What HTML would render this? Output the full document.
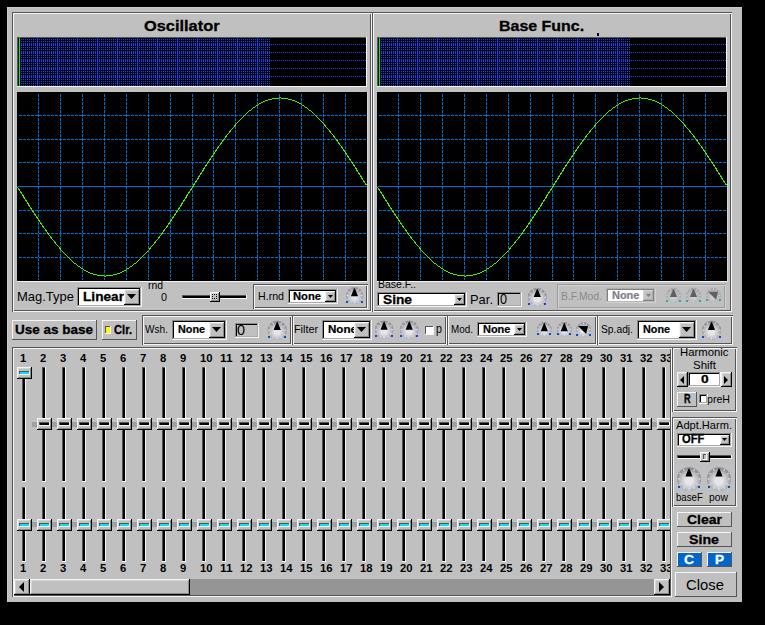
<!DOCTYPE html>
<html><head><meta charset="utf-8"><style>
html,body{margin:0;padding:0;background:#000;width:765px;height:625px;overflow:hidden}
#w{position:relative;width:765px;height:625px;overflow:hidden;font-family:"Liberation Sans",sans-serif}
#w i,#w b,#w svg{position:absolute;display:block}
#w i{font-style:normal}
#w b{white-space:pre;transform-origin:0 0}
</style></head><body><div id="w">
<i style="left:7px;top:7px;width:735px;height:595px;background:#c0c0c0;"></i>
<i style="left:7px;top:7px;width:735px;height:1px;background:#cbcbcb;"></i>
<i style="left:7px;top:7px;width:1px;height:595px;background:#cbcbcb;"></i>
<i style="left:17px;top:86px;width:350px;height:1px;background:#f5f5f5;"></i>
<i style="left:366px;top:37px;width:1px;height:49px;background:#f5f5f5;"></i>
<i style="left:17px;top:37px;width:349px;height:1px;background:#555555;"></i>
<i style="left:17px;top:38px;width:1px;height:48px;background:#555555;"></i>
<i style="left:18px;top:38px;width:348px;height:48px;background:#000;"></i>
<svg style="position:absolute;left:17px;top:37px" width="350" height="49" shape-rendering="crispEdges"><defs><pattern id="p17" x="0" y="0" width="2" height="2" patternUnits="userSpaceOnUse"><rect x="0" y="0" width="1" height="1" fill="#0a46ff"/></pattern><pattern id="q17" x="0" y="0" width="2" height="1" patternUnits="userSpaceOnUse"><rect x="0" y="0" width="1" height="1" fill="#0a46ff"/></pattern></defs><rect x="4" y="2" width="249" height="47" fill="url(#p17)"/>
<rect x="0" y="7" width="349" height="1" fill="url(#q17)"/>
<rect x="0" y="15" width="349" height="1" fill="url(#q17)"/>
<rect x="0" y="23" width="349" height="1" fill="url(#q17)"/>
<rect x="0" y="31" width="349" height="1" fill="url(#q17)"/>
<rect x="0" y="39" width="349" height="1" fill="url(#q17)"/>
<rect x="20" y="1" width="1" height="48" fill="#0a46ff"/>
<rect x="40" y="1" width="1" height="48" fill="#0a46ff"/>
<rect x="60" y="1" width="1" height="48" fill="#0a46ff"/>
<rect x="80" y="1" width="1" height="48" fill="#0a46ff"/>
<rect x="100" y="1" width="1" height="48" fill="#0a46ff"/>
<rect x="120" y="1" width="1" height="48" fill="#0a46ff"/>
<rect x="140" y="1" width="1" height="48" fill="#0a46ff"/>
<rect x="160" y="1" width="1" height="48" fill="#0a46ff"/>
<rect x="180" y="1" width="1" height="48" fill="#0a46ff"/>
<rect x="200" y="1" width="1" height="48" fill="#0a46ff"/>
<rect x="220" y="1" width="1" height="48" fill="#0a46ff"/>
<rect x="240" y="1" width="1" height="48" fill="#0a46ff"/>
<rect x="2" y="1" width="1" height="48" fill="#00ff00"/>
</svg>
<i style="left:377px;top:86px;width:350px;height:1px;background:#f5f5f5;"></i>
<i style="left:726px;top:37px;width:1px;height:49px;background:#f5f5f5;"></i>
<i style="left:377px;top:37px;width:349px;height:1px;background:#555555;"></i>
<i style="left:377px;top:38px;width:1px;height:48px;background:#555555;"></i>
<i style="left:378px;top:38px;width:348px;height:48px;background:#000;"></i>
<svg style="position:absolute;left:377px;top:37px" width="350" height="49" shape-rendering="crispEdges"><defs><pattern id="p377" x="0" y="0" width="2" height="2" patternUnits="userSpaceOnUse"><rect x="0" y="0" width="1" height="1" fill="#0a46ff"/></pattern><pattern id="q377" x="0" y="0" width="2" height="1" patternUnits="userSpaceOnUse"><rect x="0" y="0" width="1" height="1" fill="#0a46ff"/></pattern></defs><rect x="4" y="2" width="249" height="47" fill="url(#p377)"/>
<rect x="0" y="7" width="349" height="1" fill="url(#q377)"/>
<rect x="0" y="15" width="349" height="1" fill="url(#q377)"/>
<rect x="0" y="23" width="349" height="1" fill="url(#q377)"/>
<rect x="0" y="31" width="349" height="1" fill="url(#q377)"/>
<rect x="0" y="39" width="349" height="1" fill="url(#q377)"/>
<rect x="20" y="1" width="1" height="48" fill="#0a46ff"/>
<rect x="40" y="1" width="1" height="48" fill="#0a46ff"/>
<rect x="60" y="1" width="1" height="48" fill="#0a46ff"/>
<rect x="80" y="1" width="1" height="48" fill="#0a46ff"/>
<rect x="100" y="1" width="1" height="48" fill="#0a46ff"/>
<rect x="120" y="1" width="1" height="48" fill="#0a46ff"/>
<rect x="140" y="1" width="1" height="48" fill="#0a46ff"/>
<rect x="160" y="1" width="1" height="48" fill="#0a46ff"/>
<rect x="180" y="1" width="1" height="48" fill="#0a46ff"/>
<rect x="200" y="1" width="1" height="48" fill="#0a46ff"/>
<rect x="220" y="1" width="1" height="48" fill="#0a46ff"/>
<rect x="240" y="1" width="1" height="48" fill="#0a46ff"/>
<rect x="2" y="1" width="1" height="48" fill="#00ff00"/>
</svg>
<i style="left:17px;top:92px;width:351px;height:190px;background:#000;"></i>
<i style="left:17px;top:281px;width:351px;height:1px;background:#f5f5f5;"></i>
<i style="left:367px;top:92px;width:1px;height:190px;background:#d5d5d5;"></i>
<i style="left:38px;top:94px;width:1px;height:186px;background:repeating-linear-gradient(to bottom,#006ecd 0,#006ecd 3px,transparent 3px,transparent 4px);"></i>
<i style="left:60px;top:94px;width:1px;height:186px;background:repeating-linear-gradient(to bottom,#006ecd 0,#006ecd 3px,transparent 3px,transparent 4px);"></i>
<i style="left:82px;top:94px;width:1px;height:186px;background:repeating-linear-gradient(to bottom,#006ecd 0,#006ecd 3px,transparent 3px,transparent 4px);"></i>
<i style="left:104px;top:94px;width:1px;height:186px;background:repeating-linear-gradient(to bottom,#006ecd 0,#006ecd 3px,transparent 3px,transparent 4px);"></i>
<i style="left:126px;top:94px;width:1px;height:186px;background:repeating-linear-gradient(to bottom,#006ecd 0,#006ecd 3px,transparent 3px,transparent 4px);"></i>
<i style="left:148px;top:94px;width:1px;height:186px;background:repeating-linear-gradient(to bottom,#006ecd 0,#006ecd 3px,transparent 3px,transparent 4px);"></i>
<i style="left:170px;top:94px;width:1px;height:186px;background:repeating-linear-gradient(to bottom,#006ecd 0,#006ecd 3px,transparent 3px,transparent 4px);"></i>
<i style="left:192px;top:94px;width:1px;height:186px;background:repeating-linear-gradient(to bottom,#006ecd 0,#006ecd 3px,transparent 3px,transparent 4px);"></i>
<i style="left:213px;top:94px;width:1px;height:186px;background:repeating-linear-gradient(to bottom,#006ecd 0,#006ecd 3px,transparent 3px,transparent 4px);"></i>
<i style="left:235px;top:94px;width:1px;height:186px;background:repeating-linear-gradient(to bottom,#006ecd 0,#006ecd 3px,transparent 3px,transparent 4px);"></i>
<i style="left:257px;top:94px;width:1px;height:186px;background:repeating-linear-gradient(to bottom,#006ecd 0,#006ecd 3px,transparent 3px,transparent 4px);"></i>
<i style="left:279px;top:94px;width:1px;height:186px;background:repeating-linear-gradient(to bottom,#006ecd 0,#006ecd 3px,transparent 3px,transparent 4px);"></i>
<i style="left:301px;top:94px;width:1px;height:186px;background:repeating-linear-gradient(to bottom,#006ecd 0,#006ecd 3px,transparent 3px,transparent 4px);"></i>
<i style="left:323px;top:94px;width:1px;height:186px;background:repeating-linear-gradient(to bottom,#006ecd 0,#006ecd 3px,transparent 3px,transparent 4px);"></i>
<i style="left:345px;top:94px;width:1px;height:186px;background:repeating-linear-gradient(to bottom,#006ecd 0,#006ecd 3px,transparent 3px,transparent 4px);"></i>
<i style="left:19px;top:115px;width:348px;height:1px;background:repeating-linear-gradient(to right,#006ecd 0,#006ecd 3px,transparent 3px,transparent 4px);"></i>
<i style="left:19px;top:139px;width:348px;height:1px;background:repeating-linear-gradient(to right,#006ecd 0,#006ecd 3px,transparent 3px,transparent 4px);"></i>
<i style="left:19px;top:162px;width:348px;height:1px;background:repeating-linear-gradient(to right,#006ecd 0,#006ecd 3px,transparent 3px,transparent 4px);"></i>
<i style="left:19px;top:210px;width:348px;height:1px;background:repeating-linear-gradient(to right,#006ecd 0,#006ecd 3px,transparent 3px,transparent 4px);"></i>
<i style="left:19px;top:233px;width:348px;height:1px;background:repeating-linear-gradient(to right,#006ecd 0,#006ecd 3px,transparent 3px,transparent 4px);"></i>
<i style="left:19px;top:257px;width:348px;height:1px;background:repeating-linear-gradient(to right,#006ecd 0,#006ecd 3px,transparent 3px,transparent 4px);"></i>
<i style="left:18px;top:186px;width:349px;height:1px;background:#006ecd;"></i>
<svg style="position:absolute;left:17px;top:92px" width="351" height="190" shape-rendering="crispEdges"><polyline fill="none" stroke="#4cec00" stroke-width="1.3" points="0.5,95.5 1.5,96.5 2.5,98.5 3.5,99.5 4.5,101.5 5.5,102.5 6.5,104.5 7.5,106.5 8.5,107.5 9.5,109.5 10.5,110.5 11.5,112.5 12.5,114.5 13.5,115.5 14.5,117.5 15.5,118.5 16.5,120.5 17.5,121.5 18.5,123.5 19.5,124.5 20.5,126.5 21.5,127.5 22.5,129.5 23.5,130.5 24.5,132.5 25.5,133.5 26.5,135.5 27.5,136.5 28.5,137.5 29.5,139.5 30.5,140.5 31.5,142.5 32.5,143.5 33.5,144.5 34.5,146.5 35.5,147.5 36.5,148.5 37.5,149.5 38.5,151.5 39.5,152.5 40.5,153.5 41.5,154.5 42.5,155.5 43.5,157.5 44.5,158.5 45.5,159.5 46.5,160.5 47.5,161.5 48.5,162.5 49.5,163.5 50.5,164.5 51.5,165.5 52.5,166.5 53.5,167.5 54.5,168.5 55.5,169.5 56.5,170.5 57.5,171.5 58.5,171.5 59.5,172.5 60.5,173.5 61.5,174.5 62.5,174.5 63.5,175.5 64.5,176.5 65.5,176.5 66.5,177.5 67.5,178.5 68.5,178.5 69.5,179.5 70.5,179.5 71.5,180.5 72.5,180.5 73.5,181.5 74.5,181.5 75.5,181.5 76.5,182.5 77.5,182.5 78.5,182.5 79.5,182.5 80.5,183.5 81.5,183.5 82.5,183.5 83.5,183.5 84.5,183.5 85.5,183.5 86.5,183.5 87.5,184.5 88.5,184.5 89.5,183.5 90.5,183.5 91.5,183.5 92.5,183.5 93.5,183.5 94.5,183.5 95.5,183.5 96.5,182.5 97.5,182.5 98.5,182.5 99.5,182.5 100.5,181.5 101.5,181.5 102.5,181.5 103.5,180.5 104.5,180.5 105.5,179.5 106.5,179.5 107.5,178.5 108.5,178.5 109.5,177.5 110.5,176.5 111.5,176.5 112.5,175.5 113.5,174.5 114.5,174.5 115.5,173.5 116.5,172.5 117.5,171.5 118.5,171.5 119.5,170.5 120.5,169.5 121.5,168.5 122.5,167.5 123.5,166.5 124.5,165.5 125.5,164.5 126.5,163.5 127.5,162.5 128.5,161.5 129.5,160.5 130.5,159.5 131.5,158.5 132.5,157.5 133.5,155.5 134.5,154.5 135.5,153.5 136.5,152.5 137.5,151.5 138.5,149.5 139.5,148.5 140.5,147.5 141.5,146.5 142.5,144.5 143.5,143.5 144.5,142.5 145.5,140.5 146.5,139.5 147.5,137.5 148.5,136.5 149.5,135.5 150.5,133.5 151.5,132.5 152.5,130.5 153.5,129.5 154.5,127.5 155.5,126.5 156.5,124.5 157.5,123.5 158.5,121.5 159.5,120.5 160.5,118.5 161.5,117.5 162.5,115.5 163.5,114.5 164.5,112.5 165.5,110.5 166.5,109.5 167.5,107.5 168.5,106.5 169.5,104.5 170.5,102.5 171.5,101.5 172.5,99.5 173.5,98.5 174.5,96.5 175.5,95.5 176.5,93.5 177.5,91.5 178.5,90.5 179.5,88.5 180.5,87.5 181.5,85.5 182.5,83.5 183.5,82.5 184.5,80.5 185.5,79.5 186.5,77.5 187.5,75.5 188.5,74.5 189.5,72.5 190.5,71.5 191.5,69.5 192.5,68.5 193.5,66.5 194.5,65.5 195.5,63.5 196.5,62.5 197.5,60.5 198.5,59.5 199.5,57.5 200.5,56.5 201.5,54.5 202.5,53.5 203.5,52.5 204.5,50.5 205.5,49.5 206.5,47.5 207.5,46.5 208.5,45.5 209.5,43.5 210.5,42.5 211.5,41.5 212.5,40.5 213.5,38.5 214.5,37.5 215.5,36.5 216.5,35.5 217.5,34.5 218.5,32.5 219.5,31.5 220.5,30.5 221.5,29.5 222.5,28.5 223.5,27.5 224.5,26.5 225.5,25.5 226.5,24.5 227.5,23.5 228.5,22.5 229.5,21.5 230.5,20.5 231.5,19.5 232.5,18.5 233.5,18.5 234.5,17.5 235.5,16.5 236.5,15.5 237.5,15.5 238.5,14.5 239.5,13.5 240.5,13.5 241.5,12.5 242.5,11.5 243.5,11.5 244.5,10.5 245.5,10.5 246.5,9.5 247.5,9.5 248.5,8.5 249.5,8.5 250.5,8.5 251.5,7.5 252.5,7.5 253.5,7.5 254.5,7.5 255.5,6.5 256.5,6.5 257.5,6.5 258.5,6.5 259.5,6.5 260.5,6.5 261.5,6.5 262.5,5.5 263.5,5.5 264.5,6.5 265.5,6.5 266.5,6.5 267.5,6.5 268.5,6.5 269.5,6.5 270.5,6.5 271.5,7.5 272.5,7.5 273.5,7.5 274.5,7.5 275.5,8.5 276.5,8.5 277.5,8.5 278.5,9.5 279.5,9.5 280.5,10.5 281.5,10.5 282.5,11.5 283.5,11.5 284.5,12.5 285.5,13.5 286.5,13.5 287.5,14.5 288.5,15.5 289.5,15.5 290.5,16.5 291.5,17.5 292.5,18.5 293.5,18.5 294.5,19.5 295.5,20.5 296.5,21.5 297.5,22.5 298.5,23.5 299.5,24.5 300.5,25.5 301.5,26.5 302.5,27.5 303.5,28.5 304.5,29.5 305.5,30.5 306.5,31.5 307.5,32.5 308.5,34.5 309.5,35.5 310.5,36.5 311.5,37.5 312.5,38.5 313.5,40.5 314.5,41.5 315.5,42.5 316.5,43.5 317.5,45.5 318.5,46.5 319.5,47.5 320.5,49.5 321.5,50.5 322.5,52.5 323.5,53.5 324.5,54.5 325.5,56.5 326.5,57.5 327.5,59.5 328.5,60.5 329.5,62.5 330.5,63.5 331.5,65.5 332.5,66.5 333.5,68.5 334.5,69.5 335.5,71.5 336.5,72.5 337.5,74.5 338.5,75.5 339.5,77.5 340.5,79.5 341.5,80.5 342.5,82.5 343.5,83.5 344.5,85.5 345.5,87.5 346.5,88.5 347.5,90.5 348.5,91.5 349.5,93.5"/></svg>
<i style="left:377px;top:92px;width:351px;height:190px;background:#000;"></i>
<i style="left:377px;top:281px;width:351px;height:1px;background:#f5f5f5;"></i>
<i style="left:727px;top:92px;width:1px;height:190px;background:#d5d5d5;"></i>
<i style="left:398px;top:94px;width:1px;height:186px;background:repeating-linear-gradient(to bottom,#006ecd 0,#006ecd 3px,transparent 3px,transparent 4px);"></i>
<i style="left:420px;top:94px;width:1px;height:186px;background:repeating-linear-gradient(to bottom,#006ecd 0,#006ecd 3px,transparent 3px,transparent 4px);"></i>
<i style="left:442px;top:94px;width:1px;height:186px;background:repeating-linear-gradient(to bottom,#006ecd 0,#006ecd 3px,transparent 3px,transparent 4px);"></i>
<i style="left:464px;top:94px;width:1px;height:186px;background:repeating-linear-gradient(to bottom,#006ecd 0,#006ecd 3px,transparent 3px,transparent 4px);"></i>
<i style="left:486px;top:94px;width:1px;height:186px;background:repeating-linear-gradient(to bottom,#006ecd 0,#006ecd 3px,transparent 3px,transparent 4px);"></i>
<i style="left:508px;top:94px;width:1px;height:186px;background:repeating-linear-gradient(to bottom,#006ecd 0,#006ecd 3px,transparent 3px,transparent 4px);"></i>
<i style="left:530px;top:94px;width:1px;height:186px;background:repeating-linear-gradient(to bottom,#006ecd 0,#006ecd 3px,transparent 3px,transparent 4px);"></i>
<i style="left:552px;top:94px;width:1px;height:186px;background:repeating-linear-gradient(to bottom,#006ecd 0,#006ecd 3px,transparent 3px,transparent 4px);"></i>
<i style="left:573px;top:94px;width:1px;height:186px;background:repeating-linear-gradient(to bottom,#006ecd 0,#006ecd 3px,transparent 3px,transparent 4px);"></i>
<i style="left:595px;top:94px;width:1px;height:186px;background:repeating-linear-gradient(to bottom,#006ecd 0,#006ecd 3px,transparent 3px,transparent 4px);"></i>
<i style="left:617px;top:94px;width:1px;height:186px;background:repeating-linear-gradient(to bottom,#006ecd 0,#006ecd 3px,transparent 3px,transparent 4px);"></i>
<i style="left:639px;top:94px;width:1px;height:186px;background:repeating-linear-gradient(to bottom,#006ecd 0,#006ecd 3px,transparent 3px,transparent 4px);"></i>
<i style="left:661px;top:94px;width:1px;height:186px;background:repeating-linear-gradient(to bottom,#006ecd 0,#006ecd 3px,transparent 3px,transparent 4px);"></i>
<i style="left:683px;top:94px;width:1px;height:186px;background:repeating-linear-gradient(to bottom,#006ecd 0,#006ecd 3px,transparent 3px,transparent 4px);"></i>
<i style="left:705px;top:94px;width:1px;height:186px;background:repeating-linear-gradient(to bottom,#006ecd 0,#006ecd 3px,transparent 3px,transparent 4px);"></i>
<i style="left:379px;top:115px;width:348px;height:1px;background:repeating-linear-gradient(to right,#006ecd 0,#006ecd 3px,transparent 3px,transparent 4px);"></i>
<i style="left:379px;top:139px;width:348px;height:1px;background:repeating-linear-gradient(to right,#006ecd 0,#006ecd 3px,transparent 3px,transparent 4px);"></i>
<i style="left:379px;top:162px;width:348px;height:1px;background:repeating-linear-gradient(to right,#006ecd 0,#006ecd 3px,transparent 3px,transparent 4px);"></i>
<i style="left:379px;top:210px;width:348px;height:1px;background:repeating-linear-gradient(to right,#006ecd 0,#006ecd 3px,transparent 3px,transparent 4px);"></i>
<i style="left:379px;top:233px;width:348px;height:1px;background:repeating-linear-gradient(to right,#006ecd 0,#006ecd 3px,transparent 3px,transparent 4px);"></i>
<i style="left:379px;top:257px;width:348px;height:1px;background:repeating-linear-gradient(to right,#006ecd 0,#006ecd 3px,transparent 3px,transparent 4px);"></i>
<i style="left:378px;top:186px;width:349px;height:1px;background:#006ecd;"></i>
<svg style="position:absolute;left:377px;top:92px" width="351" height="190" shape-rendering="crispEdges"><polyline fill="none" stroke="#4cec00" stroke-width="1.3" points="0.5,95.5 1.5,96.5 2.5,98.5 3.5,99.5 4.5,101.5 5.5,102.5 6.5,104.5 7.5,106.5 8.5,107.5 9.5,109.5 10.5,110.5 11.5,112.5 12.5,114.5 13.5,115.5 14.5,117.5 15.5,118.5 16.5,120.5 17.5,121.5 18.5,123.5 19.5,124.5 20.5,126.5 21.5,127.5 22.5,129.5 23.5,130.5 24.5,132.5 25.5,133.5 26.5,135.5 27.5,136.5 28.5,137.5 29.5,139.5 30.5,140.5 31.5,142.5 32.5,143.5 33.5,144.5 34.5,146.5 35.5,147.5 36.5,148.5 37.5,149.5 38.5,151.5 39.5,152.5 40.5,153.5 41.5,154.5 42.5,155.5 43.5,157.5 44.5,158.5 45.5,159.5 46.5,160.5 47.5,161.5 48.5,162.5 49.5,163.5 50.5,164.5 51.5,165.5 52.5,166.5 53.5,167.5 54.5,168.5 55.5,169.5 56.5,170.5 57.5,171.5 58.5,171.5 59.5,172.5 60.5,173.5 61.5,174.5 62.5,174.5 63.5,175.5 64.5,176.5 65.5,176.5 66.5,177.5 67.5,178.5 68.5,178.5 69.5,179.5 70.5,179.5 71.5,180.5 72.5,180.5 73.5,181.5 74.5,181.5 75.5,181.5 76.5,182.5 77.5,182.5 78.5,182.5 79.5,182.5 80.5,183.5 81.5,183.5 82.5,183.5 83.5,183.5 84.5,183.5 85.5,183.5 86.5,183.5 87.5,184.5 88.5,184.5 89.5,183.5 90.5,183.5 91.5,183.5 92.5,183.5 93.5,183.5 94.5,183.5 95.5,183.5 96.5,182.5 97.5,182.5 98.5,182.5 99.5,182.5 100.5,181.5 101.5,181.5 102.5,181.5 103.5,180.5 104.5,180.5 105.5,179.5 106.5,179.5 107.5,178.5 108.5,178.5 109.5,177.5 110.5,176.5 111.5,176.5 112.5,175.5 113.5,174.5 114.5,174.5 115.5,173.5 116.5,172.5 117.5,171.5 118.5,171.5 119.5,170.5 120.5,169.5 121.5,168.5 122.5,167.5 123.5,166.5 124.5,165.5 125.5,164.5 126.5,163.5 127.5,162.5 128.5,161.5 129.5,160.5 130.5,159.5 131.5,158.5 132.5,157.5 133.5,155.5 134.5,154.5 135.5,153.5 136.5,152.5 137.5,151.5 138.5,149.5 139.5,148.5 140.5,147.5 141.5,146.5 142.5,144.5 143.5,143.5 144.5,142.5 145.5,140.5 146.5,139.5 147.5,137.5 148.5,136.5 149.5,135.5 150.5,133.5 151.5,132.5 152.5,130.5 153.5,129.5 154.5,127.5 155.5,126.5 156.5,124.5 157.5,123.5 158.5,121.5 159.5,120.5 160.5,118.5 161.5,117.5 162.5,115.5 163.5,114.5 164.5,112.5 165.5,110.5 166.5,109.5 167.5,107.5 168.5,106.5 169.5,104.5 170.5,102.5 171.5,101.5 172.5,99.5 173.5,98.5 174.5,96.5 175.5,95.5 176.5,93.5 177.5,91.5 178.5,90.5 179.5,88.5 180.5,87.5 181.5,85.5 182.5,83.5 183.5,82.5 184.5,80.5 185.5,79.5 186.5,77.5 187.5,75.5 188.5,74.5 189.5,72.5 190.5,71.5 191.5,69.5 192.5,68.5 193.5,66.5 194.5,65.5 195.5,63.5 196.5,62.5 197.5,60.5 198.5,59.5 199.5,57.5 200.5,56.5 201.5,54.5 202.5,53.5 203.5,52.5 204.5,50.5 205.5,49.5 206.5,47.5 207.5,46.5 208.5,45.5 209.5,43.5 210.5,42.5 211.5,41.5 212.5,40.5 213.5,38.5 214.5,37.5 215.5,36.5 216.5,35.5 217.5,34.5 218.5,32.5 219.5,31.5 220.5,30.5 221.5,29.5 222.5,28.5 223.5,27.5 224.5,26.5 225.5,25.5 226.5,24.5 227.5,23.5 228.5,22.5 229.5,21.5 230.5,20.5 231.5,19.5 232.5,18.5 233.5,18.5 234.5,17.5 235.5,16.5 236.5,15.5 237.5,15.5 238.5,14.5 239.5,13.5 240.5,13.5 241.5,12.5 242.5,11.5 243.5,11.5 244.5,10.5 245.5,10.5 246.5,9.5 247.5,9.5 248.5,8.5 249.5,8.5 250.5,8.5 251.5,7.5 252.5,7.5 253.5,7.5 254.5,7.5 255.5,6.5 256.5,6.5 257.5,6.5 258.5,6.5 259.5,6.5 260.5,6.5 261.5,6.5 262.5,5.5 263.5,5.5 264.5,6.5 265.5,6.5 266.5,6.5 267.5,6.5 268.5,6.5 269.5,6.5 270.5,6.5 271.5,7.5 272.5,7.5 273.5,7.5 274.5,7.5 275.5,8.5 276.5,8.5 277.5,8.5 278.5,9.5 279.5,9.5 280.5,10.5 281.5,10.5 282.5,11.5 283.5,11.5 284.5,12.5 285.5,13.5 286.5,13.5 287.5,14.5 288.5,15.5 289.5,15.5 290.5,16.5 291.5,17.5 292.5,18.5 293.5,18.5 294.5,19.5 295.5,20.5 296.5,21.5 297.5,22.5 298.5,23.5 299.5,24.5 300.5,25.5 301.5,26.5 302.5,27.5 303.5,28.5 304.5,29.5 305.5,30.5 306.5,31.5 307.5,32.5 308.5,34.5 309.5,35.5 310.5,36.5 311.5,37.5 312.5,38.5 313.5,40.5 314.5,41.5 315.5,42.5 316.5,43.5 317.5,45.5 318.5,46.5 319.5,47.5 320.5,49.5 321.5,50.5 322.5,52.5 323.5,53.5 324.5,54.5 325.5,56.5 326.5,57.5 327.5,59.5 328.5,60.5 329.5,62.5 330.5,63.5 331.5,65.5 332.5,66.5 333.5,68.5 334.5,69.5 335.5,71.5 336.5,72.5 337.5,74.5 338.5,75.5 339.5,77.5 340.5,79.5 341.5,80.5 342.5,82.5 343.5,83.5 344.5,85.5 345.5,87.5 346.5,88.5 347.5,90.5 348.5,91.5 349.5,93.5"/></svg>
<i style="left:12px;top:12px;width:360px;height:1px;background:#555555;"></i>
<i style="left:12px;top:13px;width:1px;height:299px;background:#555555;"></i>
<i style="left:13px;top:311px;width:359px;height:1px;background:#f5f5f5;"></i>
<i style="left:371px;top:13px;width:1px;height:298px;background:#f5f5f5;"></i>
<i style="left:13px;top:13px;width:358px;height:1px;background:#f5f5f5;"></i>
<i style="left:13px;top:14px;width:1px;height:297px;background:#f5f5f5;"></i>
<i style="left:14px;top:310px;width:357px;height:1px;background:#555555;"></i>
<i style="left:370px;top:14px;width:1px;height:296px;background:#555555;"></i>
<i style="left:372px;top:12px;width:360px;height:1px;background:#555555;"></i>
<i style="left:372px;top:13px;width:1px;height:299px;background:#555555;"></i>
<i style="left:373px;top:311px;width:359px;height:1px;background:#f5f5f5;"></i>
<i style="left:731px;top:13px;width:1px;height:298px;background:#f5f5f5;"></i>
<i style="left:373px;top:13px;width:358px;height:1px;background:#f5f5f5;"></i>
<i style="left:373px;top:14px;width:1px;height:297px;background:#f5f5f5;"></i>
<i style="left:374px;top:310px;width:357px;height:1px;background:#555555;"></i>
<i style="left:730px;top:14px;width:1px;height:296px;background:#555555;"></i>
<b style="left:144.20px;top:17px;font-size:14.84px;line-height:19px;font-weight:bold;color:#000;transform:scaleX(1.1044);-webkit-text-stroke:0.30px #000">Oscillator</b>
<b style="left:499.38px;top:17px;font-size:14.84px;line-height:19px;font-weight:bold;color:#000;transform:scaleX(1.0767);-webkit-text-stroke:0.30px #000">Base Func.</b>
<i style="left:597px;top:33px;width:2px;height:3px;background:#000;"></i>
<b style="left:17.00px;top:288px;font-size:12.96px;line-height:17px;font-weight:normal;color:#000;transform:scaleX(1.0019)">Mag.Type</b>
<i style="left:77px;top:306px;width:65px;height:1px;background:#f5f5f5;"></i>
<i style="left:141px;top:287px;width:1px;height:19px;background:#f5f5f5;"></i>
<i style="left:77px;top:287px;width:64px;height:1px;background:#8a8a8a;"></i>
<i style="left:77px;top:288px;width:1px;height:18px;background:#8a8a8a;"></i>
<i style="left:78px;top:305px;width:63px;height:1px;background:#aaaaaa;"></i>
<i style="left:140px;top:288px;width:1px;height:17px;background:#aaaaaa;"></i>
<i style="left:78px;top:288px;width:62px;height:1px;background:#000000;"></i>
<i style="left:78px;top:289px;width:1px;height:16px;background:#000000;"></i>
<i style="left:79px;top:289px;width:61px;height:16px;background:#fff;"></i>
<b style="left:83.00px;top:288px;font-size:12.96px;line-height:17px;font-weight:bold;color:#000;transform:scaleX(1.0545);-webkit-text-stroke:0.30px #000">Linear</b>
<i style="left:124px;top:304px;width:16px;height:1px;background:#000000;"></i>
<i style="left:139px;top:289px;width:1px;height:15px;background:#000000;"></i>
<i style="left:124px;top:289px;width:15px;height:1px;background:#f5f5f5;"></i>
<i style="left:124px;top:290px;width:1px;height:14px;background:#f5f5f5;"></i>
<i style="left:125px;top:303px;width:14px;height:1px;background:#8a8a8a;"></i>
<i style="left:138px;top:290px;width:1px;height:13px;background:#8a8a8a;"></i>
<i style="left:125px;top:290px;width:13px;height:1px;background:#d5d5d5;"></i>
<i style="left:125px;top:291px;width:1px;height:12px;background:#d5d5d5;"></i>
<i style="left:126px;top:291px;width:12px;height:12px;background:#c0c0c0;"></i>
<svg style="position:absolute;left:127px;top:294px" width="9" height="5"><polygon fill="#000" points="0,0 9,0 4.5,5.0"/></svg>
<b style="left:148.00px;top:278px;font-size:10.80px;line-height:14px;font-weight:normal;color:#000;transform:scaleX(0.9612)">rnd</b>
<b style="left:161.00px;top:290px;font-size:10.80px;line-height:14px;font-weight:normal;color:#000;transform:scaleX(1.0010)">0</b>
<i style="left:182px;top:298px;width:65px;height:1px;background:#f5f5f5;"></i>
<i style="left:246px;top:295px;width:1px;height:3px;background:#f5f5f5;"></i>
<i style="left:182px;top:295px;width:64px;height:1px;background:#555555;"></i>
<i style="left:182px;top:296px;width:1px;height:2px;background:#555555;"></i>
<i style="left:183px;top:296px;width:63px;height:2px;background:#000;"></i>
<i style="left:210px;top:301px;width:10px;height:1px;background:#000000;"></i>
<i style="left:219px;top:292px;width:1px;height:9px;background:#000000;"></i>
<i style="left:210px;top:292px;width:9px;height:1px;background:#f5f5f5;"></i>
<i style="left:210px;top:293px;width:1px;height:8px;background:#f5f5f5;"></i>
<i style="left:211px;top:300px;width:8px;height:1px;background:#8a8a8a;"></i>
<i style="left:218px;top:293px;width:1px;height:7px;background:#8a8a8a;"></i>
<i style="left:211px;top:293px;width:7px;height:1px;background:#d5d5d5;"></i>
<i style="left:211px;top:294px;width:1px;height:6px;background:#d5d5d5;"></i>
<i style="left:212px;top:294px;width:6px;height:6px;background:#c0c0c0;"></i>
<i style="left:212px;top:294px;width:1px;height:1px;background:#000;"></i>
<i style="left:214px;top:294px;width:1px;height:1px;background:#000;"></i>
<i style="left:216px;top:294px;width:1px;height:1px;background:#000;"></i>
<i style="left:212px;top:296px;width:1px;height:1px;background:#000;"></i>
<i style="left:216px;top:296px;width:1px;height:1px;background:#000;"></i>
<i style="left:212px;top:298px;width:1px;height:1px;background:#000;"></i>
<i style="left:214px;top:298px;width:1px;height:1px;background:#000;"></i>
<i style="left:216px;top:298px;width:1px;height:1px;background:#000;"></i>
<i style="left:253px;top:284px;width:115px;height:1px;background:#555555;"></i>
<i style="left:253px;top:285px;width:1px;height:24px;background:#555555;"></i>
<i style="left:254px;top:308px;width:114px;height:1px;background:#f5f5f5;"></i>
<i style="left:367px;top:285px;width:1px;height:23px;background:#f5f5f5;"></i>
<i style="left:254px;top:285px;width:113px;height:1px;background:#f5f5f5;"></i>
<i style="left:254px;top:286px;width:1px;height:22px;background:#f5f5f5;"></i>
<i style="left:255px;top:307px;width:112px;height:1px;background:#555555;"></i>
<i style="left:366px;top:286px;width:1px;height:21px;background:#555555;"></i>
<b style="left:258.00px;top:289px;font-size:10.80px;line-height:14px;font-weight:normal;color:#000;transform:scaleX(0.9846)">H.rnd</b>
<i style="left:288px;top:303px;width:50px;height:1px;background:#f5f5f5;"></i>
<i style="left:337px;top:289px;width:1px;height:14px;background:#f5f5f5;"></i>
<i style="left:288px;top:289px;width:49px;height:1px;background:#8a8a8a;"></i>
<i style="left:288px;top:290px;width:1px;height:13px;background:#8a8a8a;"></i>
<i style="left:289px;top:302px;width:48px;height:1px;background:#aaaaaa;"></i>
<i style="left:336px;top:290px;width:1px;height:12px;background:#aaaaaa;"></i>
<i style="left:289px;top:290px;width:47px;height:1px;background:#000000;"></i>
<i style="left:289px;top:291px;width:1px;height:11px;background:#000000;"></i>
<i style="left:290px;top:291px;width:46px;height:11px;background:#fff;"></i>
<b style="left:293.00px;top:289px;font-size:10.80px;line-height:14px;font-weight:bold;color:#000;transform:scaleX(1.0370);-webkit-text-stroke:0.22px #000">None</b>
<i style="left:325px;top:301px;width:11px;height:1px;background:#000000;"></i>
<i style="left:335px;top:291px;width:1px;height:10px;background:#000000;"></i>
<i style="left:325px;top:291px;width:10px;height:1px;background:#f5f5f5;"></i>
<i style="left:325px;top:292px;width:1px;height:9px;background:#f5f5f5;"></i>
<i style="left:326px;top:300px;width:9px;height:1px;background:#8a8a8a;"></i>
<i style="left:334px;top:292px;width:1px;height:8px;background:#8a8a8a;"></i>
<i style="left:326px;top:292px;width:8px;height:1px;background:#d5d5d5;"></i>
<i style="left:326px;top:293px;width:1px;height:7px;background:#d5d5d5;"></i>
<i style="left:327px;top:293px;width:7px;height:7px;background:#c0c0c0;"></i>
<svg style="position:absolute;left:328px;top:295px" width="5" height="3"><polygon fill="#000" points="0,0 5,0 2.5,3.0"/></svg>
<svg style="position:absolute;left:342px;top:283px" width="25" height="25"><defs><radialGradient id="g3545_2955" cx="0.5" cy="0.58" r="0.5"><stop offset="0" stop-color="#e6e6ea"/><stop offset="0.3" stop-color="#e6e6ea"/><stop offset="0.75" stop-color="#bdbdc1"/><stop offset="1" stop-color="#929294"/></radialGradient></defs><circle cx="12.50" cy="12.50" r="8.50" fill="url(#g3545_2955)"/><line x1="12.50" y1="6.04" x2="12.50" y2="4.43" stroke="#e4e4f8" stroke-width="1"/><line x1="15.73" y1="6.91" x2="16.54" y2="5.51" stroke="#e4e4f8" stroke-width="1"/><line x1="18.09" y1="9.27" x2="19.49" y2="8.46" stroke="#e4e4f8" stroke-width="1"/><line x1="18.96" y1="12.50" x2="20.57" y2="12.50" stroke="#e4e4f8" stroke-width="1"/><line x1="18.09" y1="15.73" x2="19.49" y2="16.54" stroke="#e4e4f8" stroke-width="1"/><line x1="15.73" y1="18.09" x2="16.54" y2="19.49" stroke="#e4e4f8" stroke-width="1"/><line x1="12.50" y1="18.96" x2="12.50" y2="20.57" stroke="#e4e4f8" stroke-width="1"/><line x1="9.27" y1="18.09" x2="8.46" y2="19.49" stroke="#e4e4f8" stroke-width="1"/><line x1="6.91" y1="15.73" x2="5.51" y2="16.54" stroke="#e4e4f8" stroke-width="1"/><line x1="6.04" y1="12.50" x2="4.43" y2="12.50" stroke="#e4e4f8" stroke-width="1"/><line x1="6.91" y1="9.27" x2="5.51" y2="8.46" stroke="#e4e4f8" stroke-width="1"/><line x1="9.27" y1="6.91" x2="8.46" y2="5.51" stroke="#e4e4f8" stroke-width="1"/><rect x="4" y="18" width="2" height="2" fill="#0050d8" shape-rendering="crispEdges"/><rect x="19" y="18" width="2" height="2" fill="#0050d8" shape-rendering="crispEdges"/><polygon fill="#000" points="12.50,4.43 8.90,13.23 16.10,13.23"/></svg>
<b style="left:377.50px;top:277px;font-size:10.80px;line-height:14px;font-weight:normal;color:#000;transform:scaleX(0.9733)">Base.F..</b>
<i style="left:377px;top:306px;width:90px;height:1px;background:#f5f5f5;"></i>
<i style="left:466px;top:292px;width:1px;height:14px;background:#f5f5f5;"></i>
<i style="left:377px;top:292px;width:89px;height:1px;background:#8a8a8a;"></i>
<i style="left:377px;top:293px;width:1px;height:13px;background:#8a8a8a;"></i>
<i style="left:378px;top:305px;width:88px;height:1px;background:#aaaaaa;"></i>
<i style="left:465px;top:293px;width:1px;height:12px;background:#aaaaaa;"></i>
<i style="left:378px;top:293px;width:87px;height:1px;background:#000000;"></i>
<i style="left:378px;top:294px;width:1px;height:11px;background:#000000;"></i>
<i style="left:379px;top:294px;width:86px;height:11px;background:#fff;"></i>
<b style="left:383.00px;top:291px;font-size:12.96px;line-height:17px;font-weight:bold;color:#000;transform:scaleX(1.0605);-webkit-text-stroke:0.30px #000">Sine</b>
<i style="left:454px;top:304px;width:11px;height:1px;background:#000000;"></i>
<i style="left:464px;top:294px;width:1px;height:10px;background:#000000;"></i>
<i style="left:454px;top:294px;width:10px;height:1px;background:#f5f5f5;"></i>
<i style="left:454px;top:295px;width:1px;height:9px;background:#f5f5f5;"></i>
<i style="left:455px;top:303px;width:9px;height:1px;background:#8a8a8a;"></i>
<i style="left:463px;top:295px;width:1px;height:8px;background:#8a8a8a;"></i>
<i style="left:455px;top:295px;width:8px;height:1px;background:#d5d5d5;"></i>
<i style="left:455px;top:296px;width:1px;height:7px;background:#d5d5d5;"></i>
<i style="left:456px;top:296px;width:7px;height:7px;background:#c0c0c0;"></i>
<svg style="position:absolute;left:457px;top:298px" width="5" height="3"><polygon fill="#000" points="0,0 5,0 2.5,3.0"/></svg>
<b style="left:470.00px;top:291px;font-size:12.96px;line-height:17px;font-weight:normal;color:#000;transform:scaleX(0.9970)">Par.</b>
<i style="left:497px;top:306px;width:25px;height:1px;background:#f5f5f5;"></i>
<i style="left:521px;top:292px;width:1px;height:14px;background:#f5f5f5;"></i>
<i style="left:497px;top:292px;width:24px;height:1px;background:#8a8a8a;"></i>
<i style="left:497px;top:293px;width:1px;height:13px;background:#8a8a8a;"></i>
<i style="left:498px;top:305px;width:23px;height:1px;background:#aaaaaa;"></i>
<i style="left:520px;top:293px;width:1px;height:12px;background:#aaaaaa;"></i>
<i style="left:498px;top:293px;width:22px;height:1px;background:#000000;"></i>
<i style="left:498px;top:294px;width:1px;height:11px;background:#000000;"></i>
<i style="left:499px;top:294px;width:21px;height:11px;background:#c0c0c0;"></i>
<b style="left:500.00px;top:290px;font-size:14.04px;line-height:18px;font-weight:normal;color:#000;transform:scaleX(0.8983)">0</b>
<svg style="position:absolute;left:524px;top:284px" width="26" height="26"><defs><radialGradient id="g5373_2972" cx="0.5" cy="0.58" r="0.5"><stop offset="0" stop-color="#e6e6ea"/><stop offset="0.3" stop-color="#e6e6ea"/><stop offset="0.75" stop-color="#bdbdc1"/><stop offset="1" stop-color="#929294"/></radialGradient></defs><circle cx="13.30" cy="13.20" r="9.40" fill="url(#g5373_2972)"/><line x1="13.30" y1="6.06" x2="13.30" y2="4.27" stroke="#e4e4f8" stroke-width="1"/><line x1="16.87" y1="7.01" x2="17.76" y2="5.47" stroke="#e4e4f8" stroke-width="1"/><line x1="19.49" y1="9.63" x2="21.03" y2="8.73" stroke="#e4e4f8" stroke-width="1"/><line x1="20.44" y1="13.20" x2="22.23" y2="13.20" stroke="#e4e4f8" stroke-width="1"/><line x1="19.49" y1="16.77" x2="21.03" y2="17.66" stroke="#e4e4f8" stroke-width="1"/><line x1="16.87" y1="19.39" x2="17.76" y2="20.93" stroke="#e4e4f8" stroke-width="1"/><line x1="13.30" y1="20.34" x2="13.30" y2="22.13" stroke="#e4e4f8" stroke-width="1"/><line x1="9.73" y1="19.39" x2="8.83" y2="20.93" stroke="#e4e4f8" stroke-width="1"/><line x1="7.11" y1="16.77" x2="5.57" y2="17.66" stroke="#e4e4f8" stroke-width="1"/><line x1="6.16" y1="13.20" x2="4.37" y2="13.20" stroke="#e4e4f8" stroke-width="1"/><line x1="7.11" y1="9.63" x2="5.57" y2="8.73" stroke="#e4e4f8" stroke-width="1"/><line x1="9.73" y1="7.01" x2="8.83" y2="5.47" stroke="#e4e4f8" stroke-width="1"/><rect x="4" y="19" width="2" height="2" fill="#0050d8" shape-rendering="crispEdges"/><rect x="20" y="19" width="2" height="2" fill="#0050d8" shape-rendering="crispEdges"/><polygon fill="#000" points="13.30,4.27 9.70,13.07 16.90,13.07"/></svg>
<i style="left:557px;top:284px;width:169px;height:1px;background:#9d9d9d;"></i>
<i style="left:557px;top:285px;width:1px;height:24px;background:#9d9d9d;"></i>
<i style="left:558px;top:308px;width:168px;height:1px;background:#d1d1d1;"></i>
<i style="left:725px;top:285px;width:1px;height:23px;background:#d1d1d1;"></i>
<i style="left:558px;top:285px;width:167px;height:1px;background:#d1d1d1;"></i>
<i style="left:558px;top:286px;width:1px;height:22px;background:#d1d1d1;"></i>
<i style="left:559px;top:307px;width:166px;height:1px;background:#9d9d9d;"></i>
<i style="left:724px;top:286px;width:1px;height:21px;background:#9d9d9d;"></i>
<b style="left:561.00px;top:289px;font-size:10.80px;line-height:14px;font-weight:normal;color:#8a8a8a;transform:scaleX(0.9623)">B.F.Mod.</b>
<i style="left:606px;top:302px;width:50px;height:1px;background:#d1d1d1;"></i>
<i style="left:655px;top:288px;width:1px;height:14px;background:#d1d1d1;"></i>
<i style="left:606px;top:288px;width:49px;height:1px;background:#aeaeae;"></i>
<i style="left:606px;top:289px;width:1px;height:13px;background:#aeaeae;"></i>
<i style="left:607px;top:301px;width:48px;height:1px;background:#b9b9b9;"></i>
<i style="left:654px;top:289px;width:1px;height:12px;background:#b9b9b9;"></i>
<i style="left:607px;top:289px;width:47px;height:1px;background:#818181;"></i>
<i style="left:607px;top:290px;width:1px;height:11px;background:#818181;"></i>
<i style="left:608px;top:290px;width:46px;height:11px;background:#fff;"></i>
<b style="left:611.80px;top:288px;font-size:10.80px;line-height:14px;font-weight:bold;color:#80808c;transform:scaleX(1.0148);-webkit-text-stroke:0.22px #80808c">None</b>
<i style="left:643px;top:300px;width:11px;height:1px;background:#818181;"></i>
<i style="left:653px;top:290px;width:1px;height:10px;background:#818181;"></i>
<i style="left:643px;top:290px;width:10px;height:1px;background:#d1d1d1;"></i>
<i style="left:643px;top:291px;width:1px;height:9px;background:#d1d1d1;"></i>
<i style="left:644px;top:299px;width:9px;height:1px;background:#aeaeae;"></i>
<i style="left:652px;top:291px;width:1px;height:8px;background:#aeaeae;"></i>
<i style="left:644px;top:291px;width:8px;height:1px;background:#c7c7c7;"></i>
<i style="left:644px;top:292px;width:1px;height:7px;background:#c7c7c7;"></i>
<i style="left:645px;top:292px;width:7px;height:7px;background:#c0c0c0;"></i>
<svg style="position:absolute;left:646px;top:294px" width="5" height="3"><polygon fill="#808080" points="0,0 5,0 2.5,3.0"/></svg>
<svg style="position:absolute;left:662px;top:283px" width="23" height="23"><defs><radialGradient id="g6735_2953" cx="0.5" cy="0.58" r="0.5"><stop offset="0" stop-color="#cfcfd1"/><stop offset="0.3" stop-color="#cfcfd1"/><stop offset="0.75" stop-color="#b6b6b8"/><stop offset="1" stop-color="#a2a2a4"/></radialGradient></defs><circle cx="11.50" cy="12.30" r="7.50" fill="url(#g6735_2953)"/><line x1="11.50" y1="6.60" x2="11.50" y2="5.18" stroke="#d4dcdc" stroke-width="1"/><line x1="14.35" y1="7.36" x2="15.06" y2="6.13" stroke="#d4dcdc" stroke-width="1"/><line x1="16.44" y1="9.45" x2="17.67" y2="8.74" stroke="#d4dcdc" stroke-width="1"/><line x1="17.20" y1="12.30" x2="18.62" y2="12.30" stroke="#d4dcdc" stroke-width="1"/><line x1="16.44" y1="15.15" x2="17.67" y2="15.86" stroke="#d4dcdc" stroke-width="1"/><line x1="14.35" y1="17.24" x2="15.06" y2="18.47" stroke="#d4dcdc" stroke-width="1"/><line x1="11.50" y1="18.00" x2="11.50" y2="19.43" stroke="#d4dcdc" stroke-width="1"/><line x1="8.65" y1="17.24" x2="7.94" y2="18.47" stroke="#d4dcdc" stroke-width="1"/><line x1="6.56" y1="15.15" x2="5.33" y2="15.86" stroke="#d4dcdc" stroke-width="1"/><line x1="5.80" y1="12.30" x2="4.38" y2="12.30" stroke="#d4dcdc" stroke-width="1"/><line x1="6.56" y1="9.45" x2="5.33" y2="8.74" stroke="#d4dcdc" stroke-width="1"/><line x1="8.65" y1="7.36" x2="7.94" y2="6.13" stroke="#d4dcdc" stroke-width="1"/><rect x="4" y="17" width="2" height="2" fill="#30a8b0" shape-rendering="crispEdges"/><rect x="17" y="17" width="2" height="2" fill="#30a8b0" shape-rendering="crispEdges"/><polygon fill="#606060" points="11.50,5.18 7.90,13.98 15.10,13.98"/></svg>
<svg style="position:absolute;left:682px;top:283px" width="23" height="23"><defs><radialGradient id="g6935_2953" cx="0.5" cy="0.58" r="0.5"><stop offset="0" stop-color="#cfcfd1"/><stop offset="0.3" stop-color="#cfcfd1"/><stop offset="0.75" stop-color="#b6b6b8"/><stop offset="1" stop-color="#a2a2a4"/></radialGradient></defs><circle cx="11.50" cy="12.30" r="7.50" fill="url(#g6935_2953)"/><line x1="11.50" y1="6.60" x2="11.50" y2="5.18" stroke="#d4dcdc" stroke-width="1"/><line x1="14.35" y1="7.36" x2="15.06" y2="6.13" stroke="#d4dcdc" stroke-width="1"/><line x1="16.44" y1="9.45" x2="17.67" y2="8.74" stroke="#d4dcdc" stroke-width="1"/><line x1="17.20" y1="12.30" x2="18.62" y2="12.30" stroke="#d4dcdc" stroke-width="1"/><line x1="16.44" y1="15.15" x2="17.67" y2="15.86" stroke="#d4dcdc" stroke-width="1"/><line x1="14.35" y1="17.24" x2="15.06" y2="18.47" stroke="#d4dcdc" stroke-width="1"/><line x1="11.50" y1="18.00" x2="11.50" y2="19.43" stroke="#d4dcdc" stroke-width="1"/><line x1="8.65" y1="17.24" x2="7.94" y2="18.47" stroke="#d4dcdc" stroke-width="1"/><line x1="6.56" y1="15.15" x2="5.33" y2="15.86" stroke="#d4dcdc" stroke-width="1"/><line x1="5.80" y1="12.30" x2="4.38" y2="12.30" stroke="#d4dcdc" stroke-width="1"/><line x1="6.56" y1="9.45" x2="5.33" y2="8.74" stroke="#d4dcdc" stroke-width="1"/><line x1="8.65" y1="7.36" x2="7.94" y2="6.13" stroke="#d4dcdc" stroke-width="1"/><rect x="4" y="17" width="2" height="2" fill="#30a8b0" shape-rendering="crispEdges"/><rect x="17" y="17" width="2" height="2" fill="#30a8b0" shape-rendering="crispEdges"/><polygon fill="#606060" points="11.50,5.18 7.90,13.98 15.10,13.98"/></svg>
<svg style="position:absolute;left:702px;top:284px" width="22" height="22"><defs><radialGradient id="g7135_2953" cx="0.5" cy="0.58" r="0.5"><stop offset="0" stop-color="#cfcfd1"/><stop offset="0.3" stop-color="#cfcfd1"/><stop offset="0.75" stop-color="#b6b6b8"/><stop offset="1" stop-color="#a2a2a4"/></radialGradient></defs><circle cx="11.50" cy="11.30" r="7.30" fill="url(#g7135_2953)"/><line x1="11.50" y1="5.75" x2="11.50" y2="4.37" stroke="#d4dcdc" stroke-width="1"/><line x1="14.27" y1="6.50" x2="14.97" y2="5.29" stroke="#d4dcdc" stroke-width="1"/><line x1="16.30" y1="8.53" x2="17.51" y2="7.83" stroke="#d4dcdc" stroke-width="1"/><line x1="17.05" y1="11.30" x2="18.43" y2="11.30" stroke="#d4dcdc" stroke-width="1"/><line x1="16.30" y1="14.07" x2="17.51" y2="14.77" stroke="#d4dcdc" stroke-width="1"/><line x1="14.27" y1="16.10" x2="14.97" y2="17.31" stroke="#d4dcdc" stroke-width="1"/><line x1="11.50" y1="16.85" x2="11.50" y2="18.24" stroke="#d4dcdc" stroke-width="1"/><line x1="8.73" y1="16.10" x2="8.03" y2="17.31" stroke="#d4dcdc" stroke-width="1"/><line x1="6.70" y1="14.07" x2="5.49" y2="14.77" stroke="#d4dcdc" stroke-width="1"/><line x1="5.95" y1="11.30" x2="4.57" y2="11.30" stroke="#d4dcdc" stroke-width="1"/><line x1="6.70" y1="8.53" x2="5.49" y2="7.83" stroke="#d4dcdc" stroke-width="1"/><line x1="8.73" y1="6.50" x2="8.03" y2="5.29" stroke="#d4dcdc" stroke-width="1"/><rect x="4" y="15" width="2" height="2" fill="#30a8b0" shape-rendering="crispEdges"/><rect x="17" y="15" width="2" height="2" fill="#30a8b0" shape-rendering="crispEdges"/><polygon fill="#606060" points="6.03,7.87 16.03,7.87 14.13,15.75"/></svg>
<i style="left:12px;top:339px;width:85px;height:1px;background:#555555;"></i>
<i style="left:96px;top:320px;width:1px;height:19px;background:#555555;"></i>
<i style="left:12px;top:320px;width:84px;height:1px;background:#f5f5f5;"></i>
<i style="left:12px;top:321px;width:1px;height:18px;background:#f5f5f5;"></i>
<i style="left:13px;top:321px;width:83px;height:18px;background:#c0c0c0;"></i>
<b style="left:15.00px;top:321px;font-size:12.96px;line-height:17px;font-weight:bold;color:#000;transform:scaleX(1.0413);-webkit-text-stroke:0.30px #000">Use as base</b>
<i style="left:102px;top:339px;width:35px;height:1px;background:#555555;"></i>
<i style="left:136px;top:320px;width:1px;height:19px;background:#555555;"></i>
<i style="left:102px;top:320px;width:34px;height:1px;background:#f5f5f5;"></i>
<i style="left:102px;top:321px;width:1px;height:18px;background:#f5f5f5;"></i>
<i style="left:103px;top:321px;width:33px;height:18px;background:#c0c0c0;"></i>
<i style="left:105px;top:333px;width:6px;height:1px;background:#f5f5f5;"></i>
<i style="left:110px;top:326px;width:1px;height:7px;background:#f5f5f5;"></i>
<i style="left:105px;top:326px;width:5px;height:1px;background:#555555;"></i>
<i style="left:105px;top:327px;width:1px;height:6px;background:#555555;"></i>
<i style="left:106px;top:327px;width:4px;height:6px;background:#ffff00;"></i>
<b style="left:114.00px;top:321px;font-size:12.96px;line-height:17px;font-weight:bold;color:#000;transform:scaleX(0.8627);-webkit-text-stroke:0.30px #000">Clr.</b>
<i style="left:142px;top:315px;width:150px;height:1px;background:#555555;"></i>
<i style="left:142px;top:316px;width:1px;height:29px;background:#555555;"></i>
<i style="left:143px;top:344px;width:149px;height:1px;background:#f5f5f5;"></i>
<i style="left:291px;top:316px;width:1px;height:28px;background:#f5f5f5;"></i>
<i style="left:143px;top:316px;width:148px;height:1px;background:#f5f5f5;"></i>
<i style="left:143px;top:317px;width:1px;height:27px;background:#f5f5f5;"></i>
<i style="left:144px;top:343px;width:147px;height:1px;background:#555555;"></i>
<i style="left:290px;top:317px;width:1px;height:26px;background:#555555;"></i>
<b style="left:145.00px;top:322px;font-size:10.80px;line-height:14px;font-weight:normal;color:#000;transform:scaleX(0.9340)">Wsh.</b>
<i style="left:172px;top:339px;width:55px;height:1px;background:#f5f5f5;"></i>
<i style="left:226px;top:320px;width:1px;height:19px;background:#f5f5f5;"></i>
<i style="left:172px;top:320px;width:54px;height:1px;background:#8a8a8a;"></i>
<i style="left:172px;top:321px;width:1px;height:18px;background:#8a8a8a;"></i>
<i style="left:173px;top:338px;width:53px;height:1px;background:#aaaaaa;"></i>
<i style="left:225px;top:321px;width:1px;height:17px;background:#aaaaaa;"></i>
<i style="left:173px;top:321px;width:52px;height:1px;background:#000000;"></i>
<i style="left:173px;top:322px;width:1px;height:16px;background:#000000;"></i>
<i style="left:174px;top:322px;width:51px;height:16px;background:#fff;"></i>
<b style="left:178.00px;top:322px;font-size:10.80px;line-height:14px;font-weight:bold;color:#000;transform:scaleX(1.0000);-webkit-text-stroke:0.22px #000">None</b>
<i style="left:209px;top:337px;width:16px;height:1px;background:#000000;"></i>
<i style="left:224px;top:322px;width:1px;height:15px;background:#000000;"></i>
<i style="left:209px;top:322px;width:15px;height:1px;background:#f5f5f5;"></i>
<i style="left:209px;top:323px;width:1px;height:14px;background:#f5f5f5;"></i>
<i style="left:210px;top:336px;width:14px;height:1px;background:#8a8a8a;"></i>
<i style="left:223px;top:323px;width:1px;height:13px;background:#8a8a8a;"></i>
<i style="left:210px;top:323px;width:13px;height:1px;background:#d5d5d5;"></i>
<i style="left:210px;top:324px;width:1px;height:12px;background:#d5d5d5;"></i>
<i style="left:211px;top:324px;width:12px;height:12px;background:#c0c0c0;"></i>
<svg style="position:absolute;left:212px;top:327px" width="9" height="5"><polygon fill="#000" points="0,0 9,0 4.5,5.0"/></svg>
<i style="left:235px;top:337px;width:24px;height:1px;background:#f5f5f5;"></i>
<i style="left:258px;top:323px;width:1px;height:14px;background:#f5f5f5;"></i>
<i style="left:235px;top:323px;width:23px;height:1px;background:#8a8a8a;"></i>
<i style="left:235px;top:324px;width:1px;height:13px;background:#8a8a8a;"></i>
<i style="left:236px;top:336px;width:22px;height:1px;background:#aaaaaa;"></i>
<i style="left:257px;top:324px;width:1px;height:12px;background:#aaaaaa;"></i>
<i style="left:236px;top:324px;width:21px;height:1px;background:#000000;"></i>
<i style="left:236px;top:325px;width:1px;height:11px;background:#000000;"></i>
<i style="left:237px;top:325px;width:20px;height:11px;background:#c0c0c0;"></i>
<b style="left:237.00px;top:321px;font-size:14.04px;line-height:18px;font-weight:normal;color:#000;transform:scaleX(1.0267)">0</b>
<svg style="position:absolute;left:263px;top:316px" width="27" height="27"><defs><radialGradient id="g2772_3302" cx="0.5" cy="0.58" r="0.5"><stop offset="0" stop-color="#e6e6ea"/><stop offset="0.3" stop-color="#e6e6ea"/><stop offset="0.75" stop-color="#bdbdc1"/><stop offset="1" stop-color="#929294"/></radialGradient></defs><circle cx="14.20" cy="14.20" r="9.60" fill="url(#g2772_3302)"/><line x1="14.20" y1="6.90" x2="14.20" y2="5.08" stroke="#e4e4f8" stroke-width="1"/><line x1="17.85" y1="7.88" x2="18.76" y2="6.30" stroke="#e4e4f8" stroke-width="1"/><line x1="20.52" y1="10.55" x2="22.10" y2="9.64" stroke="#e4e4f8" stroke-width="1"/><line x1="21.50" y1="14.20" x2="23.32" y2="14.20" stroke="#e4e4f8" stroke-width="1"/><line x1="20.52" y1="17.85" x2="22.10" y2="18.76" stroke="#e4e4f8" stroke-width="1"/><line x1="17.85" y1="20.52" x2="18.76" y2="22.10" stroke="#e4e4f8" stroke-width="1"/><line x1="14.20" y1="21.50" x2="14.20" y2="23.32" stroke="#e4e4f8" stroke-width="1"/><line x1="10.55" y1="20.52" x2="9.64" y2="22.10" stroke="#e4e4f8" stroke-width="1"/><line x1="7.88" y1="17.85" x2="6.30" y2="18.76" stroke="#e4e4f8" stroke-width="1"/><line x1="6.90" y1="14.20" x2="5.08" y2="14.20" stroke="#e4e4f8" stroke-width="1"/><line x1="7.88" y1="10.55" x2="6.30" y2="9.64" stroke="#e4e4f8" stroke-width="1"/><line x1="10.55" y1="7.88" x2="9.64" y2="6.30" stroke="#e4e4f8" stroke-width="1"/><rect x="5" y="20" width="2" height="2" fill="#0050d8" shape-rendering="crispEdges"/><rect x="21" y="20" width="2" height="2" fill="#0050d8" shape-rendering="crispEdges"/><polygon fill="#000" points="14.20,5.08 10.60,13.88 17.80,13.88"/></svg>
<i style="left:292px;top:315px;width:155px;height:1px;background:#555555;"></i>
<i style="left:292px;top:316px;width:1px;height:29px;background:#555555;"></i>
<i style="left:293px;top:344px;width:154px;height:1px;background:#f5f5f5;"></i>
<i style="left:446px;top:316px;width:1px;height:28px;background:#f5f5f5;"></i>
<i style="left:293px;top:316px;width:153px;height:1px;background:#f5f5f5;"></i>
<i style="left:293px;top:317px;width:1px;height:27px;background:#f5f5f5;"></i>
<i style="left:294px;top:343px;width:152px;height:1px;background:#555555;"></i>
<i style="left:445px;top:317px;width:1px;height:26px;background:#555555;"></i>
<b style="left:294.00px;top:322px;font-size:10.80px;line-height:14px;font-weight:normal;color:#000;transform:scaleX(1.0010)">Filter</b>
<i style="left:322px;top:339px;width:50px;height:1px;background:#f5f5f5;"></i>
<i style="left:371px;top:320px;width:1px;height:19px;background:#f5f5f5;"></i>
<i style="left:322px;top:320px;width:49px;height:1px;background:#8a8a8a;"></i>
<i style="left:322px;top:321px;width:1px;height:18px;background:#8a8a8a;"></i>
<i style="left:323px;top:338px;width:48px;height:1px;background:#aaaaaa;"></i>
<i style="left:370px;top:321px;width:1px;height:17px;background:#aaaaaa;"></i>
<i style="left:323px;top:321px;width:47px;height:1px;background:#000000;"></i>
<i style="left:323px;top:322px;width:1px;height:16px;background:#000000;"></i>
<i style="left:324px;top:322px;width:46px;height:16px;background:#fff;"></i>
<b style="left:328.00px;top:322px;font-size:10.80px;line-height:14px;font-weight:bold;color:#000;transform:scaleX(1.0741);-webkit-text-stroke:0.22px #000">None</b>
<i style="left:354px;top:337px;width:16px;height:1px;background:#000000;"></i>
<i style="left:369px;top:322px;width:1px;height:15px;background:#000000;"></i>
<i style="left:354px;top:322px;width:15px;height:1px;background:#f5f5f5;"></i>
<i style="left:354px;top:323px;width:1px;height:14px;background:#f5f5f5;"></i>
<i style="left:355px;top:336px;width:14px;height:1px;background:#8a8a8a;"></i>
<i style="left:368px;top:323px;width:1px;height:13px;background:#8a8a8a;"></i>
<i style="left:355px;top:323px;width:13px;height:1px;background:#d5d5d5;"></i>
<i style="left:355px;top:324px;width:1px;height:12px;background:#d5d5d5;"></i>
<i style="left:356px;top:324px;width:12px;height:12px;background:#c0c0c0;"></i>
<svg style="position:absolute;left:357px;top:327px" width="9" height="5"><polygon fill="#000" points="0,0 9,0 4.5,5.0"/></svg>
<svg style="position:absolute;left:371px;top:316px" width="26" height="26"><defs><radialGradient id="g3841_3297" cx="0.5" cy="0.58" r="0.5"><stop offset="0" stop-color="#e6e6ea"/><stop offset="0.3" stop-color="#e6e6ea"/><stop offset="0.75" stop-color="#bdbdc1"/><stop offset="1" stop-color="#929294"/></radialGradient></defs><circle cx="13.10" cy="13.70" r="9.30" fill="url(#g3841_3297)"/><line x1="13.10" y1="6.63" x2="13.10" y2="4.86" stroke="#e4e4f8" stroke-width="1"/><line x1="16.63" y1="7.58" x2="17.52" y2="6.05" stroke="#e4e4f8" stroke-width="1"/><line x1="19.22" y1="10.17" x2="20.75" y2="9.28" stroke="#e4e4f8" stroke-width="1"/><line x1="20.17" y1="13.70" x2="21.94" y2="13.70" stroke="#e4e4f8" stroke-width="1"/><line x1="19.22" y1="17.23" x2="20.75" y2="18.12" stroke="#e4e4f8" stroke-width="1"/><line x1="16.63" y1="19.82" x2="17.52" y2="21.35" stroke="#e4e4f8" stroke-width="1"/><line x1="13.10" y1="20.77" x2="13.10" y2="22.53" stroke="#e4e4f8" stroke-width="1"/><line x1="9.57" y1="19.82" x2="8.68" y2="21.35" stroke="#e4e4f8" stroke-width="1"/><line x1="6.98" y1="17.23" x2="5.45" y2="18.12" stroke="#e4e4f8" stroke-width="1"/><line x1="6.03" y1="13.70" x2="4.27" y2="13.70" stroke="#e4e4f8" stroke-width="1"/><line x1="6.98" y1="10.17" x2="5.45" y2="9.28" stroke="#e4e4f8" stroke-width="1"/><line x1="9.57" y1="7.58" x2="8.68" y2="6.05" stroke="#e4e4f8" stroke-width="1"/><rect x="4" y="19" width="2" height="2" fill="#0050d8" shape-rendering="crispEdges"/><rect x="20" y="19" width="2" height="2" fill="#0050d8" shape-rendering="crispEdges"/><polygon fill="#000" points="13.10,4.86 9.50,13.66 16.70,13.66"/></svg>
<svg style="position:absolute;left:396px;top:316px" width="26" height="26"><defs><radialGradient id="g4092_3297" cx="0.5" cy="0.58" r="0.5"><stop offset="0" stop-color="#e6e6ea"/><stop offset="0.3" stop-color="#e6e6ea"/><stop offset="0.75" stop-color="#bdbdc1"/><stop offset="1" stop-color="#929294"/></radialGradient></defs><circle cx="13.20" cy="13.70" r="9.30" fill="url(#g4092_3297)"/><line x1="13.20" y1="6.63" x2="13.20" y2="4.86" stroke="#e4e4f8" stroke-width="1"/><line x1="16.73" y1="7.58" x2="17.62" y2="6.05" stroke="#e4e4f8" stroke-width="1"/><line x1="19.32" y1="10.17" x2="20.85" y2="9.28" stroke="#e4e4f8" stroke-width="1"/><line x1="20.27" y1="13.70" x2="22.03" y2="13.70" stroke="#e4e4f8" stroke-width="1"/><line x1="19.32" y1="17.23" x2="20.85" y2="18.12" stroke="#e4e4f8" stroke-width="1"/><line x1="16.73" y1="19.82" x2="17.62" y2="21.35" stroke="#e4e4f8" stroke-width="1"/><line x1="13.20" y1="20.77" x2="13.20" y2="22.53" stroke="#e4e4f8" stroke-width="1"/><line x1="9.67" y1="19.82" x2="8.78" y2="21.35" stroke="#e4e4f8" stroke-width="1"/><line x1="7.08" y1="17.23" x2="5.55" y2="18.12" stroke="#e4e4f8" stroke-width="1"/><line x1="6.13" y1="13.70" x2="4.36" y2="13.70" stroke="#e4e4f8" stroke-width="1"/><line x1="7.08" y1="10.17" x2="5.55" y2="9.28" stroke="#e4e4f8" stroke-width="1"/><line x1="9.67" y1="7.58" x2="8.78" y2="6.05" stroke="#e4e4f8" stroke-width="1"/><rect x="4" y="19" width="2" height="2" fill="#0050d8" shape-rendering="crispEdges"/><rect x="20" y="19" width="2" height="2" fill="#0050d8" shape-rendering="crispEdges"/><polygon fill="#000" points="13.20,4.86 9.60,13.66 16.80,13.66"/></svg>
<i style="left:425px;top:334px;width:9px;height:1px;background:#f5f5f5;"></i>
<i style="left:433px;top:326px;width:1px;height:8px;background:#f5f5f5;"></i>
<i style="left:425px;top:326px;width:8px;height:1px;background:#555555;"></i>
<i style="left:425px;top:327px;width:1px;height:7px;background:#555555;"></i>
<i style="left:426px;top:327px;width:7px;height:7px;background:#fff;"></i>
<b style="left:436.40px;top:322px;font-size:11.88px;line-height:15px;font-weight:normal;color:#000;transform:scaleX(0.8948)">p</b>
<i style="left:447px;top:315px;width:150px;height:1px;background:#555555;"></i>
<i style="left:447px;top:316px;width:1px;height:29px;background:#555555;"></i>
<i style="left:448px;top:344px;width:149px;height:1px;background:#f5f5f5;"></i>
<i style="left:596px;top:316px;width:1px;height:28px;background:#f5f5f5;"></i>
<i style="left:448px;top:316px;width:148px;height:1px;background:#f5f5f5;"></i>
<i style="left:448px;top:317px;width:1px;height:27px;background:#f5f5f5;"></i>
<i style="left:449px;top:343px;width:147px;height:1px;background:#555555;"></i>
<i style="left:595px;top:317px;width:1px;height:26px;background:#555555;"></i>
<b style="left:451.00px;top:322px;font-size:10.80px;line-height:14px;font-weight:normal;color:#000;transform:scaleX(0.9155)">Mod.</b>
<i style="left:477px;top:336px;width:50px;height:1px;background:#f5f5f5;"></i>
<i style="left:526px;top:322px;width:1px;height:14px;background:#f5f5f5;"></i>
<i style="left:477px;top:322px;width:49px;height:1px;background:#8a8a8a;"></i>
<i style="left:477px;top:323px;width:1px;height:13px;background:#8a8a8a;"></i>
<i style="left:478px;top:335px;width:48px;height:1px;background:#aaaaaa;"></i>
<i style="left:525px;top:323px;width:1px;height:12px;background:#aaaaaa;"></i>
<i style="left:478px;top:323px;width:47px;height:1px;background:#000000;"></i>
<i style="left:478px;top:324px;width:1px;height:11px;background:#000000;"></i>
<i style="left:479px;top:324px;width:46px;height:11px;background:#fff;"></i>
<b style="left:483.00px;top:322px;font-size:10.80px;line-height:14px;font-weight:bold;color:#000;transform:scaleX(1.0148);-webkit-text-stroke:0.22px #000">None</b>
<i style="left:514px;top:334px;width:11px;height:1px;background:#000000;"></i>
<i style="left:524px;top:324px;width:1px;height:10px;background:#000000;"></i>
<i style="left:514px;top:324px;width:10px;height:1px;background:#f5f5f5;"></i>
<i style="left:514px;top:325px;width:1px;height:9px;background:#f5f5f5;"></i>
<i style="left:515px;top:333px;width:9px;height:1px;background:#8a8a8a;"></i>
<i style="left:523px;top:325px;width:1px;height:8px;background:#8a8a8a;"></i>
<i style="left:515px;top:325px;width:8px;height:1px;background:#d5d5d5;"></i>
<i style="left:515px;top:326px;width:1px;height:7px;background:#d5d5d5;"></i>
<i style="left:516px;top:326px;width:7px;height:7px;background:#c0c0c0;"></i>
<svg style="position:absolute;left:517px;top:328px" width="5" height="3"><polygon fill="#000" points="0,0 5,0 2.5,3.0"/></svg>
<svg style="position:absolute;left:533px;top:318px" width="22" height="22"><defs><radialGradient id="g5443_3293" cx="0.5" cy="0.58" r="0.5"><stop offset="0" stop-color="#e6e6ea"/><stop offset="0.3" stop-color="#e6e6ea"/><stop offset="0.75" stop-color="#bdbdc1"/><stop offset="1" stop-color="#929294"/></radialGradient></defs><circle cx="11.30" cy="11.30" r="7.30" fill="url(#g5443_3293)"/><line x1="11.30" y1="5.75" x2="11.30" y2="4.37" stroke="#e4e4f8" stroke-width="1"/><line x1="14.07" y1="6.50" x2="14.77" y2="5.29" stroke="#e4e4f8" stroke-width="1"/><line x1="16.10" y1="8.53" x2="17.31" y2="7.83" stroke="#e4e4f8" stroke-width="1"/><line x1="16.85" y1="11.30" x2="18.23" y2="11.30" stroke="#e4e4f8" stroke-width="1"/><line x1="16.10" y1="14.07" x2="17.31" y2="14.77" stroke="#e4e4f8" stroke-width="1"/><line x1="14.07" y1="16.10" x2="14.77" y2="17.31" stroke="#e4e4f8" stroke-width="1"/><line x1="11.30" y1="16.85" x2="11.30" y2="18.24" stroke="#e4e4f8" stroke-width="1"/><line x1="8.53" y1="16.10" x2="7.83" y2="17.31" stroke="#e4e4f8" stroke-width="1"/><line x1="6.50" y1="14.07" x2="5.29" y2="14.77" stroke="#e4e4f8" stroke-width="1"/><line x1="5.75" y1="11.30" x2="4.36" y2="11.30" stroke="#e4e4f8" stroke-width="1"/><line x1="6.50" y1="8.53" x2="5.29" y2="7.83" stroke="#e4e4f8" stroke-width="1"/><line x1="8.53" y1="6.50" x2="7.83" y2="5.29" stroke="#e4e4f8" stroke-width="1"/><rect x="4" y="15" width="2" height="2" fill="#0050d8" shape-rendering="crispEdges"/><rect x="16" y="15" width="2" height="2" fill="#0050d8" shape-rendering="crispEdges"/><polygon fill="#000" points="11.30,4.37 7.70,13.17 14.90,13.17"/></svg>
<svg style="position:absolute;left:553px;top:318px" width="22" height="22"><defs><radialGradient id="g5643_3293" cx="0.5" cy="0.58" r="0.5"><stop offset="0" stop-color="#e6e6ea"/><stop offset="0.3" stop-color="#e6e6ea"/><stop offset="0.75" stop-color="#bdbdc1"/><stop offset="1" stop-color="#929294"/></radialGradient></defs><circle cx="11.30" cy="11.30" r="7.30" fill="url(#g5643_3293)"/><line x1="11.30" y1="5.75" x2="11.30" y2="4.37" stroke="#e4e4f8" stroke-width="1"/><line x1="14.07" y1="6.50" x2="14.77" y2="5.29" stroke="#e4e4f8" stroke-width="1"/><line x1="16.10" y1="8.53" x2="17.31" y2="7.83" stroke="#e4e4f8" stroke-width="1"/><line x1="16.85" y1="11.30" x2="18.23" y2="11.30" stroke="#e4e4f8" stroke-width="1"/><line x1="16.10" y1="14.07" x2="17.31" y2="14.77" stroke="#e4e4f8" stroke-width="1"/><line x1="14.07" y1="16.10" x2="14.77" y2="17.31" stroke="#e4e4f8" stroke-width="1"/><line x1="11.30" y1="16.85" x2="11.30" y2="18.24" stroke="#e4e4f8" stroke-width="1"/><line x1="8.53" y1="16.10" x2="7.83" y2="17.31" stroke="#e4e4f8" stroke-width="1"/><line x1="6.50" y1="14.07" x2="5.29" y2="14.77" stroke="#e4e4f8" stroke-width="1"/><line x1="5.75" y1="11.30" x2="4.36" y2="11.30" stroke="#e4e4f8" stroke-width="1"/><line x1="6.50" y1="8.53" x2="5.29" y2="7.83" stroke="#e4e4f8" stroke-width="1"/><line x1="8.53" y1="6.50" x2="7.83" y2="5.29" stroke="#e4e4f8" stroke-width="1"/><rect x="4" y="15" width="2" height="2" fill="#0050d8" shape-rendering="crispEdges"/><rect x="16" y="15" width="2" height="2" fill="#0050d8" shape-rendering="crispEdges"/><polygon fill="#000" points="11.30,4.37 7.70,13.17 14.90,13.17"/></svg>
<svg style="position:absolute;left:572px;top:318px" width="22" height="22"><defs><radialGradient id="g5835_3295" cx="0.5" cy="0.58" r="0.5"><stop offset="0" stop-color="#e6e6ea"/><stop offset="0.3" stop-color="#e6e6ea"/><stop offset="0.75" stop-color="#bdbdc1"/><stop offset="1" stop-color="#929294"/></radialGradient></defs><circle cx="11.50" cy="11.50" r="7.30" fill="url(#g5835_3295)"/><line x1="11.50" y1="5.95" x2="11.50" y2="4.57" stroke="#e4e4f8" stroke-width="1"/><line x1="14.27" y1="6.70" x2="14.97" y2="5.49" stroke="#e4e4f8" stroke-width="1"/><line x1="16.30" y1="8.73" x2="17.51" y2="8.03" stroke="#e4e4f8" stroke-width="1"/><line x1="17.05" y1="11.50" x2="18.43" y2="11.50" stroke="#e4e4f8" stroke-width="1"/><line x1="16.30" y1="14.27" x2="17.51" y2="14.97" stroke="#e4e4f8" stroke-width="1"/><line x1="14.27" y1="16.30" x2="14.97" y2="17.51" stroke="#e4e4f8" stroke-width="1"/><line x1="11.50" y1="17.05" x2="11.50" y2="18.43" stroke="#e4e4f8" stroke-width="1"/><line x1="8.73" y1="16.30" x2="8.03" y2="17.51" stroke="#e4e4f8" stroke-width="1"/><line x1="6.70" y1="14.27" x2="5.49" y2="14.97" stroke="#e4e4f8" stroke-width="1"/><line x1="5.95" y1="11.50" x2="4.57" y2="11.50" stroke="#e4e4f8" stroke-width="1"/><line x1="6.70" y1="8.73" x2="5.49" y2="8.03" stroke="#e4e4f8" stroke-width="1"/><line x1="8.73" y1="6.70" x2="8.03" y2="5.49" stroke="#e4e4f8" stroke-width="1"/><rect x="4" y="16" width="2" height="2" fill="#0050d8" shape-rendering="crispEdges"/><rect x="17" y="16" width="2" height="2" fill="#0050d8" shape-rendering="crispEdges"/><polygon fill="#000" points="6.03,8.07 16.03,8.07 14.13,15.95"/></svg>
<i style="left:597px;top:315px;width:136px;height:1px;background:#555555;"></i>
<i style="left:597px;top:316px;width:1px;height:29px;background:#555555;"></i>
<i style="left:598px;top:344px;width:135px;height:1px;background:#f5f5f5;"></i>
<i style="left:732px;top:316px;width:1px;height:28px;background:#f5f5f5;"></i>
<i style="left:598px;top:316px;width:134px;height:1px;background:#f5f5f5;"></i>
<i style="left:598px;top:317px;width:1px;height:27px;background:#f5f5f5;"></i>
<i style="left:599px;top:343px;width:133px;height:1px;background:#555555;"></i>
<i style="left:731px;top:317px;width:1px;height:26px;background:#555555;"></i>
<b style="left:601.00px;top:322px;font-size:10.80px;line-height:14px;font-weight:normal;color:#000;transform:scaleX(0.9512)">Sp.adj.</b>
<i style="left:637px;top:339px;width:60px;height:1px;background:#f5f5f5;"></i>
<i style="left:696px;top:320px;width:1px;height:19px;background:#f5f5f5;"></i>
<i style="left:637px;top:320px;width:59px;height:1px;background:#8a8a8a;"></i>
<i style="left:637px;top:321px;width:1px;height:18px;background:#8a8a8a;"></i>
<i style="left:638px;top:338px;width:58px;height:1px;background:#aaaaaa;"></i>
<i style="left:695px;top:321px;width:1px;height:17px;background:#aaaaaa;"></i>
<i style="left:638px;top:321px;width:57px;height:1px;background:#000000;"></i>
<i style="left:638px;top:322px;width:1px;height:16px;background:#000000;"></i>
<i style="left:639px;top:322px;width:56px;height:16px;background:#fff;"></i>
<b style="left:643.00px;top:322px;font-size:10.80px;line-height:14px;font-weight:bold;color:#000;transform:scaleX(1.0000);-webkit-text-stroke:0.22px #000">None</b>
<i style="left:679px;top:337px;width:16px;height:1px;background:#000000;"></i>
<i style="left:694px;top:322px;width:1px;height:15px;background:#000000;"></i>
<i style="left:679px;top:322px;width:15px;height:1px;background:#f5f5f5;"></i>
<i style="left:679px;top:323px;width:1px;height:14px;background:#f5f5f5;"></i>
<i style="left:680px;top:336px;width:14px;height:1px;background:#8a8a8a;"></i>
<i style="left:693px;top:323px;width:1px;height:13px;background:#8a8a8a;"></i>
<i style="left:680px;top:323px;width:13px;height:1px;background:#d5d5d5;"></i>
<i style="left:680px;top:324px;width:1px;height:12px;background:#d5d5d5;"></i>
<i style="left:681px;top:324px;width:12px;height:12px;background:#c0c0c0;"></i>
<svg style="position:absolute;left:682px;top:327px" width="9" height="5"><polygon fill="#000" points="0,0 9,0 4.5,5.0"/></svg>
<svg style="position:absolute;left:698px;top:316px" width="27" height="27"><defs><radialGradient id="g7115_3302" cx="0.5" cy="0.58" r="0.5"><stop offset="0" stop-color="#e6e6ea"/><stop offset="0.3" stop-color="#e6e6ea"/><stop offset="0.75" stop-color="#bdbdc1"/><stop offset="1" stop-color="#929294"/></radialGradient></defs><circle cx="13.50" cy="14.20" r="9.60" fill="url(#g7115_3302)"/><line x1="13.50" y1="6.90" x2="13.50" y2="5.08" stroke="#e4e4f8" stroke-width="1"/><line x1="17.15" y1="7.88" x2="18.06" y2="6.30" stroke="#e4e4f8" stroke-width="1"/><line x1="19.82" y1="10.55" x2="21.40" y2="9.64" stroke="#e4e4f8" stroke-width="1"/><line x1="20.80" y1="14.20" x2="22.62" y2="14.20" stroke="#e4e4f8" stroke-width="1"/><line x1="19.82" y1="17.85" x2="21.40" y2="18.76" stroke="#e4e4f8" stroke-width="1"/><line x1="17.15" y1="20.52" x2="18.06" y2="22.10" stroke="#e4e4f8" stroke-width="1"/><line x1="13.50" y1="21.50" x2="13.50" y2="23.32" stroke="#e4e4f8" stroke-width="1"/><line x1="9.85" y1="20.52" x2="8.94" y2="22.10" stroke="#e4e4f8" stroke-width="1"/><line x1="7.18" y1="17.85" x2="5.60" y2="18.76" stroke="#e4e4f8" stroke-width="1"/><line x1="6.20" y1="14.20" x2="4.38" y2="14.20" stroke="#e4e4f8" stroke-width="1"/><line x1="7.18" y1="10.55" x2="5.60" y2="9.64" stroke="#e4e4f8" stroke-width="1"/><line x1="9.85" y1="7.88" x2="8.94" y2="6.30" stroke="#e4e4f8" stroke-width="1"/><rect x="4" y="20" width="2" height="2" fill="#0050d8" shape-rendering="crispEdges"/><rect x="21" y="20" width="2" height="2" fill="#0050d8" shape-rendering="crispEdges"/><polygon fill="#000" points="13.50,5.08 9.90,13.88 17.10,13.88"/></svg>
<i style="left:12px;top:347px;width:660px;height:1px;background:#555555;"></i>
<i style="left:12px;top:348px;width:1px;height:249px;background:#555555;"></i>
<i style="left:13px;top:596px;width:659px;height:1px;background:#f5f5f5;"></i>
<i style="left:671px;top:348px;width:1px;height:248px;background:#f5f5f5;"></i>
<i style="left:13px;top:348px;width:658px;height:1px;background:#f5f5f5;"></i>
<i style="left:13px;top:349px;width:1px;height:247px;background:#f5f5f5;"></i>
<i style="left:14px;top:595px;width:657px;height:1px;background:#555555;"></i>
<i style="left:670px;top:349px;width:1px;height:246px;background:#555555;"></i>
<i style="left:32px;top:422px;width:638px;height:5px;background:#a0a0a0;"></i>
<i style="left:32px;top:522px;width:638px;height:5px;background:#a0a0a0;"></i>
<div style="position:absolute;left:14px;top:349px;width:656px;height:230px;overflow:hidden">
<b style="left:6.00px;top:3px;font-size:10.40px;line-height:14px;font-weight:bold;color:#000;transform:scaleX(1.0837)">1</b>
<b style="left:6.00px;top:213px;font-size:10.40px;line-height:14px;font-weight:bold;color:#000;transform:scaleX(1.0837)">1</b>
<i style="left:8px;top:132px;width:4px;height:1px;background:#f5f5f5;"></i>
<i style="left:11px;top:18px;width:1px;height:114px;background:#f5f5f5;"></i>
<i style="left:8px;top:18px;width:3px;height:1px;background:#555555;"></i>
<i style="left:8px;top:19px;width:1px;height:113px;background:#555555;"></i>
<i style="left:9px;top:19px;width:2px;height:113px;background:#000;"></i>
<i style="left:3px;top:29px;width:15px;height:1px;background:#000000;"></i>
<i style="left:17px;top:18px;width:1px;height:11px;background:#000000;"></i>
<i style="left:3px;top:18px;width:14px;height:1px;background:#f5f5f5;"></i>
<i style="left:3px;top:19px;width:1px;height:10px;background:#f5f5f5;"></i>
<i style="left:4px;top:28px;width:13px;height:1px;background:#8a8a8a;"></i>
<i style="left:16px;top:19px;width:1px;height:9px;background:#8a8a8a;"></i>
<i style="left:4px;top:19px;width:12px;height:1px;background:#d5d5d5;"></i>
<i style="left:4px;top:20px;width:1px;height:8px;background:#d5d5d5;"></i>
<i style="left:5px;top:20px;width:11px;height:8px;background:#c0c0c0;"></i>
<i style="left:5px;top:25px;width:11px;height:1px;background:#f5f5f5;"></i>
<i style="left:15px;top:22px;width:1px;height:3px;background:#f5f5f5;"></i>
<i style="left:5px;top:22px;width:10px;height:1px;background:#555555;"></i>
<i style="left:5px;top:23px;width:1px;height:2px;background:#555555;"></i>
<i style="left:6px;top:23px;width:9px;height:2px;background:#00e4ff;"></i>
<i style="left:8px;top:212px;width:4px;height:1px;background:#f5f5f5;"></i>
<i style="left:11px;top:138px;width:1px;height:74px;background:#f5f5f5;"></i>
<i style="left:8px;top:138px;width:3px;height:1px;background:#555555;"></i>
<i style="left:8px;top:139px;width:1px;height:73px;background:#555555;"></i>
<i style="left:9px;top:139px;width:2px;height:73px;background:#000;"></i>
<i style="left:3px;top:181px;width:15px;height:1px;background:#000000;"></i>
<i style="left:17px;top:170px;width:1px;height:11px;background:#000000;"></i>
<i style="left:3px;top:170px;width:14px;height:1px;background:#f5f5f5;"></i>
<i style="left:3px;top:171px;width:1px;height:10px;background:#f5f5f5;"></i>
<i style="left:4px;top:180px;width:13px;height:1px;background:#8a8a8a;"></i>
<i style="left:16px;top:171px;width:1px;height:9px;background:#8a8a8a;"></i>
<i style="left:4px;top:171px;width:12px;height:1px;background:#d5d5d5;"></i>
<i style="left:4px;top:172px;width:1px;height:8px;background:#d5d5d5;"></i>
<i style="left:5px;top:172px;width:11px;height:8px;background:#c0c0c0;"></i>
<i style="left:5px;top:177px;width:11px;height:1px;background:#f5f5f5;"></i>
<i style="left:15px;top:174px;width:1px;height:3px;background:#f5f5f5;"></i>
<i style="left:5px;top:174px;width:10px;height:1px;background:#555555;"></i>
<i style="left:5px;top:175px;width:1px;height:2px;background:#555555;"></i>
<i style="left:6px;top:175px;width:9px;height:2px;background:#00e4ff;"></i>
<b style="left:26.00px;top:3px;font-size:10.40px;line-height:14px;font-weight:bold;color:#000;transform:scaleX(1.0837)">2</b>
<b style="left:26.00px;top:213px;font-size:10.40px;line-height:14px;font-weight:bold;color:#000;transform:scaleX(1.0837)">2</b>
<i style="left:28px;top:132px;width:4px;height:1px;background:#f5f5f5;"></i>
<i style="left:31px;top:18px;width:1px;height:114px;background:#f5f5f5;"></i>
<i style="left:28px;top:18px;width:3px;height:1px;background:#555555;"></i>
<i style="left:28px;top:19px;width:1px;height:113px;background:#555555;"></i>
<i style="left:29px;top:19px;width:2px;height:113px;background:#000;"></i>
<i style="left:23px;top:80px;width:15px;height:1px;background:#000000;"></i>
<i style="left:37px;top:69px;width:1px;height:11px;background:#000000;"></i>
<i style="left:23px;top:69px;width:14px;height:1px;background:#f5f5f5;"></i>
<i style="left:23px;top:70px;width:1px;height:10px;background:#f5f5f5;"></i>
<i style="left:24px;top:79px;width:13px;height:1px;background:#8a8a8a;"></i>
<i style="left:36px;top:70px;width:1px;height:9px;background:#8a8a8a;"></i>
<i style="left:24px;top:70px;width:12px;height:1px;background:#d5d5d5;"></i>
<i style="left:24px;top:71px;width:1px;height:8px;background:#d5d5d5;"></i>
<i style="left:25px;top:71px;width:11px;height:8px;background:#c0c0c0;"></i>
<i style="left:25px;top:76px;width:11px;height:1px;background:#f5f5f5;"></i>
<i style="left:35px;top:73px;width:1px;height:3px;background:#f5f5f5;"></i>
<i style="left:25px;top:73px;width:10px;height:1px;background:#555555;"></i>
<i style="left:25px;top:74px;width:1px;height:2px;background:#555555;"></i>
<i style="left:26px;top:74px;width:9px;height:2px;background:#000;"></i>
<i style="left:28px;top:212px;width:4px;height:1px;background:#f5f5f5;"></i>
<i style="left:31px;top:138px;width:1px;height:74px;background:#f5f5f5;"></i>
<i style="left:28px;top:138px;width:3px;height:1px;background:#555555;"></i>
<i style="left:28px;top:139px;width:1px;height:73px;background:#555555;"></i>
<i style="left:29px;top:139px;width:2px;height:73px;background:#000;"></i>
<i style="left:23px;top:181px;width:15px;height:1px;background:#000000;"></i>
<i style="left:37px;top:170px;width:1px;height:11px;background:#000000;"></i>
<i style="left:23px;top:170px;width:14px;height:1px;background:#f5f5f5;"></i>
<i style="left:23px;top:171px;width:1px;height:10px;background:#f5f5f5;"></i>
<i style="left:24px;top:180px;width:13px;height:1px;background:#8a8a8a;"></i>
<i style="left:36px;top:171px;width:1px;height:9px;background:#8a8a8a;"></i>
<i style="left:24px;top:171px;width:12px;height:1px;background:#d5d5d5;"></i>
<i style="left:24px;top:172px;width:1px;height:8px;background:#d5d5d5;"></i>
<i style="left:25px;top:172px;width:11px;height:8px;background:#c0c0c0;"></i>
<i style="left:25px;top:177px;width:11px;height:1px;background:#f5f5f5;"></i>
<i style="left:35px;top:174px;width:1px;height:3px;background:#f5f5f5;"></i>
<i style="left:25px;top:174px;width:10px;height:1px;background:#555555;"></i>
<i style="left:25px;top:175px;width:1px;height:2px;background:#555555;"></i>
<i style="left:26px;top:175px;width:9px;height:2px;background:#00e4ff;"></i>
<b style="left:46.00px;top:3px;font-size:10.40px;line-height:14px;font-weight:bold;color:#000;transform:scaleX(1.0837)">3</b>
<b style="left:46.00px;top:213px;font-size:10.40px;line-height:14px;font-weight:bold;color:#000;transform:scaleX(1.0837)">3</b>
<i style="left:48px;top:132px;width:4px;height:1px;background:#f5f5f5;"></i>
<i style="left:51px;top:18px;width:1px;height:114px;background:#f5f5f5;"></i>
<i style="left:48px;top:18px;width:3px;height:1px;background:#555555;"></i>
<i style="left:48px;top:19px;width:1px;height:113px;background:#555555;"></i>
<i style="left:49px;top:19px;width:2px;height:113px;background:#000;"></i>
<i style="left:43px;top:80px;width:15px;height:1px;background:#000000;"></i>
<i style="left:57px;top:69px;width:1px;height:11px;background:#000000;"></i>
<i style="left:43px;top:69px;width:14px;height:1px;background:#f5f5f5;"></i>
<i style="left:43px;top:70px;width:1px;height:10px;background:#f5f5f5;"></i>
<i style="left:44px;top:79px;width:13px;height:1px;background:#8a8a8a;"></i>
<i style="left:56px;top:70px;width:1px;height:9px;background:#8a8a8a;"></i>
<i style="left:44px;top:70px;width:12px;height:1px;background:#d5d5d5;"></i>
<i style="left:44px;top:71px;width:1px;height:8px;background:#d5d5d5;"></i>
<i style="left:45px;top:71px;width:11px;height:8px;background:#c0c0c0;"></i>
<i style="left:45px;top:76px;width:11px;height:1px;background:#f5f5f5;"></i>
<i style="left:55px;top:73px;width:1px;height:3px;background:#f5f5f5;"></i>
<i style="left:45px;top:73px;width:10px;height:1px;background:#555555;"></i>
<i style="left:45px;top:74px;width:1px;height:2px;background:#555555;"></i>
<i style="left:46px;top:74px;width:9px;height:2px;background:#000;"></i>
<i style="left:48px;top:212px;width:4px;height:1px;background:#f5f5f5;"></i>
<i style="left:51px;top:138px;width:1px;height:74px;background:#f5f5f5;"></i>
<i style="left:48px;top:138px;width:3px;height:1px;background:#555555;"></i>
<i style="left:48px;top:139px;width:1px;height:73px;background:#555555;"></i>
<i style="left:49px;top:139px;width:2px;height:73px;background:#000;"></i>
<i style="left:43px;top:181px;width:15px;height:1px;background:#000000;"></i>
<i style="left:57px;top:170px;width:1px;height:11px;background:#000000;"></i>
<i style="left:43px;top:170px;width:14px;height:1px;background:#f5f5f5;"></i>
<i style="left:43px;top:171px;width:1px;height:10px;background:#f5f5f5;"></i>
<i style="left:44px;top:180px;width:13px;height:1px;background:#8a8a8a;"></i>
<i style="left:56px;top:171px;width:1px;height:9px;background:#8a8a8a;"></i>
<i style="left:44px;top:171px;width:12px;height:1px;background:#d5d5d5;"></i>
<i style="left:44px;top:172px;width:1px;height:8px;background:#d5d5d5;"></i>
<i style="left:45px;top:172px;width:11px;height:8px;background:#c0c0c0;"></i>
<i style="left:45px;top:177px;width:11px;height:1px;background:#f5f5f5;"></i>
<i style="left:55px;top:174px;width:1px;height:3px;background:#f5f5f5;"></i>
<i style="left:45px;top:174px;width:10px;height:1px;background:#555555;"></i>
<i style="left:45px;top:175px;width:1px;height:2px;background:#555555;"></i>
<i style="left:46px;top:175px;width:9px;height:2px;background:#00e4ff;"></i>
<b style="left:66.00px;top:3px;font-size:10.40px;line-height:14px;font-weight:bold;color:#000;transform:scaleX(1.0837)">4</b>
<b style="left:66.00px;top:213px;font-size:10.40px;line-height:14px;font-weight:bold;color:#000;transform:scaleX(1.0837)">4</b>
<i style="left:68px;top:132px;width:4px;height:1px;background:#f5f5f5;"></i>
<i style="left:71px;top:18px;width:1px;height:114px;background:#f5f5f5;"></i>
<i style="left:68px;top:18px;width:3px;height:1px;background:#555555;"></i>
<i style="left:68px;top:19px;width:1px;height:113px;background:#555555;"></i>
<i style="left:69px;top:19px;width:2px;height:113px;background:#000;"></i>
<i style="left:63px;top:80px;width:15px;height:1px;background:#000000;"></i>
<i style="left:77px;top:69px;width:1px;height:11px;background:#000000;"></i>
<i style="left:63px;top:69px;width:14px;height:1px;background:#f5f5f5;"></i>
<i style="left:63px;top:70px;width:1px;height:10px;background:#f5f5f5;"></i>
<i style="left:64px;top:79px;width:13px;height:1px;background:#8a8a8a;"></i>
<i style="left:76px;top:70px;width:1px;height:9px;background:#8a8a8a;"></i>
<i style="left:64px;top:70px;width:12px;height:1px;background:#d5d5d5;"></i>
<i style="left:64px;top:71px;width:1px;height:8px;background:#d5d5d5;"></i>
<i style="left:65px;top:71px;width:11px;height:8px;background:#c0c0c0;"></i>
<i style="left:65px;top:76px;width:11px;height:1px;background:#f5f5f5;"></i>
<i style="left:75px;top:73px;width:1px;height:3px;background:#f5f5f5;"></i>
<i style="left:65px;top:73px;width:10px;height:1px;background:#555555;"></i>
<i style="left:65px;top:74px;width:1px;height:2px;background:#555555;"></i>
<i style="left:66px;top:74px;width:9px;height:2px;background:#000;"></i>
<i style="left:68px;top:212px;width:4px;height:1px;background:#f5f5f5;"></i>
<i style="left:71px;top:138px;width:1px;height:74px;background:#f5f5f5;"></i>
<i style="left:68px;top:138px;width:3px;height:1px;background:#555555;"></i>
<i style="left:68px;top:139px;width:1px;height:73px;background:#555555;"></i>
<i style="left:69px;top:139px;width:2px;height:73px;background:#000;"></i>
<i style="left:63px;top:181px;width:15px;height:1px;background:#000000;"></i>
<i style="left:77px;top:170px;width:1px;height:11px;background:#000000;"></i>
<i style="left:63px;top:170px;width:14px;height:1px;background:#f5f5f5;"></i>
<i style="left:63px;top:171px;width:1px;height:10px;background:#f5f5f5;"></i>
<i style="left:64px;top:180px;width:13px;height:1px;background:#8a8a8a;"></i>
<i style="left:76px;top:171px;width:1px;height:9px;background:#8a8a8a;"></i>
<i style="left:64px;top:171px;width:12px;height:1px;background:#d5d5d5;"></i>
<i style="left:64px;top:172px;width:1px;height:8px;background:#d5d5d5;"></i>
<i style="left:65px;top:172px;width:11px;height:8px;background:#c0c0c0;"></i>
<i style="left:65px;top:177px;width:11px;height:1px;background:#f5f5f5;"></i>
<i style="left:75px;top:174px;width:1px;height:3px;background:#f5f5f5;"></i>
<i style="left:65px;top:174px;width:10px;height:1px;background:#555555;"></i>
<i style="left:65px;top:175px;width:1px;height:2px;background:#555555;"></i>
<i style="left:66px;top:175px;width:9px;height:2px;background:#00e4ff;"></i>
<b style="left:86.00px;top:3px;font-size:10.40px;line-height:14px;font-weight:bold;color:#000;transform:scaleX(1.0837)">5</b>
<b style="left:86.00px;top:213px;font-size:10.40px;line-height:14px;font-weight:bold;color:#000;transform:scaleX(1.0837)">5</b>
<i style="left:88px;top:132px;width:4px;height:1px;background:#f5f5f5;"></i>
<i style="left:91px;top:18px;width:1px;height:114px;background:#f5f5f5;"></i>
<i style="left:88px;top:18px;width:3px;height:1px;background:#555555;"></i>
<i style="left:88px;top:19px;width:1px;height:113px;background:#555555;"></i>
<i style="left:89px;top:19px;width:2px;height:113px;background:#000;"></i>
<i style="left:83px;top:80px;width:15px;height:1px;background:#000000;"></i>
<i style="left:97px;top:69px;width:1px;height:11px;background:#000000;"></i>
<i style="left:83px;top:69px;width:14px;height:1px;background:#f5f5f5;"></i>
<i style="left:83px;top:70px;width:1px;height:10px;background:#f5f5f5;"></i>
<i style="left:84px;top:79px;width:13px;height:1px;background:#8a8a8a;"></i>
<i style="left:96px;top:70px;width:1px;height:9px;background:#8a8a8a;"></i>
<i style="left:84px;top:70px;width:12px;height:1px;background:#d5d5d5;"></i>
<i style="left:84px;top:71px;width:1px;height:8px;background:#d5d5d5;"></i>
<i style="left:85px;top:71px;width:11px;height:8px;background:#c0c0c0;"></i>
<i style="left:85px;top:76px;width:11px;height:1px;background:#f5f5f5;"></i>
<i style="left:95px;top:73px;width:1px;height:3px;background:#f5f5f5;"></i>
<i style="left:85px;top:73px;width:10px;height:1px;background:#555555;"></i>
<i style="left:85px;top:74px;width:1px;height:2px;background:#555555;"></i>
<i style="left:86px;top:74px;width:9px;height:2px;background:#000;"></i>
<i style="left:88px;top:212px;width:4px;height:1px;background:#f5f5f5;"></i>
<i style="left:91px;top:138px;width:1px;height:74px;background:#f5f5f5;"></i>
<i style="left:88px;top:138px;width:3px;height:1px;background:#555555;"></i>
<i style="left:88px;top:139px;width:1px;height:73px;background:#555555;"></i>
<i style="left:89px;top:139px;width:2px;height:73px;background:#000;"></i>
<i style="left:83px;top:181px;width:15px;height:1px;background:#000000;"></i>
<i style="left:97px;top:170px;width:1px;height:11px;background:#000000;"></i>
<i style="left:83px;top:170px;width:14px;height:1px;background:#f5f5f5;"></i>
<i style="left:83px;top:171px;width:1px;height:10px;background:#f5f5f5;"></i>
<i style="left:84px;top:180px;width:13px;height:1px;background:#8a8a8a;"></i>
<i style="left:96px;top:171px;width:1px;height:9px;background:#8a8a8a;"></i>
<i style="left:84px;top:171px;width:12px;height:1px;background:#d5d5d5;"></i>
<i style="left:84px;top:172px;width:1px;height:8px;background:#d5d5d5;"></i>
<i style="left:85px;top:172px;width:11px;height:8px;background:#c0c0c0;"></i>
<i style="left:85px;top:177px;width:11px;height:1px;background:#f5f5f5;"></i>
<i style="left:95px;top:174px;width:1px;height:3px;background:#f5f5f5;"></i>
<i style="left:85px;top:174px;width:10px;height:1px;background:#555555;"></i>
<i style="left:85px;top:175px;width:1px;height:2px;background:#555555;"></i>
<i style="left:86px;top:175px;width:9px;height:2px;background:#00e4ff;"></i>
<b style="left:106.00px;top:3px;font-size:10.40px;line-height:14px;font-weight:bold;color:#000;transform:scaleX(1.0837)">6</b>
<b style="left:106.00px;top:213px;font-size:10.40px;line-height:14px;font-weight:bold;color:#000;transform:scaleX(1.0837)">6</b>
<i style="left:108px;top:132px;width:4px;height:1px;background:#f5f5f5;"></i>
<i style="left:111px;top:18px;width:1px;height:114px;background:#f5f5f5;"></i>
<i style="left:108px;top:18px;width:3px;height:1px;background:#555555;"></i>
<i style="left:108px;top:19px;width:1px;height:113px;background:#555555;"></i>
<i style="left:109px;top:19px;width:2px;height:113px;background:#000;"></i>
<i style="left:103px;top:80px;width:15px;height:1px;background:#000000;"></i>
<i style="left:117px;top:69px;width:1px;height:11px;background:#000000;"></i>
<i style="left:103px;top:69px;width:14px;height:1px;background:#f5f5f5;"></i>
<i style="left:103px;top:70px;width:1px;height:10px;background:#f5f5f5;"></i>
<i style="left:104px;top:79px;width:13px;height:1px;background:#8a8a8a;"></i>
<i style="left:116px;top:70px;width:1px;height:9px;background:#8a8a8a;"></i>
<i style="left:104px;top:70px;width:12px;height:1px;background:#d5d5d5;"></i>
<i style="left:104px;top:71px;width:1px;height:8px;background:#d5d5d5;"></i>
<i style="left:105px;top:71px;width:11px;height:8px;background:#c0c0c0;"></i>
<i style="left:105px;top:76px;width:11px;height:1px;background:#f5f5f5;"></i>
<i style="left:115px;top:73px;width:1px;height:3px;background:#f5f5f5;"></i>
<i style="left:105px;top:73px;width:10px;height:1px;background:#555555;"></i>
<i style="left:105px;top:74px;width:1px;height:2px;background:#555555;"></i>
<i style="left:106px;top:74px;width:9px;height:2px;background:#000;"></i>
<i style="left:108px;top:212px;width:4px;height:1px;background:#f5f5f5;"></i>
<i style="left:111px;top:138px;width:1px;height:74px;background:#f5f5f5;"></i>
<i style="left:108px;top:138px;width:3px;height:1px;background:#555555;"></i>
<i style="left:108px;top:139px;width:1px;height:73px;background:#555555;"></i>
<i style="left:109px;top:139px;width:2px;height:73px;background:#000;"></i>
<i style="left:103px;top:181px;width:15px;height:1px;background:#000000;"></i>
<i style="left:117px;top:170px;width:1px;height:11px;background:#000000;"></i>
<i style="left:103px;top:170px;width:14px;height:1px;background:#f5f5f5;"></i>
<i style="left:103px;top:171px;width:1px;height:10px;background:#f5f5f5;"></i>
<i style="left:104px;top:180px;width:13px;height:1px;background:#8a8a8a;"></i>
<i style="left:116px;top:171px;width:1px;height:9px;background:#8a8a8a;"></i>
<i style="left:104px;top:171px;width:12px;height:1px;background:#d5d5d5;"></i>
<i style="left:104px;top:172px;width:1px;height:8px;background:#d5d5d5;"></i>
<i style="left:105px;top:172px;width:11px;height:8px;background:#c0c0c0;"></i>
<i style="left:105px;top:177px;width:11px;height:1px;background:#f5f5f5;"></i>
<i style="left:115px;top:174px;width:1px;height:3px;background:#f5f5f5;"></i>
<i style="left:105px;top:174px;width:10px;height:1px;background:#555555;"></i>
<i style="left:105px;top:175px;width:1px;height:2px;background:#555555;"></i>
<i style="left:106px;top:175px;width:9px;height:2px;background:#00e4ff;"></i>
<b style="left:126.00px;top:3px;font-size:10.40px;line-height:14px;font-weight:bold;color:#000;transform:scaleX(1.0837)">7</b>
<b style="left:126.00px;top:213px;font-size:10.40px;line-height:14px;font-weight:bold;color:#000;transform:scaleX(1.0837)">7</b>
<i style="left:128px;top:132px;width:4px;height:1px;background:#f5f5f5;"></i>
<i style="left:131px;top:18px;width:1px;height:114px;background:#f5f5f5;"></i>
<i style="left:128px;top:18px;width:3px;height:1px;background:#555555;"></i>
<i style="left:128px;top:19px;width:1px;height:113px;background:#555555;"></i>
<i style="left:129px;top:19px;width:2px;height:113px;background:#000;"></i>
<i style="left:123px;top:80px;width:15px;height:1px;background:#000000;"></i>
<i style="left:137px;top:69px;width:1px;height:11px;background:#000000;"></i>
<i style="left:123px;top:69px;width:14px;height:1px;background:#f5f5f5;"></i>
<i style="left:123px;top:70px;width:1px;height:10px;background:#f5f5f5;"></i>
<i style="left:124px;top:79px;width:13px;height:1px;background:#8a8a8a;"></i>
<i style="left:136px;top:70px;width:1px;height:9px;background:#8a8a8a;"></i>
<i style="left:124px;top:70px;width:12px;height:1px;background:#d5d5d5;"></i>
<i style="left:124px;top:71px;width:1px;height:8px;background:#d5d5d5;"></i>
<i style="left:125px;top:71px;width:11px;height:8px;background:#c0c0c0;"></i>
<i style="left:125px;top:76px;width:11px;height:1px;background:#f5f5f5;"></i>
<i style="left:135px;top:73px;width:1px;height:3px;background:#f5f5f5;"></i>
<i style="left:125px;top:73px;width:10px;height:1px;background:#555555;"></i>
<i style="left:125px;top:74px;width:1px;height:2px;background:#555555;"></i>
<i style="left:126px;top:74px;width:9px;height:2px;background:#000;"></i>
<i style="left:128px;top:212px;width:4px;height:1px;background:#f5f5f5;"></i>
<i style="left:131px;top:138px;width:1px;height:74px;background:#f5f5f5;"></i>
<i style="left:128px;top:138px;width:3px;height:1px;background:#555555;"></i>
<i style="left:128px;top:139px;width:1px;height:73px;background:#555555;"></i>
<i style="left:129px;top:139px;width:2px;height:73px;background:#000;"></i>
<i style="left:123px;top:181px;width:15px;height:1px;background:#000000;"></i>
<i style="left:137px;top:170px;width:1px;height:11px;background:#000000;"></i>
<i style="left:123px;top:170px;width:14px;height:1px;background:#f5f5f5;"></i>
<i style="left:123px;top:171px;width:1px;height:10px;background:#f5f5f5;"></i>
<i style="left:124px;top:180px;width:13px;height:1px;background:#8a8a8a;"></i>
<i style="left:136px;top:171px;width:1px;height:9px;background:#8a8a8a;"></i>
<i style="left:124px;top:171px;width:12px;height:1px;background:#d5d5d5;"></i>
<i style="left:124px;top:172px;width:1px;height:8px;background:#d5d5d5;"></i>
<i style="left:125px;top:172px;width:11px;height:8px;background:#c0c0c0;"></i>
<i style="left:125px;top:177px;width:11px;height:1px;background:#f5f5f5;"></i>
<i style="left:135px;top:174px;width:1px;height:3px;background:#f5f5f5;"></i>
<i style="left:125px;top:174px;width:10px;height:1px;background:#555555;"></i>
<i style="left:125px;top:175px;width:1px;height:2px;background:#555555;"></i>
<i style="left:126px;top:175px;width:9px;height:2px;background:#00e4ff;"></i>
<b style="left:146.00px;top:3px;font-size:10.40px;line-height:14px;font-weight:bold;color:#000;transform:scaleX(1.0837)">8</b>
<b style="left:146.00px;top:213px;font-size:10.40px;line-height:14px;font-weight:bold;color:#000;transform:scaleX(1.0837)">8</b>
<i style="left:148px;top:132px;width:4px;height:1px;background:#f5f5f5;"></i>
<i style="left:151px;top:18px;width:1px;height:114px;background:#f5f5f5;"></i>
<i style="left:148px;top:18px;width:3px;height:1px;background:#555555;"></i>
<i style="left:148px;top:19px;width:1px;height:113px;background:#555555;"></i>
<i style="left:149px;top:19px;width:2px;height:113px;background:#000;"></i>
<i style="left:143px;top:80px;width:15px;height:1px;background:#000000;"></i>
<i style="left:157px;top:69px;width:1px;height:11px;background:#000000;"></i>
<i style="left:143px;top:69px;width:14px;height:1px;background:#f5f5f5;"></i>
<i style="left:143px;top:70px;width:1px;height:10px;background:#f5f5f5;"></i>
<i style="left:144px;top:79px;width:13px;height:1px;background:#8a8a8a;"></i>
<i style="left:156px;top:70px;width:1px;height:9px;background:#8a8a8a;"></i>
<i style="left:144px;top:70px;width:12px;height:1px;background:#d5d5d5;"></i>
<i style="left:144px;top:71px;width:1px;height:8px;background:#d5d5d5;"></i>
<i style="left:145px;top:71px;width:11px;height:8px;background:#c0c0c0;"></i>
<i style="left:145px;top:76px;width:11px;height:1px;background:#f5f5f5;"></i>
<i style="left:155px;top:73px;width:1px;height:3px;background:#f5f5f5;"></i>
<i style="left:145px;top:73px;width:10px;height:1px;background:#555555;"></i>
<i style="left:145px;top:74px;width:1px;height:2px;background:#555555;"></i>
<i style="left:146px;top:74px;width:9px;height:2px;background:#000;"></i>
<i style="left:148px;top:212px;width:4px;height:1px;background:#f5f5f5;"></i>
<i style="left:151px;top:138px;width:1px;height:74px;background:#f5f5f5;"></i>
<i style="left:148px;top:138px;width:3px;height:1px;background:#555555;"></i>
<i style="left:148px;top:139px;width:1px;height:73px;background:#555555;"></i>
<i style="left:149px;top:139px;width:2px;height:73px;background:#000;"></i>
<i style="left:143px;top:181px;width:15px;height:1px;background:#000000;"></i>
<i style="left:157px;top:170px;width:1px;height:11px;background:#000000;"></i>
<i style="left:143px;top:170px;width:14px;height:1px;background:#f5f5f5;"></i>
<i style="left:143px;top:171px;width:1px;height:10px;background:#f5f5f5;"></i>
<i style="left:144px;top:180px;width:13px;height:1px;background:#8a8a8a;"></i>
<i style="left:156px;top:171px;width:1px;height:9px;background:#8a8a8a;"></i>
<i style="left:144px;top:171px;width:12px;height:1px;background:#d5d5d5;"></i>
<i style="left:144px;top:172px;width:1px;height:8px;background:#d5d5d5;"></i>
<i style="left:145px;top:172px;width:11px;height:8px;background:#c0c0c0;"></i>
<i style="left:145px;top:177px;width:11px;height:1px;background:#f5f5f5;"></i>
<i style="left:155px;top:174px;width:1px;height:3px;background:#f5f5f5;"></i>
<i style="left:145px;top:174px;width:10px;height:1px;background:#555555;"></i>
<i style="left:145px;top:175px;width:1px;height:2px;background:#555555;"></i>
<i style="left:146px;top:175px;width:9px;height:2px;background:#00e4ff;"></i>
<b style="left:166.00px;top:3px;font-size:10.40px;line-height:14px;font-weight:bold;color:#000;transform:scaleX(1.0837)">9</b>
<b style="left:166.00px;top:213px;font-size:10.40px;line-height:14px;font-weight:bold;color:#000;transform:scaleX(1.0837)">9</b>
<i style="left:168px;top:132px;width:4px;height:1px;background:#f5f5f5;"></i>
<i style="left:171px;top:18px;width:1px;height:114px;background:#f5f5f5;"></i>
<i style="left:168px;top:18px;width:3px;height:1px;background:#555555;"></i>
<i style="left:168px;top:19px;width:1px;height:113px;background:#555555;"></i>
<i style="left:169px;top:19px;width:2px;height:113px;background:#000;"></i>
<i style="left:163px;top:80px;width:15px;height:1px;background:#000000;"></i>
<i style="left:177px;top:69px;width:1px;height:11px;background:#000000;"></i>
<i style="left:163px;top:69px;width:14px;height:1px;background:#f5f5f5;"></i>
<i style="left:163px;top:70px;width:1px;height:10px;background:#f5f5f5;"></i>
<i style="left:164px;top:79px;width:13px;height:1px;background:#8a8a8a;"></i>
<i style="left:176px;top:70px;width:1px;height:9px;background:#8a8a8a;"></i>
<i style="left:164px;top:70px;width:12px;height:1px;background:#d5d5d5;"></i>
<i style="left:164px;top:71px;width:1px;height:8px;background:#d5d5d5;"></i>
<i style="left:165px;top:71px;width:11px;height:8px;background:#c0c0c0;"></i>
<i style="left:165px;top:76px;width:11px;height:1px;background:#f5f5f5;"></i>
<i style="left:175px;top:73px;width:1px;height:3px;background:#f5f5f5;"></i>
<i style="left:165px;top:73px;width:10px;height:1px;background:#555555;"></i>
<i style="left:165px;top:74px;width:1px;height:2px;background:#555555;"></i>
<i style="left:166px;top:74px;width:9px;height:2px;background:#000;"></i>
<i style="left:168px;top:212px;width:4px;height:1px;background:#f5f5f5;"></i>
<i style="left:171px;top:138px;width:1px;height:74px;background:#f5f5f5;"></i>
<i style="left:168px;top:138px;width:3px;height:1px;background:#555555;"></i>
<i style="left:168px;top:139px;width:1px;height:73px;background:#555555;"></i>
<i style="left:169px;top:139px;width:2px;height:73px;background:#000;"></i>
<i style="left:163px;top:181px;width:15px;height:1px;background:#000000;"></i>
<i style="left:177px;top:170px;width:1px;height:11px;background:#000000;"></i>
<i style="left:163px;top:170px;width:14px;height:1px;background:#f5f5f5;"></i>
<i style="left:163px;top:171px;width:1px;height:10px;background:#f5f5f5;"></i>
<i style="left:164px;top:180px;width:13px;height:1px;background:#8a8a8a;"></i>
<i style="left:176px;top:171px;width:1px;height:9px;background:#8a8a8a;"></i>
<i style="left:164px;top:171px;width:12px;height:1px;background:#d5d5d5;"></i>
<i style="left:164px;top:172px;width:1px;height:8px;background:#d5d5d5;"></i>
<i style="left:165px;top:172px;width:11px;height:8px;background:#c0c0c0;"></i>
<i style="left:165px;top:177px;width:11px;height:1px;background:#f5f5f5;"></i>
<i style="left:175px;top:174px;width:1px;height:3px;background:#f5f5f5;"></i>
<i style="left:165px;top:174px;width:10px;height:1px;background:#555555;"></i>
<i style="left:165px;top:175px;width:1px;height:2px;background:#555555;"></i>
<i style="left:166px;top:175px;width:9px;height:2px;background:#00e4ff;"></i>
<b style="left:186.00px;top:3px;font-size:10.40px;line-height:14px;font-weight:bold;color:#000;transform:scaleX(1.0837)">10</b>
<b style="left:186.00px;top:213px;font-size:10.40px;line-height:14px;font-weight:bold;color:#000;transform:scaleX(1.0837)">10</b>
<i style="left:188px;top:132px;width:4px;height:1px;background:#f5f5f5;"></i>
<i style="left:191px;top:18px;width:1px;height:114px;background:#f5f5f5;"></i>
<i style="left:188px;top:18px;width:3px;height:1px;background:#555555;"></i>
<i style="left:188px;top:19px;width:1px;height:113px;background:#555555;"></i>
<i style="left:189px;top:19px;width:2px;height:113px;background:#000;"></i>
<i style="left:183px;top:80px;width:15px;height:1px;background:#000000;"></i>
<i style="left:197px;top:69px;width:1px;height:11px;background:#000000;"></i>
<i style="left:183px;top:69px;width:14px;height:1px;background:#f5f5f5;"></i>
<i style="left:183px;top:70px;width:1px;height:10px;background:#f5f5f5;"></i>
<i style="left:184px;top:79px;width:13px;height:1px;background:#8a8a8a;"></i>
<i style="left:196px;top:70px;width:1px;height:9px;background:#8a8a8a;"></i>
<i style="left:184px;top:70px;width:12px;height:1px;background:#d5d5d5;"></i>
<i style="left:184px;top:71px;width:1px;height:8px;background:#d5d5d5;"></i>
<i style="left:185px;top:71px;width:11px;height:8px;background:#c0c0c0;"></i>
<i style="left:185px;top:76px;width:11px;height:1px;background:#f5f5f5;"></i>
<i style="left:195px;top:73px;width:1px;height:3px;background:#f5f5f5;"></i>
<i style="left:185px;top:73px;width:10px;height:1px;background:#555555;"></i>
<i style="left:185px;top:74px;width:1px;height:2px;background:#555555;"></i>
<i style="left:186px;top:74px;width:9px;height:2px;background:#000;"></i>
<i style="left:188px;top:212px;width:4px;height:1px;background:#f5f5f5;"></i>
<i style="left:191px;top:138px;width:1px;height:74px;background:#f5f5f5;"></i>
<i style="left:188px;top:138px;width:3px;height:1px;background:#555555;"></i>
<i style="left:188px;top:139px;width:1px;height:73px;background:#555555;"></i>
<i style="left:189px;top:139px;width:2px;height:73px;background:#000;"></i>
<i style="left:183px;top:181px;width:15px;height:1px;background:#000000;"></i>
<i style="left:197px;top:170px;width:1px;height:11px;background:#000000;"></i>
<i style="left:183px;top:170px;width:14px;height:1px;background:#f5f5f5;"></i>
<i style="left:183px;top:171px;width:1px;height:10px;background:#f5f5f5;"></i>
<i style="left:184px;top:180px;width:13px;height:1px;background:#8a8a8a;"></i>
<i style="left:196px;top:171px;width:1px;height:9px;background:#8a8a8a;"></i>
<i style="left:184px;top:171px;width:12px;height:1px;background:#d5d5d5;"></i>
<i style="left:184px;top:172px;width:1px;height:8px;background:#d5d5d5;"></i>
<i style="left:185px;top:172px;width:11px;height:8px;background:#c0c0c0;"></i>
<i style="left:185px;top:177px;width:11px;height:1px;background:#f5f5f5;"></i>
<i style="left:195px;top:174px;width:1px;height:3px;background:#f5f5f5;"></i>
<i style="left:185px;top:174px;width:10px;height:1px;background:#555555;"></i>
<i style="left:185px;top:175px;width:1px;height:2px;background:#555555;"></i>
<i style="left:186px;top:175px;width:9px;height:2px;background:#00e4ff;"></i>
<b style="left:206.00px;top:3px;font-size:10.40px;line-height:14px;font-weight:bold;color:#000;transform:scaleX(1.1402)">11</b>
<b style="left:206.00px;top:213px;font-size:10.40px;line-height:14px;font-weight:bold;color:#000;transform:scaleX(1.1402)">11</b>
<i style="left:208px;top:132px;width:4px;height:1px;background:#f5f5f5;"></i>
<i style="left:211px;top:18px;width:1px;height:114px;background:#f5f5f5;"></i>
<i style="left:208px;top:18px;width:3px;height:1px;background:#555555;"></i>
<i style="left:208px;top:19px;width:1px;height:113px;background:#555555;"></i>
<i style="left:209px;top:19px;width:2px;height:113px;background:#000;"></i>
<i style="left:203px;top:80px;width:15px;height:1px;background:#000000;"></i>
<i style="left:217px;top:69px;width:1px;height:11px;background:#000000;"></i>
<i style="left:203px;top:69px;width:14px;height:1px;background:#f5f5f5;"></i>
<i style="left:203px;top:70px;width:1px;height:10px;background:#f5f5f5;"></i>
<i style="left:204px;top:79px;width:13px;height:1px;background:#8a8a8a;"></i>
<i style="left:216px;top:70px;width:1px;height:9px;background:#8a8a8a;"></i>
<i style="left:204px;top:70px;width:12px;height:1px;background:#d5d5d5;"></i>
<i style="left:204px;top:71px;width:1px;height:8px;background:#d5d5d5;"></i>
<i style="left:205px;top:71px;width:11px;height:8px;background:#c0c0c0;"></i>
<i style="left:205px;top:76px;width:11px;height:1px;background:#f5f5f5;"></i>
<i style="left:215px;top:73px;width:1px;height:3px;background:#f5f5f5;"></i>
<i style="left:205px;top:73px;width:10px;height:1px;background:#555555;"></i>
<i style="left:205px;top:74px;width:1px;height:2px;background:#555555;"></i>
<i style="left:206px;top:74px;width:9px;height:2px;background:#000;"></i>
<i style="left:208px;top:212px;width:4px;height:1px;background:#f5f5f5;"></i>
<i style="left:211px;top:138px;width:1px;height:74px;background:#f5f5f5;"></i>
<i style="left:208px;top:138px;width:3px;height:1px;background:#555555;"></i>
<i style="left:208px;top:139px;width:1px;height:73px;background:#555555;"></i>
<i style="left:209px;top:139px;width:2px;height:73px;background:#000;"></i>
<i style="left:203px;top:181px;width:15px;height:1px;background:#000000;"></i>
<i style="left:217px;top:170px;width:1px;height:11px;background:#000000;"></i>
<i style="left:203px;top:170px;width:14px;height:1px;background:#f5f5f5;"></i>
<i style="left:203px;top:171px;width:1px;height:10px;background:#f5f5f5;"></i>
<i style="left:204px;top:180px;width:13px;height:1px;background:#8a8a8a;"></i>
<i style="left:216px;top:171px;width:1px;height:9px;background:#8a8a8a;"></i>
<i style="left:204px;top:171px;width:12px;height:1px;background:#d5d5d5;"></i>
<i style="left:204px;top:172px;width:1px;height:8px;background:#d5d5d5;"></i>
<i style="left:205px;top:172px;width:11px;height:8px;background:#c0c0c0;"></i>
<i style="left:205px;top:177px;width:11px;height:1px;background:#f5f5f5;"></i>
<i style="left:215px;top:174px;width:1px;height:3px;background:#f5f5f5;"></i>
<i style="left:205px;top:174px;width:10px;height:1px;background:#555555;"></i>
<i style="left:205px;top:175px;width:1px;height:2px;background:#555555;"></i>
<i style="left:206px;top:175px;width:9px;height:2px;background:#00e4ff;"></i>
<b style="left:226.00px;top:3px;font-size:10.40px;line-height:14px;font-weight:bold;color:#000;transform:scaleX(1.0837)">12</b>
<b style="left:226.00px;top:213px;font-size:10.40px;line-height:14px;font-weight:bold;color:#000;transform:scaleX(1.0837)">12</b>
<i style="left:228px;top:132px;width:4px;height:1px;background:#f5f5f5;"></i>
<i style="left:231px;top:18px;width:1px;height:114px;background:#f5f5f5;"></i>
<i style="left:228px;top:18px;width:3px;height:1px;background:#555555;"></i>
<i style="left:228px;top:19px;width:1px;height:113px;background:#555555;"></i>
<i style="left:229px;top:19px;width:2px;height:113px;background:#000;"></i>
<i style="left:223px;top:80px;width:15px;height:1px;background:#000000;"></i>
<i style="left:237px;top:69px;width:1px;height:11px;background:#000000;"></i>
<i style="left:223px;top:69px;width:14px;height:1px;background:#f5f5f5;"></i>
<i style="left:223px;top:70px;width:1px;height:10px;background:#f5f5f5;"></i>
<i style="left:224px;top:79px;width:13px;height:1px;background:#8a8a8a;"></i>
<i style="left:236px;top:70px;width:1px;height:9px;background:#8a8a8a;"></i>
<i style="left:224px;top:70px;width:12px;height:1px;background:#d5d5d5;"></i>
<i style="left:224px;top:71px;width:1px;height:8px;background:#d5d5d5;"></i>
<i style="left:225px;top:71px;width:11px;height:8px;background:#c0c0c0;"></i>
<i style="left:225px;top:76px;width:11px;height:1px;background:#f5f5f5;"></i>
<i style="left:235px;top:73px;width:1px;height:3px;background:#f5f5f5;"></i>
<i style="left:225px;top:73px;width:10px;height:1px;background:#555555;"></i>
<i style="left:225px;top:74px;width:1px;height:2px;background:#555555;"></i>
<i style="left:226px;top:74px;width:9px;height:2px;background:#000;"></i>
<i style="left:228px;top:212px;width:4px;height:1px;background:#f5f5f5;"></i>
<i style="left:231px;top:138px;width:1px;height:74px;background:#f5f5f5;"></i>
<i style="left:228px;top:138px;width:3px;height:1px;background:#555555;"></i>
<i style="left:228px;top:139px;width:1px;height:73px;background:#555555;"></i>
<i style="left:229px;top:139px;width:2px;height:73px;background:#000;"></i>
<i style="left:223px;top:181px;width:15px;height:1px;background:#000000;"></i>
<i style="left:237px;top:170px;width:1px;height:11px;background:#000000;"></i>
<i style="left:223px;top:170px;width:14px;height:1px;background:#f5f5f5;"></i>
<i style="left:223px;top:171px;width:1px;height:10px;background:#f5f5f5;"></i>
<i style="left:224px;top:180px;width:13px;height:1px;background:#8a8a8a;"></i>
<i style="left:236px;top:171px;width:1px;height:9px;background:#8a8a8a;"></i>
<i style="left:224px;top:171px;width:12px;height:1px;background:#d5d5d5;"></i>
<i style="left:224px;top:172px;width:1px;height:8px;background:#d5d5d5;"></i>
<i style="left:225px;top:172px;width:11px;height:8px;background:#c0c0c0;"></i>
<i style="left:225px;top:177px;width:11px;height:1px;background:#f5f5f5;"></i>
<i style="left:235px;top:174px;width:1px;height:3px;background:#f5f5f5;"></i>
<i style="left:225px;top:174px;width:10px;height:1px;background:#555555;"></i>
<i style="left:225px;top:175px;width:1px;height:2px;background:#555555;"></i>
<i style="left:226px;top:175px;width:9px;height:2px;background:#00e4ff;"></i>
<b style="left:246.00px;top:3px;font-size:10.40px;line-height:14px;font-weight:bold;color:#000;transform:scaleX(1.0837)">13</b>
<b style="left:246.00px;top:213px;font-size:10.40px;line-height:14px;font-weight:bold;color:#000;transform:scaleX(1.0837)">13</b>
<i style="left:248px;top:132px;width:4px;height:1px;background:#f5f5f5;"></i>
<i style="left:251px;top:18px;width:1px;height:114px;background:#f5f5f5;"></i>
<i style="left:248px;top:18px;width:3px;height:1px;background:#555555;"></i>
<i style="left:248px;top:19px;width:1px;height:113px;background:#555555;"></i>
<i style="left:249px;top:19px;width:2px;height:113px;background:#000;"></i>
<i style="left:243px;top:80px;width:15px;height:1px;background:#000000;"></i>
<i style="left:257px;top:69px;width:1px;height:11px;background:#000000;"></i>
<i style="left:243px;top:69px;width:14px;height:1px;background:#f5f5f5;"></i>
<i style="left:243px;top:70px;width:1px;height:10px;background:#f5f5f5;"></i>
<i style="left:244px;top:79px;width:13px;height:1px;background:#8a8a8a;"></i>
<i style="left:256px;top:70px;width:1px;height:9px;background:#8a8a8a;"></i>
<i style="left:244px;top:70px;width:12px;height:1px;background:#d5d5d5;"></i>
<i style="left:244px;top:71px;width:1px;height:8px;background:#d5d5d5;"></i>
<i style="left:245px;top:71px;width:11px;height:8px;background:#c0c0c0;"></i>
<i style="left:245px;top:76px;width:11px;height:1px;background:#f5f5f5;"></i>
<i style="left:255px;top:73px;width:1px;height:3px;background:#f5f5f5;"></i>
<i style="left:245px;top:73px;width:10px;height:1px;background:#555555;"></i>
<i style="left:245px;top:74px;width:1px;height:2px;background:#555555;"></i>
<i style="left:246px;top:74px;width:9px;height:2px;background:#000;"></i>
<i style="left:248px;top:212px;width:4px;height:1px;background:#f5f5f5;"></i>
<i style="left:251px;top:138px;width:1px;height:74px;background:#f5f5f5;"></i>
<i style="left:248px;top:138px;width:3px;height:1px;background:#555555;"></i>
<i style="left:248px;top:139px;width:1px;height:73px;background:#555555;"></i>
<i style="left:249px;top:139px;width:2px;height:73px;background:#000;"></i>
<i style="left:243px;top:181px;width:15px;height:1px;background:#000000;"></i>
<i style="left:257px;top:170px;width:1px;height:11px;background:#000000;"></i>
<i style="left:243px;top:170px;width:14px;height:1px;background:#f5f5f5;"></i>
<i style="left:243px;top:171px;width:1px;height:10px;background:#f5f5f5;"></i>
<i style="left:244px;top:180px;width:13px;height:1px;background:#8a8a8a;"></i>
<i style="left:256px;top:171px;width:1px;height:9px;background:#8a8a8a;"></i>
<i style="left:244px;top:171px;width:12px;height:1px;background:#d5d5d5;"></i>
<i style="left:244px;top:172px;width:1px;height:8px;background:#d5d5d5;"></i>
<i style="left:245px;top:172px;width:11px;height:8px;background:#c0c0c0;"></i>
<i style="left:245px;top:177px;width:11px;height:1px;background:#f5f5f5;"></i>
<i style="left:255px;top:174px;width:1px;height:3px;background:#f5f5f5;"></i>
<i style="left:245px;top:174px;width:10px;height:1px;background:#555555;"></i>
<i style="left:245px;top:175px;width:1px;height:2px;background:#555555;"></i>
<i style="left:246px;top:175px;width:9px;height:2px;background:#00e4ff;"></i>
<b style="left:266.00px;top:3px;font-size:10.40px;line-height:14px;font-weight:bold;color:#000;transform:scaleX(1.0837)">14</b>
<b style="left:266.00px;top:213px;font-size:10.40px;line-height:14px;font-weight:bold;color:#000;transform:scaleX(1.0837)">14</b>
<i style="left:268px;top:132px;width:4px;height:1px;background:#f5f5f5;"></i>
<i style="left:271px;top:18px;width:1px;height:114px;background:#f5f5f5;"></i>
<i style="left:268px;top:18px;width:3px;height:1px;background:#555555;"></i>
<i style="left:268px;top:19px;width:1px;height:113px;background:#555555;"></i>
<i style="left:269px;top:19px;width:2px;height:113px;background:#000;"></i>
<i style="left:263px;top:80px;width:15px;height:1px;background:#000000;"></i>
<i style="left:277px;top:69px;width:1px;height:11px;background:#000000;"></i>
<i style="left:263px;top:69px;width:14px;height:1px;background:#f5f5f5;"></i>
<i style="left:263px;top:70px;width:1px;height:10px;background:#f5f5f5;"></i>
<i style="left:264px;top:79px;width:13px;height:1px;background:#8a8a8a;"></i>
<i style="left:276px;top:70px;width:1px;height:9px;background:#8a8a8a;"></i>
<i style="left:264px;top:70px;width:12px;height:1px;background:#d5d5d5;"></i>
<i style="left:264px;top:71px;width:1px;height:8px;background:#d5d5d5;"></i>
<i style="left:265px;top:71px;width:11px;height:8px;background:#c0c0c0;"></i>
<i style="left:265px;top:76px;width:11px;height:1px;background:#f5f5f5;"></i>
<i style="left:275px;top:73px;width:1px;height:3px;background:#f5f5f5;"></i>
<i style="left:265px;top:73px;width:10px;height:1px;background:#555555;"></i>
<i style="left:265px;top:74px;width:1px;height:2px;background:#555555;"></i>
<i style="left:266px;top:74px;width:9px;height:2px;background:#000;"></i>
<i style="left:268px;top:212px;width:4px;height:1px;background:#f5f5f5;"></i>
<i style="left:271px;top:138px;width:1px;height:74px;background:#f5f5f5;"></i>
<i style="left:268px;top:138px;width:3px;height:1px;background:#555555;"></i>
<i style="left:268px;top:139px;width:1px;height:73px;background:#555555;"></i>
<i style="left:269px;top:139px;width:2px;height:73px;background:#000;"></i>
<i style="left:263px;top:181px;width:15px;height:1px;background:#000000;"></i>
<i style="left:277px;top:170px;width:1px;height:11px;background:#000000;"></i>
<i style="left:263px;top:170px;width:14px;height:1px;background:#f5f5f5;"></i>
<i style="left:263px;top:171px;width:1px;height:10px;background:#f5f5f5;"></i>
<i style="left:264px;top:180px;width:13px;height:1px;background:#8a8a8a;"></i>
<i style="left:276px;top:171px;width:1px;height:9px;background:#8a8a8a;"></i>
<i style="left:264px;top:171px;width:12px;height:1px;background:#d5d5d5;"></i>
<i style="left:264px;top:172px;width:1px;height:8px;background:#d5d5d5;"></i>
<i style="left:265px;top:172px;width:11px;height:8px;background:#c0c0c0;"></i>
<i style="left:265px;top:177px;width:11px;height:1px;background:#f5f5f5;"></i>
<i style="left:275px;top:174px;width:1px;height:3px;background:#f5f5f5;"></i>
<i style="left:265px;top:174px;width:10px;height:1px;background:#555555;"></i>
<i style="left:265px;top:175px;width:1px;height:2px;background:#555555;"></i>
<i style="left:266px;top:175px;width:9px;height:2px;background:#00e4ff;"></i>
<b style="left:286.00px;top:3px;font-size:10.40px;line-height:14px;font-weight:bold;color:#000;transform:scaleX(1.0837)">15</b>
<b style="left:286.00px;top:213px;font-size:10.40px;line-height:14px;font-weight:bold;color:#000;transform:scaleX(1.0837)">15</b>
<i style="left:288px;top:132px;width:4px;height:1px;background:#f5f5f5;"></i>
<i style="left:291px;top:18px;width:1px;height:114px;background:#f5f5f5;"></i>
<i style="left:288px;top:18px;width:3px;height:1px;background:#555555;"></i>
<i style="left:288px;top:19px;width:1px;height:113px;background:#555555;"></i>
<i style="left:289px;top:19px;width:2px;height:113px;background:#000;"></i>
<i style="left:283px;top:80px;width:15px;height:1px;background:#000000;"></i>
<i style="left:297px;top:69px;width:1px;height:11px;background:#000000;"></i>
<i style="left:283px;top:69px;width:14px;height:1px;background:#f5f5f5;"></i>
<i style="left:283px;top:70px;width:1px;height:10px;background:#f5f5f5;"></i>
<i style="left:284px;top:79px;width:13px;height:1px;background:#8a8a8a;"></i>
<i style="left:296px;top:70px;width:1px;height:9px;background:#8a8a8a;"></i>
<i style="left:284px;top:70px;width:12px;height:1px;background:#d5d5d5;"></i>
<i style="left:284px;top:71px;width:1px;height:8px;background:#d5d5d5;"></i>
<i style="left:285px;top:71px;width:11px;height:8px;background:#c0c0c0;"></i>
<i style="left:285px;top:76px;width:11px;height:1px;background:#f5f5f5;"></i>
<i style="left:295px;top:73px;width:1px;height:3px;background:#f5f5f5;"></i>
<i style="left:285px;top:73px;width:10px;height:1px;background:#555555;"></i>
<i style="left:285px;top:74px;width:1px;height:2px;background:#555555;"></i>
<i style="left:286px;top:74px;width:9px;height:2px;background:#000;"></i>
<i style="left:288px;top:212px;width:4px;height:1px;background:#f5f5f5;"></i>
<i style="left:291px;top:138px;width:1px;height:74px;background:#f5f5f5;"></i>
<i style="left:288px;top:138px;width:3px;height:1px;background:#555555;"></i>
<i style="left:288px;top:139px;width:1px;height:73px;background:#555555;"></i>
<i style="left:289px;top:139px;width:2px;height:73px;background:#000;"></i>
<i style="left:283px;top:181px;width:15px;height:1px;background:#000000;"></i>
<i style="left:297px;top:170px;width:1px;height:11px;background:#000000;"></i>
<i style="left:283px;top:170px;width:14px;height:1px;background:#f5f5f5;"></i>
<i style="left:283px;top:171px;width:1px;height:10px;background:#f5f5f5;"></i>
<i style="left:284px;top:180px;width:13px;height:1px;background:#8a8a8a;"></i>
<i style="left:296px;top:171px;width:1px;height:9px;background:#8a8a8a;"></i>
<i style="left:284px;top:171px;width:12px;height:1px;background:#d5d5d5;"></i>
<i style="left:284px;top:172px;width:1px;height:8px;background:#d5d5d5;"></i>
<i style="left:285px;top:172px;width:11px;height:8px;background:#c0c0c0;"></i>
<i style="left:285px;top:177px;width:11px;height:1px;background:#f5f5f5;"></i>
<i style="left:295px;top:174px;width:1px;height:3px;background:#f5f5f5;"></i>
<i style="left:285px;top:174px;width:10px;height:1px;background:#555555;"></i>
<i style="left:285px;top:175px;width:1px;height:2px;background:#555555;"></i>
<i style="left:286px;top:175px;width:9px;height:2px;background:#00e4ff;"></i>
<b style="left:306.00px;top:3px;font-size:10.40px;line-height:14px;font-weight:bold;color:#000;transform:scaleX(1.0837)">16</b>
<b style="left:306.00px;top:213px;font-size:10.40px;line-height:14px;font-weight:bold;color:#000;transform:scaleX(1.0837)">16</b>
<i style="left:308px;top:132px;width:4px;height:1px;background:#f5f5f5;"></i>
<i style="left:311px;top:18px;width:1px;height:114px;background:#f5f5f5;"></i>
<i style="left:308px;top:18px;width:3px;height:1px;background:#555555;"></i>
<i style="left:308px;top:19px;width:1px;height:113px;background:#555555;"></i>
<i style="left:309px;top:19px;width:2px;height:113px;background:#000;"></i>
<i style="left:303px;top:80px;width:15px;height:1px;background:#000000;"></i>
<i style="left:317px;top:69px;width:1px;height:11px;background:#000000;"></i>
<i style="left:303px;top:69px;width:14px;height:1px;background:#f5f5f5;"></i>
<i style="left:303px;top:70px;width:1px;height:10px;background:#f5f5f5;"></i>
<i style="left:304px;top:79px;width:13px;height:1px;background:#8a8a8a;"></i>
<i style="left:316px;top:70px;width:1px;height:9px;background:#8a8a8a;"></i>
<i style="left:304px;top:70px;width:12px;height:1px;background:#d5d5d5;"></i>
<i style="left:304px;top:71px;width:1px;height:8px;background:#d5d5d5;"></i>
<i style="left:305px;top:71px;width:11px;height:8px;background:#c0c0c0;"></i>
<i style="left:305px;top:76px;width:11px;height:1px;background:#f5f5f5;"></i>
<i style="left:315px;top:73px;width:1px;height:3px;background:#f5f5f5;"></i>
<i style="left:305px;top:73px;width:10px;height:1px;background:#555555;"></i>
<i style="left:305px;top:74px;width:1px;height:2px;background:#555555;"></i>
<i style="left:306px;top:74px;width:9px;height:2px;background:#000;"></i>
<i style="left:308px;top:212px;width:4px;height:1px;background:#f5f5f5;"></i>
<i style="left:311px;top:138px;width:1px;height:74px;background:#f5f5f5;"></i>
<i style="left:308px;top:138px;width:3px;height:1px;background:#555555;"></i>
<i style="left:308px;top:139px;width:1px;height:73px;background:#555555;"></i>
<i style="left:309px;top:139px;width:2px;height:73px;background:#000;"></i>
<i style="left:303px;top:181px;width:15px;height:1px;background:#000000;"></i>
<i style="left:317px;top:170px;width:1px;height:11px;background:#000000;"></i>
<i style="left:303px;top:170px;width:14px;height:1px;background:#f5f5f5;"></i>
<i style="left:303px;top:171px;width:1px;height:10px;background:#f5f5f5;"></i>
<i style="left:304px;top:180px;width:13px;height:1px;background:#8a8a8a;"></i>
<i style="left:316px;top:171px;width:1px;height:9px;background:#8a8a8a;"></i>
<i style="left:304px;top:171px;width:12px;height:1px;background:#d5d5d5;"></i>
<i style="left:304px;top:172px;width:1px;height:8px;background:#d5d5d5;"></i>
<i style="left:305px;top:172px;width:11px;height:8px;background:#c0c0c0;"></i>
<i style="left:305px;top:177px;width:11px;height:1px;background:#f5f5f5;"></i>
<i style="left:315px;top:174px;width:1px;height:3px;background:#f5f5f5;"></i>
<i style="left:305px;top:174px;width:10px;height:1px;background:#555555;"></i>
<i style="left:305px;top:175px;width:1px;height:2px;background:#555555;"></i>
<i style="left:306px;top:175px;width:9px;height:2px;background:#00e4ff;"></i>
<b style="left:326.00px;top:3px;font-size:10.40px;line-height:14px;font-weight:bold;color:#000;transform:scaleX(1.0837)">17</b>
<b style="left:326.00px;top:213px;font-size:10.40px;line-height:14px;font-weight:bold;color:#000;transform:scaleX(1.0837)">17</b>
<i style="left:328px;top:132px;width:4px;height:1px;background:#f5f5f5;"></i>
<i style="left:331px;top:18px;width:1px;height:114px;background:#f5f5f5;"></i>
<i style="left:328px;top:18px;width:3px;height:1px;background:#555555;"></i>
<i style="left:328px;top:19px;width:1px;height:113px;background:#555555;"></i>
<i style="left:329px;top:19px;width:2px;height:113px;background:#000;"></i>
<i style="left:323px;top:80px;width:15px;height:1px;background:#000000;"></i>
<i style="left:337px;top:69px;width:1px;height:11px;background:#000000;"></i>
<i style="left:323px;top:69px;width:14px;height:1px;background:#f5f5f5;"></i>
<i style="left:323px;top:70px;width:1px;height:10px;background:#f5f5f5;"></i>
<i style="left:324px;top:79px;width:13px;height:1px;background:#8a8a8a;"></i>
<i style="left:336px;top:70px;width:1px;height:9px;background:#8a8a8a;"></i>
<i style="left:324px;top:70px;width:12px;height:1px;background:#d5d5d5;"></i>
<i style="left:324px;top:71px;width:1px;height:8px;background:#d5d5d5;"></i>
<i style="left:325px;top:71px;width:11px;height:8px;background:#c0c0c0;"></i>
<i style="left:325px;top:76px;width:11px;height:1px;background:#f5f5f5;"></i>
<i style="left:335px;top:73px;width:1px;height:3px;background:#f5f5f5;"></i>
<i style="left:325px;top:73px;width:10px;height:1px;background:#555555;"></i>
<i style="left:325px;top:74px;width:1px;height:2px;background:#555555;"></i>
<i style="left:326px;top:74px;width:9px;height:2px;background:#000;"></i>
<i style="left:328px;top:212px;width:4px;height:1px;background:#f5f5f5;"></i>
<i style="left:331px;top:138px;width:1px;height:74px;background:#f5f5f5;"></i>
<i style="left:328px;top:138px;width:3px;height:1px;background:#555555;"></i>
<i style="left:328px;top:139px;width:1px;height:73px;background:#555555;"></i>
<i style="left:329px;top:139px;width:2px;height:73px;background:#000;"></i>
<i style="left:323px;top:181px;width:15px;height:1px;background:#000000;"></i>
<i style="left:337px;top:170px;width:1px;height:11px;background:#000000;"></i>
<i style="left:323px;top:170px;width:14px;height:1px;background:#f5f5f5;"></i>
<i style="left:323px;top:171px;width:1px;height:10px;background:#f5f5f5;"></i>
<i style="left:324px;top:180px;width:13px;height:1px;background:#8a8a8a;"></i>
<i style="left:336px;top:171px;width:1px;height:9px;background:#8a8a8a;"></i>
<i style="left:324px;top:171px;width:12px;height:1px;background:#d5d5d5;"></i>
<i style="left:324px;top:172px;width:1px;height:8px;background:#d5d5d5;"></i>
<i style="left:325px;top:172px;width:11px;height:8px;background:#c0c0c0;"></i>
<i style="left:325px;top:177px;width:11px;height:1px;background:#f5f5f5;"></i>
<i style="left:335px;top:174px;width:1px;height:3px;background:#f5f5f5;"></i>
<i style="left:325px;top:174px;width:10px;height:1px;background:#555555;"></i>
<i style="left:325px;top:175px;width:1px;height:2px;background:#555555;"></i>
<i style="left:326px;top:175px;width:9px;height:2px;background:#00e4ff;"></i>
<b style="left:346.00px;top:3px;font-size:10.40px;line-height:14px;font-weight:bold;color:#000;transform:scaleX(1.0837)">18</b>
<b style="left:346.00px;top:213px;font-size:10.40px;line-height:14px;font-weight:bold;color:#000;transform:scaleX(1.0837)">18</b>
<i style="left:348px;top:132px;width:4px;height:1px;background:#f5f5f5;"></i>
<i style="left:351px;top:18px;width:1px;height:114px;background:#f5f5f5;"></i>
<i style="left:348px;top:18px;width:3px;height:1px;background:#555555;"></i>
<i style="left:348px;top:19px;width:1px;height:113px;background:#555555;"></i>
<i style="left:349px;top:19px;width:2px;height:113px;background:#000;"></i>
<i style="left:343px;top:80px;width:15px;height:1px;background:#000000;"></i>
<i style="left:357px;top:69px;width:1px;height:11px;background:#000000;"></i>
<i style="left:343px;top:69px;width:14px;height:1px;background:#f5f5f5;"></i>
<i style="left:343px;top:70px;width:1px;height:10px;background:#f5f5f5;"></i>
<i style="left:344px;top:79px;width:13px;height:1px;background:#8a8a8a;"></i>
<i style="left:356px;top:70px;width:1px;height:9px;background:#8a8a8a;"></i>
<i style="left:344px;top:70px;width:12px;height:1px;background:#d5d5d5;"></i>
<i style="left:344px;top:71px;width:1px;height:8px;background:#d5d5d5;"></i>
<i style="left:345px;top:71px;width:11px;height:8px;background:#c0c0c0;"></i>
<i style="left:345px;top:76px;width:11px;height:1px;background:#f5f5f5;"></i>
<i style="left:355px;top:73px;width:1px;height:3px;background:#f5f5f5;"></i>
<i style="left:345px;top:73px;width:10px;height:1px;background:#555555;"></i>
<i style="left:345px;top:74px;width:1px;height:2px;background:#555555;"></i>
<i style="left:346px;top:74px;width:9px;height:2px;background:#000;"></i>
<i style="left:348px;top:212px;width:4px;height:1px;background:#f5f5f5;"></i>
<i style="left:351px;top:138px;width:1px;height:74px;background:#f5f5f5;"></i>
<i style="left:348px;top:138px;width:3px;height:1px;background:#555555;"></i>
<i style="left:348px;top:139px;width:1px;height:73px;background:#555555;"></i>
<i style="left:349px;top:139px;width:2px;height:73px;background:#000;"></i>
<i style="left:343px;top:181px;width:15px;height:1px;background:#000000;"></i>
<i style="left:357px;top:170px;width:1px;height:11px;background:#000000;"></i>
<i style="left:343px;top:170px;width:14px;height:1px;background:#f5f5f5;"></i>
<i style="left:343px;top:171px;width:1px;height:10px;background:#f5f5f5;"></i>
<i style="left:344px;top:180px;width:13px;height:1px;background:#8a8a8a;"></i>
<i style="left:356px;top:171px;width:1px;height:9px;background:#8a8a8a;"></i>
<i style="left:344px;top:171px;width:12px;height:1px;background:#d5d5d5;"></i>
<i style="left:344px;top:172px;width:1px;height:8px;background:#d5d5d5;"></i>
<i style="left:345px;top:172px;width:11px;height:8px;background:#c0c0c0;"></i>
<i style="left:345px;top:177px;width:11px;height:1px;background:#f5f5f5;"></i>
<i style="left:355px;top:174px;width:1px;height:3px;background:#f5f5f5;"></i>
<i style="left:345px;top:174px;width:10px;height:1px;background:#555555;"></i>
<i style="left:345px;top:175px;width:1px;height:2px;background:#555555;"></i>
<i style="left:346px;top:175px;width:9px;height:2px;background:#00e4ff;"></i>
<b style="left:366.00px;top:3px;font-size:10.40px;line-height:14px;font-weight:bold;color:#000;transform:scaleX(1.0837)">19</b>
<b style="left:366.00px;top:213px;font-size:10.40px;line-height:14px;font-weight:bold;color:#000;transform:scaleX(1.0837)">19</b>
<i style="left:368px;top:132px;width:4px;height:1px;background:#f5f5f5;"></i>
<i style="left:371px;top:18px;width:1px;height:114px;background:#f5f5f5;"></i>
<i style="left:368px;top:18px;width:3px;height:1px;background:#555555;"></i>
<i style="left:368px;top:19px;width:1px;height:113px;background:#555555;"></i>
<i style="left:369px;top:19px;width:2px;height:113px;background:#000;"></i>
<i style="left:363px;top:80px;width:15px;height:1px;background:#000000;"></i>
<i style="left:377px;top:69px;width:1px;height:11px;background:#000000;"></i>
<i style="left:363px;top:69px;width:14px;height:1px;background:#f5f5f5;"></i>
<i style="left:363px;top:70px;width:1px;height:10px;background:#f5f5f5;"></i>
<i style="left:364px;top:79px;width:13px;height:1px;background:#8a8a8a;"></i>
<i style="left:376px;top:70px;width:1px;height:9px;background:#8a8a8a;"></i>
<i style="left:364px;top:70px;width:12px;height:1px;background:#d5d5d5;"></i>
<i style="left:364px;top:71px;width:1px;height:8px;background:#d5d5d5;"></i>
<i style="left:365px;top:71px;width:11px;height:8px;background:#c0c0c0;"></i>
<i style="left:365px;top:76px;width:11px;height:1px;background:#f5f5f5;"></i>
<i style="left:375px;top:73px;width:1px;height:3px;background:#f5f5f5;"></i>
<i style="left:365px;top:73px;width:10px;height:1px;background:#555555;"></i>
<i style="left:365px;top:74px;width:1px;height:2px;background:#555555;"></i>
<i style="left:366px;top:74px;width:9px;height:2px;background:#000;"></i>
<i style="left:368px;top:212px;width:4px;height:1px;background:#f5f5f5;"></i>
<i style="left:371px;top:138px;width:1px;height:74px;background:#f5f5f5;"></i>
<i style="left:368px;top:138px;width:3px;height:1px;background:#555555;"></i>
<i style="left:368px;top:139px;width:1px;height:73px;background:#555555;"></i>
<i style="left:369px;top:139px;width:2px;height:73px;background:#000;"></i>
<i style="left:363px;top:181px;width:15px;height:1px;background:#000000;"></i>
<i style="left:377px;top:170px;width:1px;height:11px;background:#000000;"></i>
<i style="left:363px;top:170px;width:14px;height:1px;background:#f5f5f5;"></i>
<i style="left:363px;top:171px;width:1px;height:10px;background:#f5f5f5;"></i>
<i style="left:364px;top:180px;width:13px;height:1px;background:#8a8a8a;"></i>
<i style="left:376px;top:171px;width:1px;height:9px;background:#8a8a8a;"></i>
<i style="left:364px;top:171px;width:12px;height:1px;background:#d5d5d5;"></i>
<i style="left:364px;top:172px;width:1px;height:8px;background:#d5d5d5;"></i>
<i style="left:365px;top:172px;width:11px;height:8px;background:#c0c0c0;"></i>
<i style="left:365px;top:177px;width:11px;height:1px;background:#f5f5f5;"></i>
<i style="left:375px;top:174px;width:1px;height:3px;background:#f5f5f5;"></i>
<i style="left:365px;top:174px;width:10px;height:1px;background:#555555;"></i>
<i style="left:365px;top:175px;width:1px;height:2px;background:#555555;"></i>
<i style="left:366px;top:175px;width:9px;height:2px;background:#00e4ff;"></i>
<b style="left:386.00px;top:3px;font-size:10.40px;line-height:14px;font-weight:bold;color:#000;transform:scaleX(1.0837)">20</b>
<b style="left:386.00px;top:213px;font-size:10.40px;line-height:14px;font-weight:bold;color:#000;transform:scaleX(1.0837)">20</b>
<i style="left:388px;top:132px;width:4px;height:1px;background:#f5f5f5;"></i>
<i style="left:391px;top:18px;width:1px;height:114px;background:#f5f5f5;"></i>
<i style="left:388px;top:18px;width:3px;height:1px;background:#555555;"></i>
<i style="left:388px;top:19px;width:1px;height:113px;background:#555555;"></i>
<i style="left:389px;top:19px;width:2px;height:113px;background:#000;"></i>
<i style="left:383px;top:80px;width:15px;height:1px;background:#000000;"></i>
<i style="left:397px;top:69px;width:1px;height:11px;background:#000000;"></i>
<i style="left:383px;top:69px;width:14px;height:1px;background:#f5f5f5;"></i>
<i style="left:383px;top:70px;width:1px;height:10px;background:#f5f5f5;"></i>
<i style="left:384px;top:79px;width:13px;height:1px;background:#8a8a8a;"></i>
<i style="left:396px;top:70px;width:1px;height:9px;background:#8a8a8a;"></i>
<i style="left:384px;top:70px;width:12px;height:1px;background:#d5d5d5;"></i>
<i style="left:384px;top:71px;width:1px;height:8px;background:#d5d5d5;"></i>
<i style="left:385px;top:71px;width:11px;height:8px;background:#c0c0c0;"></i>
<i style="left:385px;top:76px;width:11px;height:1px;background:#f5f5f5;"></i>
<i style="left:395px;top:73px;width:1px;height:3px;background:#f5f5f5;"></i>
<i style="left:385px;top:73px;width:10px;height:1px;background:#555555;"></i>
<i style="left:385px;top:74px;width:1px;height:2px;background:#555555;"></i>
<i style="left:386px;top:74px;width:9px;height:2px;background:#000;"></i>
<i style="left:388px;top:212px;width:4px;height:1px;background:#f5f5f5;"></i>
<i style="left:391px;top:138px;width:1px;height:74px;background:#f5f5f5;"></i>
<i style="left:388px;top:138px;width:3px;height:1px;background:#555555;"></i>
<i style="left:388px;top:139px;width:1px;height:73px;background:#555555;"></i>
<i style="left:389px;top:139px;width:2px;height:73px;background:#000;"></i>
<i style="left:383px;top:181px;width:15px;height:1px;background:#000000;"></i>
<i style="left:397px;top:170px;width:1px;height:11px;background:#000000;"></i>
<i style="left:383px;top:170px;width:14px;height:1px;background:#f5f5f5;"></i>
<i style="left:383px;top:171px;width:1px;height:10px;background:#f5f5f5;"></i>
<i style="left:384px;top:180px;width:13px;height:1px;background:#8a8a8a;"></i>
<i style="left:396px;top:171px;width:1px;height:9px;background:#8a8a8a;"></i>
<i style="left:384px;top:171px;width:12px;height:1px;background:#d5d5d5;"></i>
<i style="left:384px;top:172px;width:1px;height:8px;background:#d5d5d5;"></i>
<i style="left:385px;top:172px;width:11px;height:8px;background:#c0c0c0;"></i>
<i style="left:385px;top:177px;width:11px;height:1px;background:#f5f5f5;"></i>
<i style="left:395px;top:174px;width:1px;height:3px;background:#f5f5f5;"></i>
<i style="left:385px;top:174px;width:10px;height:1px;background:#555555;"></i>
<i style="left:385px;top:175px;width:1px;height:2px;background:#555555;"></i>
<i style="left:386px;top:175px;width:9px;height:2px;background:#00e4ff;"></i>
<b style="left:406.00px;top:3px;font-size:10.40px;line-height:14px;font-weight:bold;color:#000;transform:scaleX(1.0837)">21</b>
<b style="left:406.00px;top:213px;font-size:10.40px;line-height:14px;font-weight:bold;color:#000;transform:scaleX(1.0837)">21</b>
<i style="left:408px;top:132px;width:4px;height:1px;background:#f5f5f5;"></i>
<i style="left:411px;top:18px;width:1px;height:114px;background:#f5f5f5;"></i>
<i style="left:408px;top:18px;width:3px;height:1px;background:#555555;"></i>
<i style="left:408px;top:19px;width:1px;height:113px;background:#555555;"></i>
<i style="left:409px;top:19px;width:2px;height:113px;background:#000;"></i>
<i style="left:403px;top:80px;width:15px;height:1px;background:#000000;"></i>
<i style="left:417px;top:69px;width:1px;height:11px;background:#000000;"></i>
<i style="left:403px;top:69px;width:14px;height:1px;background:#f5f5f5;"></i>
<i style="left:403px;top:70px;width:1px;height:10px;background:#f5f5f5;"></i>
<i style="left:404px;top:79px;width:13px;height:1px;background:#8a8a8a;"></i>
<i style="left:416px;top:70px;width:1px;height:9px;background:#8a8a8a;"></i>
<i style="left:404px;top:70px;width:12px;height:1px;background:#d5d5d5;"></i>
<i style="left:404px;top:71px;width:1px;height:8px;background:#d5d5d5;"></i>
<i style="left:405px;top:71px;width:11px;height:8px;background:#c0c0c0;"></i>
<i style="left:405px;top:76px;width:11px;height:1px;background:#f5f5f5;"></i>
<i style="left:415px;top:73px;width:1px;height:3px;background:#f5f5f5;"></i>
<i style="left:405px;top:73px;width:10px;height:1px;background:#555555;"></i>
<i style="left:405px;top:74px;width:1px;height:2px;background:#555555;"></i>
<i style="left:406px;top:74px;width:9px;height:2px;background:#000;"></i>
<i style="left:408px;top:212px;width:4px;height:1px;background:#f5f5f5;"></i>
<i style="left:411px;top:138px;width:1px;height:74px;background:#f5f5f5;"></i>
<i style="left:408px;top:138px;width:3px;height:1px;background:#555555;"></i>
<i style="left:408px;top:139px;width:1px;height:73px;background:#555555;"></i>
<i style="left:409px;top:139px;width:2px;height:73px;background:#000;"></i>
<i style="left:403px;top:181px;width:15px;height:1px;background:#000000;"></i>
<i style="left:417px;top:170px;width:1px;height:11px;background:#000000;"></i>
<i style="left:403px;top:170px;width:14px;height:1px;background:#f5f5f5;"></i>
<i style="left:403px;top:171px;width:1px;height:10px;background:#f5f5f5;"></i>
<i style="left:404px;top:180px;width:13px;height:1px;background:#8a8a8a;"></i>
<i style="left:416px;top:171px;width:1px;height:9px;background:#8a8a8a;"></i>
<i style="left:404px;top:171px;width:12px;height:1px;background:#d5d5d5;"></i>
<i style="left:404px;top:172px;width:1px;height:8px;background:#d5d5d5;"></i>
<i style="left:405px;top:172px;width:11px;height:8px;background:#c0c0c0;"></i>
<i style="left:405px;top:177px;width:11px;height:1px;background:#f5f5f5;"></i>
<i style="left:415px;top:174px;width:1px;height:3px;background:#f5f5f5;"></i>
<i style="left:405px;top:174px;width:10px;height:1px;background:#555555;"></i>
<i style="left:405px;top:175px;width:1px;height:2px;background:#555555;"></i>
<i style="left:406px;top:175px;width:9px;height:2px;background:#00e4ff;"></i>
<b style="left:426.00px;top:3px;font-size:10.40px;line-height:14px;font-weight:bold;color:#000;transform:scaleX(1.0837)">22</b>
<b style="left:426.00px;top:213px;font-size:10.40px;line-height:14px;font-weight:bold;color:#000;transform:scaleX(1.0837)">22</b>
<i style="left:428px;top:132px;width:4px;height:1px;background:#f5f5f5;"></i>
<i style="left:431px;top:18px;width:1px;height:114px;background:#f5f5f5;"></i>
<i style="left:428px;top:18px;width:3px;height:1px;background:#555555;"></i>
<i style="left:428px;top:19px;width:1px;height:113px;background:#555555;"></i>
<i style="left:429px;top:19px;width:2px;height:113px;background:#000;"></i>
<i style="left:423px;top:80px;width:15px;height:1px;background:#000000;"></i>
<i style="left:437px;top:69px;width:1px;height:11px;background:#000000;"></i>
<i style="left:423px;top:69px;width:14px;height:1px;background:#f5f5f5;"></i>
<i style="left:423px;top:70px;width:1px;height:10px;background:#f5f5f5;"></i>
<i style="left:424px;top:79px;width:13px;height:1px;background:#8a8a8a;"></i>
<i style="left:436px;top:70px;width:1px;height:9px;background:#8a8a8a;"></i>
<i style="left:424px;top:70px;width:12px;height:1px;background:#d5d5d5;"></i>
<i style="left:424px;top:71px;width:1px;height:8px;background:#d5d5d5;"></i>
<i style="left:425px;top:71px;width:11px;height:8px;background:#c0c0c0;"></i>
<i style="left:425px;top:76px;width:11px;height:1px;background:#f5f5f5;"></i>
<i style="left:435px;top:73px;width:1px;height:3px;background:#f5f5f5;"></i>
<i style="left:425px;top:73px;width:10px;height:1px;background:#555555;"></i>
<i style="left:425px;top:74px;width:1px;height:2px;background:#555555;"></i>
<i style="left:426px;top:74px;width:9px;height:2px;background:#000;"></i>
<i style="left:428px;top:212px;width:4px;height:1px;background:#f5f5f5;"></i>
<i style="left:431px;top:138px;width:1px;height:74px;background:#f5f5f5;"></i>
<i style="left:428px;top:138px;width:3px;height:1px;background:#555555;"></i>
<i style="left:428px;top:139px;width:1px;height:73px;background:#555555;"></i>
<i style="left:429px;top:139px;width:2px;height:73px;background:#000;"></i>
<i style="left:423px;top:181px;width:15px;height:1px;background:#000000;"></i>
<i style="left:437px;top:170px;width:1px;height:11px;background:#000000;"></i>
<i style="left:423px;top:170px;width:14px;height:1px;background:#f5f5f5;"></i>
<i style="left:423px;top:171px;width:1px;height:10px;background:#f5f5f5;"></i>
<i style="left:424px;top:180px;width:13px;height:1px;background:#8a8a8a;"></i>
<i style="left:436px;top:171px;width:1px;height:9px;background:#8a8a8a;"></i>
<i style="left:424px;top:171px;width:12px;height:1px;background:#d5d5d5;"></i>
<i style="left:424px;top:172px;width:1px;height:8px;background:#d5d5d5;"></i>
<i style="left:425px;top:172px;width:11px;height:8px;background:#c0c0c0;"></i>
<i style="left:425px;top:177px;width:11px;height:1px;background:#f5f5f5;"></i>
<i style="left:435px;top:174px;width:1px;height:3px;background:#f5f5f5;"></i>
<i style="left:425px;top:174px;width:10px;height:1px;background:#555555;"></i>
<i style="left:425px;top:175px;width:1px;height:2px;background:#555555;"></i>
<i style="left:426px;top:175px;width:9px;height:2px;background:#00e4ff;"></i>
<b style="left:446.00px;top:3px;font-size:10.40px;line-height:14px;font-weight:bold;color:#000;transform:scaleX(1.0837)">23</b>
<b style="left:446.00px;top:213px;font-size:10.40px;line-height:14px;font-weight:bold;color:#000;transform:scaleX(1.0837)">23</b>
<i style="left:448px;top:132px;width:4px;height:1px;background:#f5f5f5;"></i>
<i style="left:451px;top:18px;width:1px;height:114px;background:#f5f5f5;"></i>
<i style="left:448px;top:18px;width:3px;height:1px;background:#555555;"></i>
<i style="left:448px;top:19px;width:1px;height:113px;background:#555555;"></i>
<i style="left:449px;top:19px;width:2px;height:113px;background:#000;"></i>
<i style="left:443px;top:80px;width:15px;height:1px;background:#000000;"></i>
<i style="left:457px;top:69px;width:1px;height:11px;background:#000000;"></i>
<i style="left:443px;top:69px;width:14px;height:1px;background:#f5f5f5;"></i>
<i style="left:443px;top:70px;width:1px;height:10px;background:#f5f5f5;"></i>
<i style="left:444px;top:79px;width:13px;height:1px;background:#8a8a8a;"></i>
<i style="left:456px;top:70px;width:1px;height:9px;background:#8a8a8a;"></i>
<i style="left:444px;top:70px;width:12px;height:1px;background:#d5d5d5;"></i>
<i style="left:444px;top:71px;width:1px;height:8px;background:#d5d5d5;"></i>
<i style="left:445px;top:71px;width:11px;height:8px;background:#c0c0c0;"></i>
<i style="left:445px;top:76px;width:11px;height:1px;background:#f5f5f5;"></i>
<i style="left:455px;top:73px;width:1px;height:3px;background:#f5f5f5;"></i>
<i style="left:445px;top:73px;width:10px;height:1px;background:#555555;"></i>
<i style="left:445px;top:74px;width:1px;height:2px;background:#555555;"></i>
<i style="left:446px;top:74px;width:9px;height:2px;background:#000;"></i>
<i style="left:448px;top:212px;width:4px;height:1px;background:#f5f5f5;"></i>
<i style="left:451px;top:138px;width:1px;height:74px;background:#f5f5f5;"></i>
<i style="left:448px;top:138px;width:3px;height:1px;background:#555555;"></i>
<i style="left:448px;top:139px;width:1px;height:73px;background:#555555;"></i>
<i style="left:449px;top:139px;width:2px;height:73px;background:#000;"></i>
<i style="left:443px;top:181px;width:15px;height:1px;background:#000000;"></i>
<i style="left:457px;top:170px;width:1px;height:11px;background:#000000;"></i>
<i style="left:443px;top:170px;width:14px;height:1px;background:#f5f5f5;"></i>
<i style="left:443px;top:171px;width:1px;height:10px;background:#f5f5f5;"></i>
<i style="left:444px;top:180px;width:13px;height:1px;background:#8a8a8a;"></i>
<i style="left:456px;top:171px;width:1px;height:9px;background:#8a8a8a;"></i>
<i style="left:444px;top:171px;width:12px;height:1px;background:#d5d5d5;"></i>
<i style="left:444px;top:172px;width:1px;height:8px;background:#d5d5d5;"></i>
<i style="left:445px;top:172px;width:11px;height:8px;background:#c0c0c0;"></i>
<i style="left:445px;top:177px;width:11px;height:1px;background:#f5f5f5;"></i>
<i style="left:455px;top:174px;width:1px;height:3px;background:#f5f5f5;"></i>
<i style="left:445px;top:174px;width:10px;height:1px;background:#555555;"></i>
<i style="left:445px;top:175px;width:1px;height:2px;background:#555555;"></i>
<i style="left:446px;top:175px;width:9px;height:2px;background:#00e4ff;"></i>
<b style="left:466.00px;top:3px;font-size:10.40px;line-height:14px;font-weight:bold;color:#000;transform:scaleX(1.0837)">24</b>
<b style="left:466.00px;top:213px;font-size:10.40px;line-height:14px;font-weight:bold;color:#000;transform:scaleX(1.0837)">24</b>
<i style="left:468px;top:132px;width:4px;height:1px;background:#f5f5f5;"></i>
<i style="left:471px;top:18px;width:1px;height:114px;background:#f5f5f5;"></i>
<i style="left:468px;top:18px;width:3px;height:1px;background:#555555;"></i>
<i style="left:468px;top:19px;width:1px;height:113px;background:#555555;"></i>
<i style="left:469px;top:19px;width:2px;height:113px;background:#000;"></i>
<i style="left:463px;top:80px;width:15px;height:1px;background:#000000;"></i>
<i style="left:477px;top:69px;width:1px;height:11px;background:#000000;"></i>
<i style="left:463px;top:69px;width:14px;height:1px;background:#f5f5f5;"></i>
<i style="left:463px;top:70px;width:1px;height:10px;background:#f5f5f5;"></i>
<i style="left:464px;top:79px;width:13px;height:1px;background:#8a8a8a;"></i>
<i style="left:476px;top:70px;width:1px;height:9px;background:#8a8a8a;"></i>
<i style="left:464px;top:70px;width:12px;height:1px;background:#d5d5d5;"></i>
<i style="left:464px;top:71px;width:1px;height:8px;background:#d5d5d5;"></i>
<i style="left:465px;top:71px;width:11px;height:8px;background:#c0c0c0;"></i>
<i style="left:465px;top:76px;width:11px;height:1px;background:#f5f5f5;"></i>
<i style="left:475px;top:73px;width:1px;height:3px;background:#f5f5f5;"></i>
<i style="left:465px;top:73px;width:10px;height:1px;background:#555555;"></i>
<i style="left:465px;top:74px;width:1px;height:2px;background:#555555;"></i>
<i style="left:466px;top:74px;width:9px;height:2px;background:#000;"></i>
<i style="left:468px;top:212px;width:4px;height:1px;background:#f5f5f5;"></i>
<i style="left:471px;top:138px;width:1px;height:74px;background:#f5f5f5;"></i>
<i style="left:468px;top:138px;width:3px;height:1px;background:#555555;"></i>
<i style="left:468px;top:139px;width:1px;height:73px;background:#555555;"></i>
<i style="left:469px;top:139px;width:2px;height:73px;background:#000;"></i>
<i style="left:463px;top:181px;width:15px;height:1px;background:#000000;"></i>
<i style="left:477px;top:170px;width:1px;height:11px;background:#000000;"></i>
<i style="left:463px;top:170px;width:14px;height:1px;background:#f5f5f5;"></i>
<i style="left:463px;top:171px;width:1px;height:10px;background:#f5f5f5;"></i>
<i style="left:464px;top:180px;width:13px;height:1px;background:#8a8a8a;"></i>
<i style="left:476px;top:171px;width:1px;height:9px;background:#8a8a8a;"></i>
<i style="left:464px;top:171px;width:12px;height:1px;background:#d5d5d5;"></i>
<i style="left:464px;top:172px;width:1px;height:8px;background:#d5d5d5;"></i>
<i style="left:465px;top:172px;width:11px;height:8px;background:#c0c0c0;"></i>
<i style="left:465px;top:177px;width:11px;height:1px;background:#f5f5f5;"></i>
<i style="left:475px;top:174px;width:1px;height:3px;background:#f5f5f5;"></i>
<i style="left:465px;top:174px;width:10px;height:1px;background:#555555;"></i>
<i style="left:465px;top:175px;width:1px;height:2px;background:#555555;"></i>
<i style="left:466px;top:175px;width:9px;height:2px;background:#00e4ff;"></i>
<b style="left:486.00px;top:3px;font-size:10.40px;line-height:14px;font-weight:bold;color:#000;transform:scaleX(1.0837)">25</b>
<b style="left:486.00px;top:213px;font-size:10.40px;line-height:14px;font-weight:bold;color:#000;transform:scaleX(1.0837)">25</b>
<i style="left:488px;top:132px;width:4px;height:1px;background:#f5f5f5;"></i>
<i style="left:491px;top:18px;width:1px;height:114px;background:#f5f5f5;"></i>
<i style="left:488px;top:18px;width:3px;height:1px;background:#555555;"></i>
<i style="left:488px;top:19px;width:1px;height:113px;background:#555555;"></i>
<i style="left:489px;top:19px;width:2px;height:113px;background:#000;"></i>
<i style="left:483px;top:80px;width:15px;height:1px;background:#000000;"></i>
<i style="left:497px;top:69px;width:1px;height:11px;background:#000000;"></i>
<i style="left:483px;top:69px;width:14px;height:1px;background:#f5f5f5;"></i>
<i style="left:483px;top:70px;width:1px;height:10px;background:#f5f5f5;"></i>
<i style="left:484px;top:79px;width:13px;height:1px;background:#8a8a8a;"></i>
<i style="left:496px;top:70px;width:1px;height:9px;background:#8a8a8a;"></i>
<i style="left:484px;top:70px;width:12px;height:1px;background:#d5d5d5;"></i>
<i style="left:484px;top:71px;width:1px;height:8px;background:#d5d5d5;"></i>
<i style="left:485px;top:71px;width:11px;height:8px;background:#c0c0c0;"></i>
<i style="left:485px;top:76px;width:11px;height:1px;background:#f5f5f5;"></i>
<i style="left:495px;top:73px;width:1px;height:3px;background:#f5f5f5;"></i>
<i style="left:485px;top:73px;width:10px;height:1px;background:#555555;"></i>
<i style="left:485px;top:74px;width:1px;height:2px;background:#555555;"></i>
<i style="left:486px;top:74px;width:9px;height:2px;background:#000;"></i>
<i style="left:488px;top:212px;width:4px;height:1px;background:#f5f5f5;"></i>
<i style="left:491px;top:138px;width:1px;height:74px;background:#f5f5f5;"></i>
<i style="left:488px;top:138px;width:3px;height:1px;background:#555555;"></i>
<i style="left:488px;top:139px;width:1px;height:73px;background:#555555;"></i>
<i style="left:489px;top:139px;width:2px;height:73px;background:#000;"></i>
<i style="left:483px;top:181px;width:15px;height:1px;background:#000000;"></i>
<i style="left:497px;top:170px;width:1px;height:11px;background:#000000;"></i>
<i style="left:483px;top:170px;width:14px;height:1px;background:#f5f5f5;"></i>
<i style="left:483px;top:171px;width:1px;height:10px;background:#f5f5f5;"></i>
<i style="left:484px;top:180px;width:13px;height:1px;background:#8a8a8a;"></i>
<i style="left:496px;top:171px;width:1px;height:9px;background:#8a8a8a;"></i>
<i style="left:484px;top:171px;width:12px;height:1px;background:#d5d5d5;"></i>
<i style="left:484px;top:172px;width:1px;height:8px;background:#d5d5d5;"></i>
<i style="left:485px;top:172px;width:11px;height:8px;background:#c0c0c0;"></i>
<i style="left:485px;top:177px;width:11px;height:1px;background:#f5f5f5;"></i>
<i style="left:495px;top:174px;width:1px;height:3px;background:#f5f5f5;"></i>
<i style="left:485px;top:174px;width:10px;height:1px;background:#555555;"></i>
<i style="left:485px;top:175px;width:1px;height:2px;background:#555555;"></i>
<i style="left:486px;top:175px;width:9px;height:2px;background:#00e4ff;"></i>
<b style="left:506.00px;top:3px;font-size:10.40px;line-height:14px;font-weight:bold;color:#000;transform:scaleX(1.0837)">26</b>
<b style="left:506.00px;top:213px;font-size:10.40px;line-height:14px;font-weight:bold;color:#000;transform:scaleX(1.0837)">26</b>
<i style="left:508px;top:132px;width:4px;height:1px;background:#f5f5f5;"></i>
<i style="left:511px;top:18px;width:1px;height:114px;background:#f5f5f5;"></i>
<i style="left:508px;top:18px;width:3px;height:1px;background:#555555;"></i>
<i style="left:508px;top:19px;width:1px;height:113px;background:#555555;"></i>
<i style="left:509px;top:19px;width:2px;height:113px;background:#000;"></i>
<i style="left:503px;top:80px;width:15px;height:1px;background:#000000;"></i>
<i style="left:517px;top:69px;width:1px;height:11px;background:#000000;"></i>
<i style="left:503px;top:69px;width:14px;height:1px;background:#f5f5f5;"></i>
<i style="left:503px;top:70px;width:1px;height:10px;background:#f5f5f5;"></i>
<i style="left:504px;top:79px;width:13px;height:1px;background:#8a8a8a;"></i>
<i style="left:516px;top:70px;width:1px;height:9px;background:#8a8a8a;"></i>
<i style="left:504px;top:70px;width:12px;height:1px;background:#d5d5d5;"></i>
<i style="left:504px;top:71px;width:1px;height:8px;background:#d5d5d5;"></i>
<i style="left:505px;top:71px;width:11px;height:8px;background:#c0c0c0;"></i>
<i style="left:505px;top:76px;width:11px;height:1px;background:#f5f5f5;"></i>
<i style="left:515px;top:73px;width:1px;height:3px;background:#f5f5f5;"></i>
<i style="left:505px;top:73px;width:10px;height:1px;background:#555555;"></i>
<i style="left:505px;top:74px;width:1px;height:2px;background:#555555;"></i>
<i style="left:506px;top:74px;width:9px;height:2px;background:#000;"></i>
<i style="left:508px;top:212px;width:4px;height:1px;background:#f5f5f5;"></i>
<i style="left:511px;top:138px;width:1px;height:74px;background:#f5f5f5;"></i>
<i style="left:508px;top:138px;width:3px;height:1px;background:#555555;"></i>
<i style="left:508px;top:139px;width:1px;height:73px;background:#555555;"></i>
<i style="left:509px;top:139px;width:2px;height:73px;background:#000;"></i>
<i style="left:503px;top:181px;width:15px;height:1px;background:#000000;"></i>
<i style="left:517px;top:170px;width:1px;height:11px;background:#000000;"></i>
<i style="left:503px;top:170px;width:14px;height:1px;background:#f5f5f5;"></i>
<i style="left:503px;top:171px;width:1px;height:10px;background:#f5f5f5;"></i>
<i style="left:504px;top:180px;width:13px;height:1px;background:#8a8a8a;"></i>
<i style="left:516px;top:171px;width:1px;height:9px;background:#8a8a8a;"></i>
<i style="left:504px;top:171px;width:12px;height:1px;background:#d5d5d5;"></i>
<i style="left:504px;top:172px;width:1px;height:8px;background:#d5d5d5;"></i>
<i style="left:505px;top:172px;width:11px;height:8px;background:#c0c0c0;"></i>
<i style="left:505px;top:177px;width:11px;height:1px;background:#f5f5f5;"></i>
<i style="left:515px;top:174px;width:1px;height:3px;background:#f5f5f5;"></i>
<i style="left:505px;top:174px;width:10px;height:1px;background:#555555;"></i>
<i style="left:505px;top:175px;width:1px;height:2px;background:#555555;"></i>
<i style="left:506px;top:175px;width:9px;height:2px;background:#00e4ff;"></i>
<b style="left:526.00px;top:3px;font-size:10.40px;line-height:14px;font-weight:bold;color:#000;transform:scaleX(1.0837)">27</b>
<b style="left:526.00px;top:213px;font-size:10.40px;line-height:14px;font-weight:bold;color:#000;transform:scaleX(1.0837)">27</b>
<i style="left:528px;top:132px;width:4px;height:1px;background:#f5f5f5;"></i>
<i style="left:531px;top:18px;width:1px;height:114px;background:#f5f5f5;"></i>
<i style="left:528px;top:18px;width:3px;height:1px;background:#555555;"></i>
<i style="left:528px;top:19px;width:1px;height:113px;background:#555555;"></i>
<i style="left:529px;top:19px;width:2px;height:113px;background:#000;"></i>
<i style="left:523px;top:80px;width:15px;height:1px;background:#000000;"></i>
<i style="left:537px;top:69px;width:1px;height:11px;background:#000000;"></i>
<i style="left:523px;top:69px;width:14px;height:1px;background:#f5f5f5;"></i>
<i style="left:523px;top:70px;width:1px;height:10px;background:#f5f5f5;"></i>
<i style="left:524px;top:79px;width:13px;height:1px;background:#8a8a8a;"></i>
<i style="left:536px;top:70px;width:1px;height:9px;background:#8a8a8a;"></i>
<i style="left:524px;top:70px;width:12px;height:1px;background:#d5d5d5;"></i>
<i style="left:524px;top:71px;width:1px;height:8px;background:#d5d5d5;"></i>
<i style="left:525px;top:71px;width:11px;height:8px;background:#c0c0c0;"></i>
<i style="left:525px;top:76px;width:11px;height:1px;background:#f5f5f5;"></i>
<i style="left:535px;top:73px;width:1px;height:3px;background:#f5f5f5;"></i>
<i style="left:525px;top:73px;width:10px;height:1px;background:#555555;"></i>
<i style="left:525px;top:74px;width:1px;height:2px;background:#555555;"></i>
<i style="left:526px;top:74px;width:9px;height:2px;background:#000;"></i>
<i style="left:528px;top:212px;width:4px;height:1px;background:#f5f5f5;"></i>
<i style="left:531px;top:138px;width:1px;height:74px;background:#f5f5f5;"></i>
<i style="left:528px;top:138px;width:3px;height:1px;background:#555555;"></i>
<i style="left:528px;top:139px;width:1px;height:73px;background:#555555;"></i>
<i style="left:529px;top:139px;width:2px;height:73px;background:#000;"></i>
<i style="left:523px;top:181px;width:15px;height:1px;background:#000000;"></i>
<i style="left:537px;top:170px;width:1px;height:11px;background:#000000;"></i>
<i style="left:523px;top:170px;width:14px;height:1px;background:#f5f5f5;"></i>
<i style="left:523px;top:171px;width:1px;height:10px;background:#f5f5f5;"></i>
<i style="left:524px;top:180px;width:13px;height:1px;background:#8a8a8a;"></i>
<i style="left:536px;top:171px;width:1px;height:9px;background:#8a8a8a;"></i>
<i style="left:524px;top:171px;width:12px;height:1px;background:#d5d5d5;"></i>
<i style="left:524px;top:172px;width:1px;height:8px;background:#d5d5d5;"></i>
<i style="left:525px;top:172px;width:11px;height:8px;background:#c0c0c0;"></i>
<i style="left:525px;top:177px;width:11px;height:1px;background:#f5f5f5;"></i>
<i style="left:535px;top:174px;width:1px;height:3px;background:#f5f5f5;"></i>
<i style="left:525px;top:174px;width:10px;height:1px;background:#555555;"></i>
<i style="left:525px;top:175px;width:1px;height:2px;background:#555555;"></i>
<i style="left:526px;top:175px;width:9px;height:2px;background:#00e4ff;"></i>
<b style="left:546.00px;top:3px;font-size:10.40px;line-height:14px;font-weight:bold;color:#000;transform:scaleX(1.0837)">28</b>
<b style="left:546.00px;top:213px;font-size:10.40px;line-height:14px;font-weight:bold;color:#000;transform:scaleX(1.0837)">28</b>
<i style="left:548px;top:132px;width:4px;height:1px;background:#f5f5f5;"></i>
<i style="left:551px;top:18px;width:1px;height:114px;background:#f5f5f5;"></i>
<i style="left:548px;top:18px;width:3px;height:1px;background:#555555;"></i>
<i style="left:548px;top:19px;width:1px;height:113px;background:#555555;"></i>
<i style="left:549px;top:19px;width:2px;height:113px;background:#000;"></i>
<i style="left:543px;top:80px;width:15px;height:1px;background:#000000;"></i>
<i style="left:557px;top:69px;width:1px;height:11px;background:#000000;"></i>
<i style="left:543px;top:69px;width:14px;height:1px;background:#f5f5f5;"></i>
<i style="left:543px;top:70px;width:1px;height:10px;background:#f5f5f5;"></i>
<i style="left:544px;top:79px;width:13px;height:1px;background:#8a8a8a;"></i>
<i style="left:556px;top:70px;width:1px;height:9px;background:#8a8a8a;"></i>
<i style="left:544px;top:70px;width:12px;height:1px;background:#d5d5d5;"></i>
<i style="left:544px;top:71px;width:1px;height:8px;background:#d5d5d5;"></i>
<i style="left:545px;top:71px;width:11px;height:8px;background:#c0c0c0;"></i>
<i style="left:545px;top:76px;width:11px;height:1px;background:#f5f5f5;"></i>
<i style="left:555px;top:73px;width:1px;height:3px;background:#f5f5f5;"></i>
<i style="left:545px;top:73px;width:10px;height:1px;background:#555555;"></i>
<i style="left:545px;top:74px;width:1px;height:2px;background:#555555;"></i>
<i style="left:546px;top:74px;width:9px;height:2px;background:#000;"></i>
<i style="left:548px;top:212px;width:4px;height:1px;background:#f5f5f5;"></i>
<i style="left:551px;top:138px;width:1px;height:74px;background:#f5f5f5;"></i>
<i style="left:548px;top:138px;width:3px;height:1px;background:#555555;"></i>
<i style="left:548px;top:139px;width:1px;height:73px;background:#555555;"></i>
<i style="left:549px;top:139px;width:2px;height:73px;background:#000;"></i>
<i style="left:543px;top:181px;width:15px;height:1px;background:#000000;"></i>
<i style="left:557px;top:170px;width:1px;height:11px;background:#000000;"></i>
<i style="left:543px;top:170px;width:14px;height:1px;background:#f5f5f5;"></i>
<i style="left:543px;top:171px;width:1px;height:10px;background:#f5f5f5;"></i>
<i style="left:544px;top:180px;width:13px;height:1px;background:#8a8a8a;"></i>
<i style="left:556px;top:171px;width:1px;height:9px;background:#8a8a8a;"></i>
<i style="left:544px;top:171px;width:12px;height:1px;background:#d5d5d5;"></i>
<i style="left:544px;top:172px;width:1px;height:8px;background:#d5d5d5;"></i>
<i style="left:545px;top:172px;width:11px;height:8px;background:#c0c0c0;"></i>
<i style="left:545px;top:177px;width:11px;height:1px;background:#f5f5f5;"></i>
<i style="left:555px;top:174px;width:1px;height:3px;background:#f5f5f5;"></i>
<i style="left:545px;top:174px;width:10px;height:1px;background:#555555;"></i>
<i style="left:545px;top:175px;width:1px;height:2px;background:#555555;"></i>
<i style="left:546px;top:175px;width:9px;height:2px;background:#00e4ff;"></i>
<b style="left:566.00px;top:3px;font-size:10.40px;line-height:14px;font-weight:bold;color:#000;transform:scaleX(1.0837)">29</b>
<b style="left:566.00px;top:213px;font-size:10.40px;line-height:14px;font-weight:bold;color:#000;transform:scaleX(1.0837)">29</b>
<i style="left:568px;top:132px;width:4px;height:1px;background:#f5f5f5;"></i>
<i style="left:571px;top:18px;width:1px;height:114px;background:#f5f5f5;"></i>
<i style="left:568px;top:18px;width:3px;height:1px;background:#555555;"></i>
<i style="left:568px;top:19px;width:1px;height:113px;background:#555555;"></i>
<i style="left:569px;top:19px;width:2px;height:113px;background:#000;"></i>
<i style="left:563px;top:80px;width:15px;height:1px;background:#000000;"></i>
<i style="left:577px;top:69px;width:1px;height:11px;background:#000000;"></i>
<i style="left:563px;top:69px;width:14px;height:1px;background:#f5f5f5;"></i>
<i style="left:563px;top:70px;width:1px;height:10px;background:#f5f5f5;"></i>
<i style="left:564px;top:79px;width:13px;height:1px;background:#8a8a8a;"></i>
<i style="left:576px;top:70px;width:1px;height:9px;background:#8a8a8a;"></i>
<i style="left:564px;top:70px;width:12px;height:1px;background:#d5d5d5;"></i>
<i style="left:564px;top:71px;width:1px;height:8px;background:#d5d5d5;"></i>
<i style="left:565px;top:71px;width:11px;height:8px;background:#c0c0c0;"></i>
<i style="left:565px;top:76px;width:11px;height:1px;background:#f5f5f5;"></i>
<i style="left:575px;top:73px;width:1px;height:3px;background:#f5f5f5;"></i>
<i style="left:565px;top:73px;width:10px;height:1px;background:#555555;"></i>
<i style="left:565px;top:74px;width:1px;height:2px;background:#555555;"></i>
<i style="left:566px;top:74px;width:9px;height:2px;background:#000;"></i>
<i style="left:568px;top:212px;width:4px;height:1px;background:#f5f5f5;"></i>
<i style="left:571px;top:138px;width:1px;height:74px;background:#f5f5f5;"></i>
<i style="left:568px;top:138px;width:3px;height:1px;background:#555555;"></i>
<i style="left:568px;top:139px;width:1px;height:73px;background:#555555;"></i>
<i style="left:569px;top:139px;width:2px;height:73px;background:#000;"></i>
<i style="left:563px;top:181px;width:15px;height:1px;background:#000000;"></i>
<i style="left:577px;top:170px;width:1px;height:11px;background:#000000;"></i>
<i style="left:563px;top:170px;width:14px;height:1px;background:#f5f5f5;"></i>
<i style="left:563px;top:171px;width:1px;height:10px;background:#f5f5f5;"></i>
<i style="left:564px;top:180px;width:13px;height:1px;background:#8a8a8a;"></i>
<i style="left:576px;top:171px;width:1px;height:9px;background:#8a8a8a;"></i>
<i style="left:564px;top:171px;width:12px;height:1px;background:#d5d5d5;"></i>
<i style="left:564px;top:172px;width:1px;height:8px;background:#d5d5d5;"></i>
<i style="left:565px;top:172px;width:11px;height:8px;background:#c0c0c0;"></i>
<i style="left:565px;top:177px;width:11px;height:1px;background:#f5f5f5;"></i>
<i style="left:575px;top:174px;width:1px;height:3px;background:#f5f5f5;"></i>
<i style="left:565px;top:174px;width:10px;height:1px;background:#555555;"></i>
<i style="left:565px;top:175px;width:1px;height:2px;background:#555555;"></i>
<i style="left:566px;top:175px;width:9px;height:2px;background:#00e4ff;"></i>
<b style="left:586.00px;top:3px;font-size:10.40px;line-height:14px;font-weight:bold;color:#000;transform:scaleX(1.0837)">30</b>
<b style="left:586.00px;top:213px;font-size:10.40px;line-height:14px;font-weight:bold;color:#000;transform:scaleX(1.0837)">30</b>
<i style="left:588px;top:132px;width:4px;height:1px;background:#f5f5f5;"></i>
<i style="left:591px;top:18px;width:1px;height:114px;background:#f5f5f5;"></i>
<i style="left:588px;top:18px;width:3px;height:1px;background:#555555;"></i>
<i style="left:588px;top:19px;width:1px;height:113px;background:#555555;"></i>
<i style="left:589px;top:19px;width:2px;height:113px;background:#000;"></i>
<i style="left:583px;top:80px;width:15px;height:1px;background:#000000;"></i>
<i style="left:597px;top:69px;width:1px;height:11px;background:#000000;"></i>
<i style="left:583px;top:69px;width:14px;height:1px;background:#f5f5f5;"></i>
<i style="left:583px;top:70px;width:1px;height:10px;background:#f5f5f5;"></i>
<i style="left:584px;top:79px;width:13px;height:1px;background:#8a8a8a;"></i>
<i style="left:596px;top:70px;width:1px;height:9px;background:#8a8a8a;"></i>
<i style="left:584px;top:70px;width:12px;height:1px;background:#d5d5d5;"></i>
<i style="left:584px;top:71px;width:1px;height:8px;background:#d5d5d5;"></i>
<i style="left:585px;top:71px;width:11px;height:8px;background:#c0c0c0;"></i>
<i style="left:585px;top:76px;width:11px;height:1px;background:#f5f5f5;"></i>
<i style="left:595px;top:73px;width:1px;height:3px;background:#f5f5f5;"></i>
<i style="left:585px;top:73px;width:10px;height:1px;background:#555555;"></i>
<i style="left:585px;top:74px;width:1px;height:2px;background:#555555;"></i>
<i style="left:586px;top:74px;width:9px;height:2px;background:#000;"></i>
<i style="left:588px;top:212px;width:4px;height:1px;background:#f5f5f5;"></i>
<i style="left:591px;top:138px;width:1px;height:74px;background:#f5f5f5;"></i>
<i style="left:588px;top:138px;width:3px;height:1px;background:#555555;"></i>
<i style="left:588px;top:139px;width:1px;height:73px;background:#555555;"></i>
<i style="left:589px;top:139px;width:2px;height:73px;background:#000;"></i>
<i style="left:583px;top:181px;width:15px;height:1px;background:#000000;"></i>
<i style="left:597px;top:170px;width:1px;height:11px;background:#000000;"></i>
<i style="left:583px;top:170px;width:14px;height:1px;background:#f5f5f5;"></i>
<i style="left:583px;top:171px;width:1px;height:10px;background:#f5f5f5;"></i>
<i style="left:584px;top:180px;width:13px;height:1px;background:#8a8a8a;"></i>
<i style="left:596px;top:171px;width:1px;height:9px;background:#8a8a8a;"></i>
<i style="left:584px;top:171px;width:12px;height:1px;background:#d5d5d5;"></i>
<i style="left:584px;top:172px;width:1px;height:8px;background:#d5d5d5;"></i>
<i style="left:585px;top:172px;width:11px;height:8px;background:#c0c0c0;"></i>
<i style="left:585px;top:177px;width:11px;height:1px;background:#f5f5f5;"></i>
<i style="left:595px;top:174px;width:1px;height:3px;background:#f5f5f5;"></i>
<i style="left:585px;top:174px;width:10px;height:1px;background:#555555;"></i>
<i style="left:585px;top:175px;width:1px;height:2px;background:#555555;"></i>
<i style="left:586px;top:175px;width:9px;height:2px;background:#00e4ff;"></i>
<b style="left:606.00px;top:3px;font-size:10.40px;line-height:14px;font-weight:bold;color:#000;transform:scaleX(1.0837)">31</b>
<b style="left:606.00px;top:213px;font-size:10.40px;line-height:14px;font-weight:bold;color:#000;transform:scaleX(1.0837)">31</b>
<i style="left:608px;top:132px;width:4px;height:1px;background:#f5f5f5;"></i>
<i style="left:611px;top:18px;width:1px;height:114px;background:#f5f5f5;"></i>
<i style="left:608px;top:18px;width:3px;height:1px;background:#555555;"></i>
<i style="left:608px;top:19px;width:1px;height:113px;background:#555555;"></i>
<i style="left:609px;top:19px;width:2px;height:113px;background:#000;"></i>
<i style="left:603px;top:80px;width:15px;height:1px;background:#000000;"></i>
<i style="left:617px;top:69px;width:1px;height:11px;background:#000000;"></i>
<i style="left:603px;top:69px;width:14px;height:1px;background:#f5f5f5;"></i>
<i style="left:603px;top:70px;width:1px;height:10px;background:#f5f5f5;"></i>
<i style="left:604px;top:79px;width:13px;height:1px;background:#8a8a8a;"></i>
<i style="left:616px;top:70px;width:1px;height:9px;background:#8a8a8a;"></i>
<i style="left:604px;top:70px;width:12px;height:1px;background:#d5d5d5;"></i>
<i style="left:604px;top:71px;width:1px;height:8px;background:#d5d5d5;"></i>
<i style="left:605px;top:71px;width:11px;height:8px;background:#c0c0c0;"></i>
<i style="left:605px;top:76px;width:11px;height:1px;background:#f5f5f5;"></i>
<i style="left:615px;top:73px;width:1px;height:3px;background:#f5f5f5;"></i>
<i style="left:605px;top:73px;width:10px;height:1px;background:#555555;"></i>
<i style="left:605px;top:74px;width:1px;height:2px;background:#555555;"></i>
<i style="left:606px;top:74px;width:9px;height:2px;background:#000;"></i>
<i style="left:608px;top:212px;width:4px;height:1px;background:#f5f5f5;"></i>
<i style="left:611px;top:138px;width:1px;height:74px;background:#f5f5f5;"></i>
<i style="left:608px;top:138px;width:3px;height:1px;background:#555555;"></i>
<i style="left:608px;top:139px;width:1px;height:73px;background:#555555;"></i>
<i style="left:609px;top:139px;width:2px;height:73px;background:#000;"></i>
<i style="left:603px;top:181px;width:15px;height:1px;background:#000000;"></i>
<i style="left:617px;top:170px;width:1px;height:11px;background:#000000;"></i>
<i style="left:603px;top:170px;width:14px;height:1px;background:#f5f5f5;"></i>
<i style="left:603px;top:171px;width:1px;height:10px;background:#f5f5f5;"></i>
<i style="left:604px;top:180px;width:13px;height:1px;background:#8a8a8a;"></i>
<i style="left:616px;top:171px;width:1px;height:9px;background:#8a8a8a;"></i>
<i style="left:604px;top:171px;width:12px;height:1px;background:#d5d5d5;"></i>
<i style="left:604px;top:172px;width:1px;height:8px;background:#d5d5d5;"></i>
<i style="left:605px;top:172px;width:11px;height:8px;background:#c0c0c0;"></i>
<i style="left:605px;top:177px;width:11px;height:1px;background:#f5f5f5;"></i>
<i style="left:615px;top:174px;width:1px;height:3px;background:#f5f5f5;"></i>
<i style="left:605px;top:174px;width:10px;height:1px;background:#555555;"></i>
<i style="left:605px;top:175px;width:1px;height:2px;background:#555555;"></i>
<i style="left:606px;top:175px;width:9px;height:2px;background:#00e4ff;"></i>
<b style="left:626.00px;top:3px;font-size:10.40px;line-height:14px;font-weight:bold;color:#000;transform:scaleX(1.0837)">32</b>
<b style="left:626.00px;top:213px;font-size:10.40px;line-height:14px;font-weight:bold;color:#000;transform:scaleX(1.0837)">32</b>
<i style="left:628px;top:132px;width:4px;height:1px;background:#f5f5f5;"></i>
<i style="left:631px;top:18px;width:1px;height:114px;background:#f5f5f5;"></i>
<i style="left:628px;top:18px;width:3px;height:1px;background:#555555;"></i>
<i style="left:628px;top:19px;width:1px;height:113px;background:#555555;"></i>
<i style="left:629px;top:19px;width:2px;height:113px;background:#000;"></i>
<i style="left:623px;top:80px;width:15px;height:1px;background:#000000;"></i>
<i style="left:637px;top:69px;width:1px;height:11px;background:#000000;"></i>
<i style="left:623px;top:69px;width:14px;height:1px;background:#f5f5f5;"></i>
<i style="left:623px;top:70px;width:1px;height:10px;background:#f5f5f5;"></i>
<i style="left:624px;top:79px;width:13px;height:1px;background:#8a8a8a;"></i>
<i style="left:636px;top:70px;width:1px;height:9px;background:#8a8a8a;"></i>
<i style="left:624px;top:70px;width:12px;height:1px;background:#d5d5d5;"></i>
<i style="left:624px;top:71px;width:1px;height:8px;background:#d5d5d5;"></i>
<i style="left:625px;top:71px;width:11px;height:8px;background:#c0c0c0;"></i>
<i style="left:625px;top:76px;width:11px;height:1px;background:#f5f5f5;"></i>
<i style="left:635px;top:73px;width:1px;height:3px;background:#f5f5f5;"></i>
<i style="left:625px;top:73px;width:10px;height:1px;background:#555555;"></i>
<i style="left:625px;top:74px;width:1px;height:2px;background:#555555;"></i>
<i style="left:626px;top:74px;width:9px;height:2px;background:#000;"></i>
<i style="left:628px;top:212px;width:4px;height:1px;background:#f5f5f5;"></i>
<i style="left:631px;top:138px;width:1px;height:74px;background:#f5f5f5;"></i>
<i style="left:628px;top:138px;width:3px;height:1px;background:#555555;"></i>
<i style="left:628px;top:139px;width:1px;height:73px;background:#555555;"></i>
<i style="left:629px;top:139px;width:2px;height:73px;background:#000;"></i>
<i style="left:623px;top:181px;width:15px;height:1px;background:#000000;"></i>
<i style="left:637px;top:170px;width:1px;height:11px;background:#000000;"></i>
<i style="left:623px;top:170px;width:14px;height:1px;background:#f5f5f5;"></i>
<i style="left:623px;top:171px;width:1px;height:10px;background:#f5f5f5;"></i>
<i style="left:624px;top:180px;width:13px;height:1px;background:#8a8a8a;"></i>
<i style="left:636px;top:171px;width:1px;height:9px;background:#8a8a8a;"></i>
<i style="left:624px;top:171px;width:12px;height:1px;background:#d5d5d5;"></i>
<i style="left:624px;top:172px;width:1px;height:8px;background:#d5d5d5;"></i>
<i style="left:625px;top:172px;width:11px;height:8px;background:#c0c0c0;"></i>
<i style="left:625px;top:177px;width:11px;height:1px;background:#f5f5f5;"></i>
<i style="left:635px;top:174px;width:1px;height:3px;background:#f5f5f5;"></i>
<i style="left:625px;top:174px;width:10px;height:1px;background:#555555;"></i>
<i style="left:625px;top:175px;width:1px;height:2px;background:#555555;"></i>
<i style="left:626px;top:175px;width:9px;height:2px;background:#00e4ff;"></i>
<b style="left:646.00px;top:3px;font-size:10.40px;line-height:14px;font-weight:bold;color:#000;transform:scaleX(1.0837)">33</b>
<b style="left:646.00px;top:213px;font-size:10.40px;line-height:14px;font-weight:bold;color:#000;transform:scaleX(1.0837)">33</b>
<i style="left:648px;top:132px;width:4px;height:1px;background:#f5f5f5;"></i>
<i style="left:651px;top:18px;width:1px;height:114px;background:#f5f5f5;"></i>
<i style="left:648px;top:18px;width:3px;height:1px;background:#555555;"></i>
<i style="left:648px;top:19px;width:1px;height:113px;background:#555555;"></i>
<i style="left:649px;top:19px;width:2px;height:113px;background:#000;"></i>
<i style="left:643px;top:80px;width:15px;height:1px;background:#000000;"></i>
<i style="left:657px;top:69px;width:1px;height:11px;background:#000000;"></i>
<i style="left:643px;top:69px;width:14px;height:1px;background:#f5f5f5;"></i>
<i style="left:643px;top:70px;width:1px;height:10px;background:#f5f5f5;"></i>
<i style="left:644px;top:79px;width:13px;height:1px;background:#8a8a8a;"></i>
<i style="left:656px;top:70px;width:1px;height:9px;background:#8a8a8a;"></i>
<i style="left:644px;top:70px;width:12px;height:1px;background:#d5d5d5;"></i>
<i style="left:644px;top:71px;width:1px;height:8px;background:#d5d5d5;"></i>
<i style="left:645px;top:71px;width:11px;height:8px;background:#c0c0c0;"></i>
<i style="left:645px;top:76px;width:11px;height:1px;background:#f5f5f5;"></i>
<i style="left:655px;top:73px;width:1px;height:3px;background:#f5f5f5;"></i>
<i style="left:645px;top:73px;width:10px;height:1px;background:#555555;"></i>
<i style="left:645px;top:74px;width:1px;height:2px;background:#555555;"></i>
<i style="left:646px;top:74px;width:9px;height:2px;background:#000;"></i>
<i style="left:648px;top:212px;width:4px;height:1px;background:#f5f5f5;"></i>
<i style="left:651px;top:138px;width:1px;height:74px;background:#f5f5f5;"></i>
<i style="left:648px;top:138px;width:3px;height:1px;background:#555555;"></i>
<i style="left:648px;top:139px;width:1px;height:73px;background:#555555;"></i>
<i style="left:649px;top:139px;width:2px;height:73px;background:#000;"></i>
<i style="left:643px;top:181px;width:15px;height:1px;background:#000000;"></i>
<i style="left:657px;top:170px;width:1px;height:11px;background:#000000;"></i>
<i style="left:643px;top:170px;width:14px;height:1px;background:#f5f5f5;"></i>
<i style="left:643px;top:171px;width:1px;height:10px;background:#f5f5f5;"></i>
<i style="left:644px;top:180px;width:13px;height:1px;background:#8a8a8a;"></i>
<i style="left:656px;top:171px;width:1px;height:9px;background:#8a8a8a;"></i>
<i style="left:644px;top:171px;width:12px;height:1px;background:#d5d5d5;"></i>
<i style="left:644px;top:172px;width:1px;height:8px;background:#d5d5d5;"></i>
<i style="left:645px;top:172px;width:11px;height:8px;background:#c0c0c0;"></i>
<i style="left:645px;top:177px;width:11px;height:1px;background:#f5f5f5;"></i>
<i style="left:655px;top:174px;width:1px;height:3px;background:#f5f5f5;"></i>
<i style="left:645px;top:174px;width:10px;height:1px;background:#555555;"></i>
<i style="left:645px;top:175px;width:1px;height:2px;background:#555555;"></i>
<i style="left:646px;top:175px;width:9px;height:2px;background:#00e4ff;"></i>
</div>
<i style="left:14px;top:579px;width:656px;height:16px;background:#959595;"></i>
<i style="left:14px;top:594px;width:16px;height:1px;background:#000000;"></i>
<i style="left:29px;top:579px;width:1px;height:15px;background:#000000;"></i>
<i style="left:14px;top:579px;width:15px;height:1px;background:#f5f5f5;"></i>
<i style="left:14px;top:580px;width:1px;height:14px;background:#f5f5f5;"></i>
<i style="left:15px;top:593px;width:14px;height:1px;background:#8a8a8a;"></i>
<i style="left:28px;top:580px;width:1px;height:13px;background:#8a8a8a;"></i>
<i style="left:15px;top:580px;width:13px;height:1px;background:#d5d5d5;"></i>
<i style="left:15px;top:581px;width:1px;height:12px;background:#d5d5d5;"></i>
<i style="left:16px;top:581px;width:12px;height:12px;background:#c0c0c0;"></i>
<svg style="position:absolute;left:18px;top:581px" width="8" height="12"><polygon fill="#000" points="1,6 6,1 6,11"/></svg>
<i style="left:654px;top:594px;width:16px;height:1px;background:#000000;"></i>
<i style="left:669px;top:579px;width:1px;height:15px;background:#000000;"></i>
<i style="left:654px;top:579px;width:15px;height:1px;background:#f5f5f5;"></i>
<i style="left:654px;top:580px;width:1px;height:14px;background:#f5f5f5;"></i>
<i style="left:655px;top:593px;width:14px;height:1px;background:#8a8a8a;"></i>
<i style="left:668px;top:580px;width:1px;height:13px;background:#8a8a8a;"></i>
<i style="left:655px;top:580px;width:13px;height:1px;background:#d5d5d5;"></i>
<i style="left:655px;top:581px;width:1px;height:12px;background:#d5d5d5;"></i>
<i style="left:656px;top:581px;width:12px;height:12px;background:#c0c0c0;"></i>
<svg style="position:absolute;left:657px;top:581px" width="8" height="12"><polygon fill="#000" points="7,6 2,1 2,11"/></svg>
<i style="left:30px;top:594px;width:160px;height:1px;background:#000000;"></i>
<i style="left:189px;top:579px;width:1px;height:15px;background:#000000;"></i>
<i style="left:30px;top:579px;width:159px;height:1px;background:#f5f5f5;"></i>
<i style="left:30px;top:580px;width:1px;height:14px;background:#f5f5f5;"></i>
<i style="left:31px;top:593px;width:158px;height:1px;background:#8a8a8a;"></i>
<i style="left:188px;top:580px;width:1px;height:13px;background:#8a8a8a;"></i>
<i style="left:31px;top:580px;width:157px;height:1px;background:#d5d5d5;"></i>
<i style="left:31px;top:581px;width:1px;height:12px;background:#d5d5d5;"></i>
<i style="left:32px;top:581px;width:156px;height:12px;background:#c0c0c0;"></i>
<i style="left:672px;top:347px;width:65px;height:1px;background:#555555;"></i>
<i style="left:672px;top:348px;width:1px;height:64px;background:#555555;"></i>
<i style="left:673px;top:411px;width:64px;height:1px;background:#f5f5f5;"></i>
<i style="left:736px;top:348px;width:1px;height:63px;background:#f5f5f5;"></i>
<i style="left:673px;top:348px;width:63px;height:1px;background:#f5f5f5;"></i>
<i style="left:673px;top:349px;width:1px;height:62px;background:#f5f5f5;"></i>
<i style="left:674px;top:410px;width:62px;height:1px;background:#555555;"></i>
<i style="left:735px;top:349px;width:1px;height:61px;background:#555555;"></i>
<b style="left:680.00px;top:345px;font-size:10.80px;line-height:14px;font-weight:normal;color:#000;transform:scaleX(1.0492)">Harmonic</b>
<b style="left:693.00px;top:358px;font-size:10.80px;line-height:14px;font-weight:normal;color:#000;transform:scaleX(1.0648)">Shift</b>
<i style="left:677px;top:386px;width:11px;height:1px;background:#000000;"></i>
<i style="left:687px;top:372px;width:1px;height:14px;background:#000000;"></i>
<i style="left:677px;top:372px;width:10px;height:1px;background:#f5f5f5;"></i>
<i style="left:677px;top:373px;width:1px;height:13px;background:#f5f5f5;"></i>
<i style="left:678px;top:385px;width:9px;height:1px;background:#8a8a8a;"></i>
<i style="left:686px;top:373px;width:1px;height:12px;background:#8a8a8a;"></i>
<i style="left:678px;top:373px;width:8px;height:1px;background:#d5d5d5;"></i>
<i style="left:678px;top:374px;width:1px;height:11px;background:#d5d5d5;"></i>
<i style="left:679px;top:374px;width:7px;height:11px;background:#c0c0c0;"></i>
<svg style="position:absolute;left:679px;top:375px" width="7" height="10"><polygon fill="#000" points="1,5 5,1 5,9"/></svg>
<i style="left:721px;top:386px;width:11px;height:1px;background:#000000;"></i>
<i style="left:731px;top:372px;width:1px;height:14px;background:#000000;"></i>
<i style="left:721px;top:372px;width:10px;height:1px;background:#f5f5f5;"></i>
<i style="left:721px;top:373px;width:1px;height:13px;background:#f5f5f5;"></i>
<i style="left:722px;top:385px;width:9px;height:1px;background:#8a8a8a;"></i>
<i style="left:730px;top:373px;width:1px;height:12px;background:#8a8a8a;"></i>
<i style="left:722px;top:373px;width:8px;height:1px;background:#d5d5d5;"></i>
<i style="left:722px;top:374px;width:1px;height:11px;background:#d5d5d5;"></i>
<i style="left:723px;top:374px;width:7px;height:11px;background:#c0c0c0;"></i>
<svg style="position:absolute;left:723px;top:375px" width="7" height="10"><polygon fill="#000" points="5,5 1,1 1,9"/></svg>
<i style="left:688px;top:386px;width:33px;height:1px;background:#f5f5f5;"></i>
<i style="left:720px;top:372px;width:1px;height:14px;background:#f5f5f5;"></i>
<i style="left:688px;top:372px;width:32px;height:1px;background:#8a8a8a;"></i>
<i style="left:688px;top:373px;width:1px;height:13px;background:#8a8a8a;"></i>
<i style="left:689px;top:385px;width:31px;height:1px;background:#aaaaaa;"></i>
<i style="left:719px;top:373px;width:1px;height:12px;background:#aaaaaa;"></i>
<i style="left:689px;top:373px;width:30px;height:1px;background:#000000;"></i>
<i style="left:689px;top:374px;width:1px;height:11px;background:#000000;"></i>
<i style="left:690px;top:374px;width:29px;height:11px;background:#fff;"></i>
<b style="left:700.67px;top:371px;font-size:11.66px;line-height:15px;font-weight:bold;color:#000;transform:scaleX(1.1804);-webkit-text-stroke:0.30px #000">0</b>
<i style="left:677px;top:406px;width:20px;height:1px;background:#555555;"></i>
<i style="left:696px;top:392px;width:1px;height:14px;background:#555555;"></i>
<i style="left:677px;top:392px;width:19px;height:1px;background:#f5f5f5;"></i>
<i style="left:677px;top:393px;width:1px;height:13px;background:#f5f5f5;"></i>
<i style="left:678px;top:393px;width:18px;height:13px;background:#c0c0c0;"></i>
<b style="left:683.80px;top:392px;font-size:11.88px;line-height:15px;font-weight:bold;color:#000;transform:scaleX(0.7716);-webkit-text-stroke:0.30px #000">R</b>
<i style="left:699px;top:403px;width:9px;height:1px;background:#f5f5f5;"></i>
<i style="left:707px;top:394px;width:1px;height:9px;background:#f5f5f5;"></i>
<i style="left:699px;top:394px;width:8px;height:1px;background:#8a8a8a;"></i>
<i style="left:699px;top:395px;width:1px;height:8px;background:#8a8a8a;"></i>
<i style="left:700px;top:402px;width:7px;height:1px;background:#aaaaaa;"></i>
<i style="left:706px;top:395px;width:1px;height:7px;background:#aaaaaa;"></i>
<i style="left:700px;top:395px;width:6px;height:1px;background:#000000;"></i>
<i style="left:700px;top:396px;width:1px;height:6px;background:#000000;"></i>
<i style="left:701px;top:396px;width:5px;height:6px;background:#fff;"></i>
<b style="left:707.00px;top:392px;font-size:10.80px;line-height:14px;font-weight:normal;color:#000;transform:scaleX(0.9814)">preH</b>
<i style="left:672px;top:417px;width:65px;height:1px;background:#555555;"></i>
<i style="left:672px;top:418px;width:1px;height:89px;background:#555555;"></i>
<i style="left:673px;top:506px;width:64px;height:1px;background:#f5f5f5;"></i>
<i style="left:736px;top:418px;width:1px;height:88px;background:#f5f5f5;"></i>
<i style="left:673px;top:418px;width:63px;height:1px;background:#f5f5f5;"></i>
<i style="left:673px;top:419px;width:1px;height:87px;background:#f5f5f5;"></i>
<i style="left:674px;top:505px;width:62px;height:1px;background:#555555;"></i>
<i style="left:735px;top:419px;width:1px;height:86px;background:#555555;"></i>
<b style="left:676.00px;top:418px;font-size:10.80px;line-height:14px;font-weight:normal;color:#000;transform:scaleX(1.0258)">Adpt.Harm.</b>
<i style="left:677px;top:446px;width:55px;height:1px;background:#f5f5f5;"></i>
<i style="left:731px;top:433px;width:1px;height:13px;background:#f5f5f5;"></i>
<i style="left:677px;top:433px;width:54px;height:1px;background:#8a8a8a;"></i>
<i style="left:677px;top:434px;width:1px;height:12px;background:#8a8a8a;"></i>
<i style="left:678px;top:445px;width:53px;height:1px;background:#aaaaaa;"></i>
<i style="left:730px;top:434px;width:1px;height:11px;background:#aaaaaa;"></i>
<i style="left:678px;top:434px;width:52px;height:1px;background:#000000;"></i>
<i style="left:678px;top:435px;width:1px;height:10px;background:#000000;"></i>
<i style="left:679px;top:435px;width:51px;height:10px;background:#fff;"></i>
<b style="left:682.20px;top:432px;font-size:11.88px;line-height:15px;font-weight:bold;color:#000;transform:scaleX(0.9386);-webkit-text-stroke:0.30px #000">OFF</b>
<i style="left:720px;top:444px;width:10px;height:1px;background:#000000;"></i>
<i style="left:729px;top:435px;width:1px;height:9px;background:#000000;"></i>
<i style="left:720px;top:435px;width:9px;height:1px;background:#f5f5f5;"></i>
<i style="left:720px;top:436px;width:1px;height:8px;background:#f5f5f5;"></i>
<i style="left:721px;top:443px;width:8px;height:1px;background:#8a8a8a;"></i>
<i style="left:728px;top:436px;width:1px;height:7px;background:#8a8a8a;"></i>
<i style="left:721px;top:436px;width:7px;height:1px;background:#d5d5d5;"></i>
<i style="left:721px;top:437px;width:1px;height:6px;background:#d5d5d5;"></i>
<i style="left:722px;top:437px;width:6px;height:6px;background:#c0c0c0;"></i>
<svg style="position:absolute;left:722px;top:438px" width="5" height="3"><polygon fill="#000" points="0,0 5,0 2.5,3.0"/></svg>
<i style="left:677px;top:458px;width:55px;height:1px;background:#f5f5f5;"></i>
<i style="left:731px;top:455px;width:1px;height:3px;background:#f5f5f5;"></i>
<i style="left:677px;top:455px;width:54px;height:1px;background:#555555;"></i>
<i style="left:677px;top:456px;width:1px;height:2px;background:#555555;"></i>
<i style="left:678px;top:456px;width:53px;height:2px;background:#000;"></i>
<i style="left:700px;top:461px;width:10px;height:1px;background:#000000;"></i>
<i style="left:709px;top:452px;width:1px;height:9px;background:#000000;"></i>
<i style="left:700px;top:452px;width:9px;height:1px;background:#f5f5f5;"></i>
<i style="left:700px;top:453px;width:1px;height:8px;background:#f5f5f5;"></i>
<i style="left:701px;top:460px;width:8px;height:1px;background:#8a8a8a;"></i>
<i style="left:708px;top:453px;width:1px;height:7px;background:#8a8a8a;"></i>
<i style="left:701px;top:453px;width:7px;height:1px;background:#d5d5d5;"></i>
<i style="left:701px;top:454px;width:1px;height:6px;background:#d5d5d5;"></i>
<i style="left:702px;top:454px;width:6px;height:6px;background:#c0c0c0;"></i>
<i style="left:703px;top:459px;width:4px;height:1px;background:#f5f5f5;"></i>
<i style="left:706px;top:454px;width:1px;height:5px;background:#f5f5f5;"></i>
<i style="left:703px;top:454px;width:3px;height:1px;background:#555555;"></i>
<i style="left:703px;top:455px;width:1px;height:4px;background:#555555;"></i>
<svg style="position:absolute;left:673px;top:463px" width="32" height="32"><defs><radialGradient id="g6890_4790" cx="0.5" cy="0.58" r="0.5"><stop offset="0" stop-color="#e6e6ea"/><stop offset="0.3" stop-color="#e6e6ea"/><stop offset="0.75" stop-color="#bdbdc1"/><stop offset="1" stop-color="#929294"/></radialGradient></defs><circle cx="16.00" cy="16.00" r="12.00" fill="url(#g6890_4790)"/><line x1="16.00" y1="6.88" x2="16.00" y2="4.60" stroke="#e4e4f8" stroke-width="1"/><line x1="20.56" y1="8.10" x2="21.70" y2="6.13" stroke="#e4e4f8" stroke-width="1"/><line x1="23.90" y1="11.44" x2="25.87" y2="10.30" stroke="#e4e4f8" stroke-width="1"/><line x1="25.12" y1="16.00" x2="27.40" y2="16.00" stroke="#e4e4f8" stroke-width="1"/><line x1="23.90" y1="20.56" x2="25.87" y2="21.70" stroke="#e4e4f8" stroke-width="1"/><line x1="20.56" y1="23.90" x2="21.70" y2="25.87" stroke="#e4e4f8" stroke-width="1"/><line x1="16.00" y1="25.12" x2="16.00" y2="27.40" stroke="#e4e4f8" stroke-width="1"/><line x1="11.44" y1="23.90" x2="10.30" y2="25.87" stroke="#e4e4f8" stroke-width="1"/><line x1="8.10" y1="20.56" x2="6.13" y2="21.70" stroke="#e4e4f8" stroke-width="1"/><line x1="6.88" y1="16.00" x2="4.60" y2="16.00" stroke="#e4e4f8" stroke-width="1"/><line x1="8.10" y1="11.44" x2="6.13" y2="10.30" stroke="#e4e4f8" stroke-width="1"/><line x1="11.44" y1="8.10" x2="10.30" y2="6.13" stroke="#e4e4f8" stroke-width="1"/><rect x="5" y="23" width="2" height="2" fill="#0050d8" shape-rendering="crispEdges"/><rect x="25" y="23" width="2" height="2" fill="#0050d8" shape-rendering="crispEdges"/><polygon fill="#000" points="16.00,4.60 12.40,13.40 19.60,13.40"/></svg>
<svg style="position:absolute;left:703px;top:463px" width="32" height="32"><defs><radialGradient id="g7190_4790" cx="0.5" cy="0.58" r="0.5"><stop offset="0" stop-color="#e6e6ea"/><stop offset="0.3" stop-color="#e6e6ea"/><stop offset="0.75" stop-color="#bdbdc1"/><stop offset="1" stop-color="#929294"/></radialGradient></defs><circle cx="16.00" cy="16.00" r="12.00" fill="url(#g7190_4790)"/><line x1="16.00" y1="6.88" x2="16.00" y2="4.60" stroke="#e4e4f8" stroke-width="1"/><line x1="20.56" y1="8.10" x2="21.70" y2="6.13" stroke="#e4e4f8" stroke-width="1"/><line x1="23.90" y1="11.44" x2="25.87" y2="10.30" stroke="#e4e4f8" stroke-width="1"/><line x1="25.12" y1="16.00" x2="27.40" y2="16.00" stroke="#e4e4f8" stroke-width="1"/><line x1="23.90" y1="20.56" x2="25.87" y2="21.70" stroke="#e4e4f8" stroke-width="1"/><line x1="20.56" y1="23.90" x2="21.70" y2="25.87" stroke="#e4e4f8" stroke-width="1"/><line x1="16.00" y1="25.12" x2="16.00" y2="27.40" stroke="#e4e4f8" stroke-width="1"/><line x1="11.44" y1="23.90" x2="10.30" y2="25.87" stroke="#e4e4f8" stroke-width="1"/><line x1="8.10" y1="20.56" x2="6.13" y2="21.70" stroke="#e4e4f8" stroke-width="1"/><line x1="6.88" y1="16.00" x2="4.60" y2="16.00" stroke="#e4e4f8" stroke-width="1"/><line x1="8.10" y1="11.44" x2="6.13" y2="10.30" stroke="#e4e4f8" stroke-width="1"/><line x1="11.44" y1="8.10" x2="10.30" y2="6.13" stroke="#e4e4f8" stroke-width="1"/><rect x="5" y="23" width="2" height="2" fill="#0050d8" shape-rendering="crispEdges"/><rect x="25" y="23" width="2" height="2" fill="#0050d8" shape-rendering="crispEdges"/><polygon fill="#000" points="16.00,4.60 12.40,13.40 19.60,13.40"/></svg>
<b style="left:676.00px;top:490px;font-size:10.80px;line-height:14px;font-weight:normal;color:#000;transform:scaleX(0.8926)">baseF</b>
<b style="left:709.40px;top:490px;font-size:10.80px;line-height:14px;font-weight:normal;color:#000;transform:scaleX(0.9537)">pow</b>
<i style="left:677px;top:526px;width:55px;height:1px;background:#555555;"></i>
<i style="left:731px;top:512px;width:1px;height:14px;background:#555555;"></i>
<i style="left:677px;top:512px;width:54px;height:1px;background:#f5f5f5;"></i>
<i style="left:677px;top:513px;width:1px;height:13px;background:#f5f5f5;"></i>
<i style="left:678px;top:513px;width:53px;height:13px;background:#c0c0c0;"></i>
<b style="left:687.00px;top:511px;font-size:12.96px;line-height:17px;font-weight:bold;color:#000;transform:scaleX(1.0802);-webkit-text-stroke:0.30px #000">Clear</b>
<i style="left:677px;top:546px;width:55px;height:1px;background:#555555;"></i>
<i style="left:731px;top:532px;width:1px;height:14px;background:#555555;"></i>
<i style="left:677px;top:532px;width:54px;height:1px;background:#f5f5f5;"></i>
<i style="left:677px;top:533px;width:1px;height:13px;background:#f5f5f5;"></i>
<i style="left:678px;top:533px;width:53px;height:13px;background:#c0c0c0;"></i>
<b style="left:689.00px;top:531px;font-size:12.96px;line-height:17px;font-weight:bold;color:#000;transform:scaleX(1.0971);-webkit-text-stroke:0.30px #000">Sine</b>
<i style="left:677px;top:566px;width:25px;height:1px;background:#555555;"></i>
<i style="left:701px;top:552px;width:1px;height:14px;background:#555555;"></i>
<i style="left:677px;top:552px;width:24px;height:1px;background:#f5f5f5;"></i>
<i style="left:677px;top:553px;width:1px;height:13px;background:#f5f5f5;"></i>
<i style="left:678px;top:553px;width:23px;height:13px;background:#0066cc;"></i>
<b style="left:684.00px;top:551px;font-size:12.96px;line-height:17px;font-weight:bold;color:#fff;transform:scaleX(1.0717);-webkit-text-stroke:0.30px #fff">C</b>
<i style="left:707px;top:566px;width:25px;height:1px;background:#555555;"></i>
<i style="left:731px;top:552px;width:1px;height:14px;background:#555555;"></i>
<i style="left:707px;top:552px;width:24px;height:1px;background:#f5f5f5;"></i>
<i style="left:707px;top:553px;width:1px;height:13px;background:#f5f5f5;"></i>
<i style="left:708px;top:553px;width:23px;height:13px;background:#0066cc;"></i>
<b style="left:715.00px;top:551px;font-size:12.96px;line-height:17px;font-weight:bold;color:#fff;transform:scaleX(1.0443);-webkit-text-stroke:0.30px #fff">P</b>
<i style="left:675px;top:596px;width:62px;height:1px;background:#555555;"></i>
<i style="left:736px;top:572px;width:1px;height:24px;background:#555555;"></i>
<i style="left:675px;top:572px;width:61px;height:1px;background:#f5f5f5;"></i>
<i style="left:675px;top:573px;width:1px;height:23px;background:#f5f5f5;"></i>
<i style="left:676px;top:573px;width:60px;height:23px;background:#c0c0c0;"></i>
<b style="left:686.00px;top:575px;font-size:15.12px;line-height:20px;font-weight:normal;color:#000;transform:scaleX(0.9837)">Close</b></div></body></html>
